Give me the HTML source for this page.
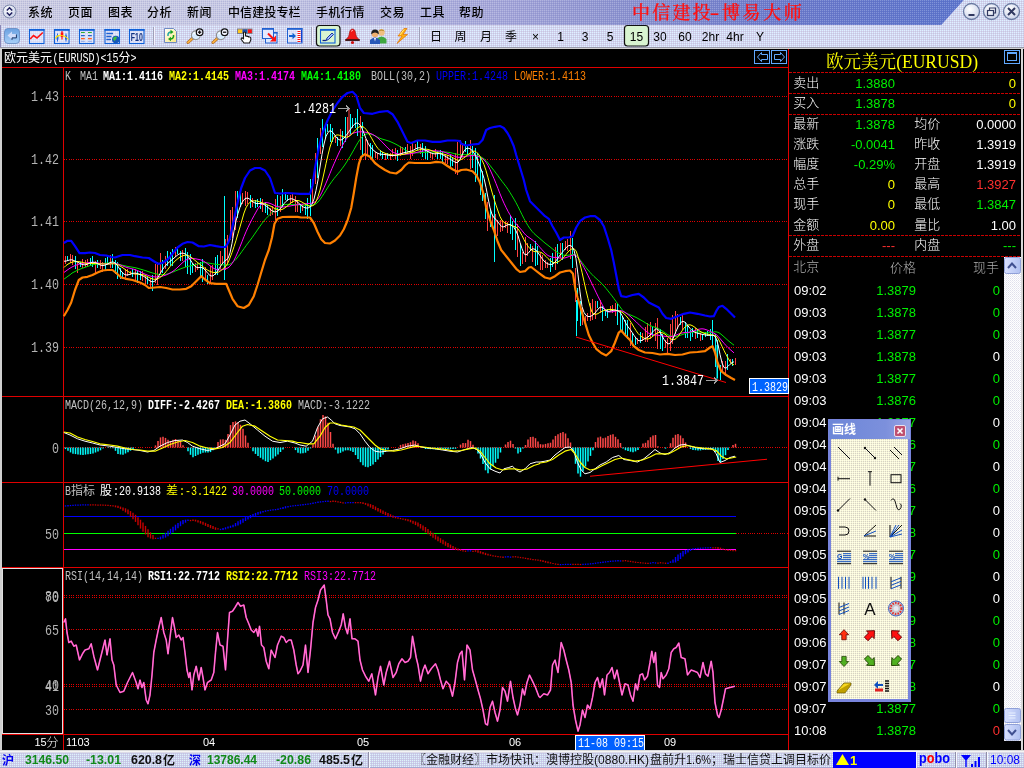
<!DOCTYPE html>
<html lang="zh-CN"><head><meta charset="utf-8"><title>中信建投-博易大师</title>
<style>
html,body{margin:0;padding:0;background:#000;}
body{width:1024px;height:768px;position:relative;overflow:hidden;font-family:"Liberation Sans","Noto Sans CJK SC",sans-serif;}
svg{display:block;will-change:transform}
text{white-space:pre}
</style></head><body>
<svg id="chart" width="1024" height="768" viewBox="0 0 1024 768" style="position:absolute;left:0;top:0" shape-rendering="crispEdges">
<rect x="0" y="49" width="2" height="702" fill="#d0d0d0"/>
<line x1="2" y1="67.5" x2="788" y2="67.5" stroke="#e00000" stroke-width="1"/>
<line x1="2" y1="396.5" x2="788" y2="396.5" stroke="#e00000" stroke-width="1"/>
<line x1="2" y1="482.5" x2="788" y2="482.5" stroke="#e00000" stroke-width="1"/>
<line x1="2" y1="567.5" x2="788" y2="567.5" stroke="#e00000" stroke-width="1"/>
<line x1="2" y1="734.5" x2="788" y2="734.5" stroke="#e00000" stroke-width="1"/>
<line x1="63.5" y1="67" x2="63.5" y2="750" stroke="#e00000" stroke-width="1"/>
<line x1="788.5" y1="49" x2="788.5" y2="750" stroke="#e00000" stroke-width="1"/>
<line x1="64" y1="96.5" x2="788" y2="96.5" stroke="#e00000" stroke-width="1" stroke-dasharray="1 1.3"/>
<line x1="64" y1="159.5" x2="788" y2="159.5" stroke="#e00000" stroke-width="1" stroke-dasharray="1 1.3"/>
<line x1="64" y1="221.5" x2="788" y2="221.5" stroke="#e00000" stroke-width="1" stroke-dasharray="1 1.3"/>
<line x1="64" y1="284.5" x2="788" y2="284.5" stroke="#e00000" stroke-width="1" stroke-dasharray="1 1.3"/>
<line x1="64" y1="347.5" x2="788" y2="347.5" stroke="#e00000" stroke-width="1" stroke-dasharray="1 1.3"/>
<line x1="64" y1="447.5" x2="788" y2="447.5" stroke="#e00000" stroke-width="1" stroke-dasharray="1 1.3"/>
<line x1="736" y1="533.5" x2="788" y2="533.5" stroke="#e00000" stroke-width="1" stroke-dasharray="1 1.3"/>
<line x1="64" y1="595.5" x2="788" y2="595.5" stroke="#e00000" stroke-width="1" stroke-dasharray="1 1.3"/>
<line x1="64" y1="597.5" x2="788" y2="597.5" stroke="#e00000" stroke-width="1" stroke-dasharray="1 1.3"/>
<line x1="64" y1="629.5" x2="788" y2="629.5" stroke="#e00000" stroke-width="1" stroke-dasharray="1 1.3"/>
<line x1="64" y1="684.5" x2="788" y2="684.5" stroke="#e00000" stroke-width="1" stroke-dasharray="1 1.3"/>
<line x1="64" y1="686.5" x2="788" y2="686.5" stroke="#e00000" stroke-width="1" stroke-dasharray="1 1.3"/>
<line x1="64" y1="709.5" x2="788" y2="709.5" stroke="#e00000" stroke-width="1" stroke-dasharray="1 1.3"/>
<path d="M2.5,568.5 H62.5 V733.5 H2.5 Z" fill="none" stroke="#e0e0e0" stroke-width="1"/>
<text x="59" y="101" fill="#b4b4b4" font-size="14" font-family='"Liberation Mono","Noto Sans CJK SC",monospace' text-anchor="end" font-weight="normal" textLength="28" lengthAdjust="spacingAndGlyphs" >1.43</text>
<text x="59" y="164" fill="#b4b4b4" font-size="14" font-family='"Liberation Mono","Noto Sans CJK SC",monospace' text-anchor="end" font-weight="normal" textLength="28" lengthAdjust="spacingAndGlyphs" >1.42</text>
<text x="59" y="226" fill="#b4b4b4" font-size="14" font-family='"Liberation Mono","Noto Sans CJK SC",monospace' text-anchor="end" font-weight="normal" textLength="28" lengthAdjust="spacingAndGlyphs" >1.41</text>
<text x="59" y="289" fill="#b4b4b4" font-size="14" font-family='"Liberation Mono","Noto Sans CJK SC",monospace' text-anchor="end" font-weight="normal" textLength="28" lengthAdjust="spacingAndGlyphs" >1.40</text>
<text x="59" y="352" fill="#b4b4b4" font-size="14" font-family='"Liberation Mono","Noto Sans CJK SC",monospace' text-anchor="end" font-weight="normal" textLength="28" lengthAdjust="spacingAndGlyphs" >1.39</text>
<text x="59" y="452.5" fill="#b4b4b4" font-size="14" font-family='"Liberation Mono","Noto Sans CJK SC",monospace' text-anchor="end" font-weight="normal" textLength="7" lengthAdjust="spacingAndGlyphs" >0</text>
<text x="59" y="538.5" fill="#b4b4b4" font-size="14" font-family='"Liberation Mono","Noto Sans CJK SC",monospace' text-anchor="end" font-weight="normal" textLength="14" lengthAdjust="spacingAndGlyphs" >50</text>
<text x="59" y="601" fill="#b4b4b4" font-size="14" font-family='"Liberation Mono","Noto Sans CJK SC",monospace' text-anchor="end" font-weight="normal" textLength="14" lengthAdjust="spacingAndGlyphs" >80</text>
<text x="59" y="602" fill="#b4b4b4" font-size="14" font-family='"Liberation Mono","Noto Sans CJK SC",monospace' text-anchor="end" font-weight="normal" textLength="14" lengthAdjust="spacingAndGlyphs" >70</text>
<text x="59" y="635" fill="#b4b4b4" font-size="14" font-family='"Liberation Mono","Noto Sans CJK SC",monospace' text-anchor="end" font-weight="normal" textLength="14" lengthAdjust="spacingAndGlyphs" >65</text>
<text x="59" y="690" fill="#b4b4b4" font-size="14" font-family='"Liberation Mono","Noto Sans CJK SC",monospace' text-anchor="end" font-weight="normal" textLength="14" lengthAdjust="spacingAndGlyphs" >40</text>
<text x="59" y="691" fill="#b4b4b4" font-size="14" font-family='"Liberation Mono","Noto Sans CJK SC",monospace' text-anchor="end" font-weight="normal" textLength="14" lengthAdjust="spacingAndGlyphs" >41</text>
<text x="59" y="715" fill="#b4b4b4" font-size="14" font-family='"Liberation Mono","Noto Sans CJK SC",monospace' text-anchor="end" font-weight="normal" textLength="14" lengthAdjust="spacingAndGlyphs" >30</text>
<text x="65" y="80" fill="#c0c0c0" font-size="12" font-family='"Liberation Mono","Noto Sans CJK SC",monospace' text-anchor="start" font-weight="normal" textLength="6" lengthAdjust="spacingAndGlyphs" >K</text>
<text x="80" y="80" fill="#c0c0c0" font-size="12" font-family='"Liberation Mono","Noto Sans CJK SC",monospace' text-anchor="start" font-weight="normal" textLength="18" lengthAdjust="spacingAndGlyphs" >MA1</text>
<text x="103" y="80" fill="#ffffff" font-size="12" font-family='"Liberation Mono","Noto Sans CJK SC",monospace' text-anchor="start" font-weight="bold" textLength="60" lengthAdjust="spacingAndGlyphs" >MA1:1.4116</text>
<text x="169" y="80" fill="#ffff00" font-size="12" font-family='"Liberation Mono","Noto Sans CJK SC",monospace' text-anchor="start" font-weight="bold" textLength="60" lengthAdjust="spacingAndGlyphs" >MA2:1.4145</text>
<text x="235" y="80" fill="#ff00ff" font-size="12" font-family='"Liberation Mono","Noto Sans CJK SC",monospace' text-anchor="start" font-weight="bold" textLength="60" lengthAdjust="spacingAndGlyphs" >MA3:1.4174</text>
<text x="301" y="80" fill="#00ff00" font-size="12" font-family='"Liberation Mono","Noto Sans CJK SC",monospace' text-anchor="start" font-weight="bold" textLength="60" lengthAdjust="spacingAndGlyphs" >MA4:1.4180</text>
<text x="371" y="80" fill="#c0c0c0" font-size="12" font-family='"Liberation Mono","Noto Sans CJK SC",monospace' text-anchor="start" font-weight="normal" textLength="60" lengthAdjust="spacingAndGlyphs" >BOLL(30,2)</text>
<text x="436" y="80" fill="#0000ff" font-size="12" font-family='"Liberation Mono","Noto Sans CJK SC",monospace' text-anchor="start" font-weight="normal" textLength="72" lengthAdjust="spacingAndGlyphs" >UPPER:1.4248</text>
<text x="514" y="80" fill="#ff8000" font-size="12" font-family='"Liberation Mono","Noto Sans CJK SC",monospace' text-anchor="start" font-weight="normal" textLength="72" lengthAdjust="spacingAndGlyphs" >LOWER:1.4113</text>
<text x="65" y="409" fill="#c0c0c0" font-size="12" font-family='"Liberation Mono","Noto Sans CJK SC",monospace' text-anchor="start" font-weight="normal" textLength="78" lengthAdjust="spacingAndGlyphs" >MACD(26,12,9)</text>
<text x="148" y="409" fill="#ffffff" font-size="12" font-family='"Liberation Mono","Noto Sans CJK SC",monospace' text-anchor="start" font-weight="bold" textLength="72" lengthAdjust="spacingAndGlyphs" >DIFF:-2.4267</text>
<text x="226" y="409" fill="#ffff00" font-size="12" font-family='"Liberation Mono","Noto Sans CJK SC",monospace' text-anchor="start" font-weight="bold" textLength="66" lengthAdjust="spacingAndGlyphs" >DEA:-1.3860</text>
<text x="298" y="409" fill="#c0c0c0" font-size="12" font-family='"Liberation Mono","Noto Sans CJK SC",monospace' text-anchor="start" font-weight="normal" textLength="72" lengthAdjust="spacingAndGlyphs" >MACD:-3.1222</text>
<text x="65" y="495" fill="#c0c0c0" font-size="12" font-family='"Liberation Mono","Noto Sans CJK SC",monospace' text-anchor="start" font-weight="normal" textLength="6" lengthAdjust="spacingAndGlyphs" >B</text>
<text x="71" y="495" fill="#c0c0c0" font-size="12" font-family='"Liberation Sans","Noto Sans CJK SC",sans-serif'>指标</text>
<text x="100" y="495" fill="#fff" font-size="12" font-family='"Liberation Sans","Noto Sans CJK SC",sans-serif'>股</text>
<text x="113" y="495" fill="#ffffff" font-size="12" font-family='"Liberation Mono","Noto Sans CJK SC",monospace' text-anchor="start" font-weight="normal" textLength="48" lengthAdjust="spacingAndGlyphs" >:20.9138</text>
<text x="166" y="495" fill="#ff0" font-size="12" font-family='"Liberation Sans","Noto Sans CJK SC",sans-serif'>差</text>
<text x="179" y="495" fill="#ffff00" font-size="12" font-family='"Liberation Mono","Noto Sans CJK SC",monospace' text-anchor="start" font-weight="normal" textLength="48" lengthAdjust="spacingAndGlyphs" >:-3.1422</text>
<text x="232" y="495" fill="#ff00ff" font-size="12" font-family='"Liberation Mono","Noto Sans CJK SC",monospace' text-anchor="start" font-weight="normal" textLength="42" lengthAdjust="spacingAndGlyphs" >30.0000</text>
<text x="279" y="495" fill="#00ff00" font-size="12" font-family='"Liberation Mono","Noto Sans CJK SC",monospace' text-anchor="start" font-weight="normal" textLength="42" lengthAdjust="spacingAndGlyphs" >50.0000</text>
<text x="327" y="495" fill="#0000ff" font-size="12" font-family='"Liberation Mono","Noto Sans CJK SC",monospace' text-anchor="start" font-weight="normal" textLength="42" lengthAdjust="spacingAndGlyphs" >70.0000</text>
<text x="65" y="580" fill="#c0c0c0" font-size="12" font-family='"Liberation Mono","Noto Sans CJK SC",monospace' text-anchor="start" font-weight="normal" textLength="78" lengthAdjust="spacingAndGlyphs" >RSI(14,14,14)</text>
<text x="148" y="580" fill="#ffffff" font-size="12" font-family='"Liberation Mono","Noto Sans CJK SC",monospace' text-anchor="start" font-weight="bold" textLength="72" lengthAdjust="spacingAndGlyphs" >RSI1:22.7712</text>
<text x="226" y="580" fill="#ffff00" font-size="12" font-family='"Liberation Mono","Noto Sans CJK SC",monospace' text-anchor="start" font-weight="bold" textLength="72" lengthAdjust="spacingAndGlyphs" >RSI2:22.7712</text>
<text x="304" y="580" fill="#ff00ff" font-size="12" font-family='"Liberation Mono","Noto Sans CJK SC",monospace' text-anchor="start" font-weight="normal" textLength="72" lengthAdjust="spacingAndGlyphs" >RSI3:22.7712</text>
<text x="34.5" y="746.3" fill="#fff" font-size="11" font-family='"Liberation Sans",sans-serif' text-anchor="start">15</text>
<text x="46.5" y="746.5" fill="#fff" font-size="12" font-family='"Liberation Sans","Noto Sans CJK SC",sans-serif' font-weight="300">分</text>
<text x="66" y="746.3" fill="#fff" font-size="11" font-family='"Liberation Sans",sans-serif' text-anchor="start">1103</text>
<text x="203" y="746.3" fill="#fff" font-size="11" font-family='"Liberation Sans",sans-serif' text-anchor="start">04</text>
<text x="357" y="746.3" fill="#fff" font-size="11" font-family='"Liberation Sans",sans-serif' text-anchor="start">05</text>
<text x="509" y="746.3" fill="#fff" font-size="11" font-family='"Liberation Sans",sans-serif' text-anchor="start">06</text>
<text x="664" y="746.3" fill="#fff" font-size="11" font-family='"Liberation Sans",sans-serif' text-anchor="start">09</text>
<rect x="575.5" y="735.5" width="69" height="15" fill="#0060ff" stroke="#ffffff"/>
<text x="578" y="746.5" fill="#ffffff" font-size="12" font-family='"Liberation Mono","Noto Sans CJK SC",monospace' text-anchor="start" font-weight="normal" textLength="66" lengthAdjust="spacingAndGlyphs" >11-08 09:15</text>
<g shape-rendering="auto">
<g shape-rendering="crispEdges">
<line x1="65.5" y1="256.2" x2="65.5" y2="264.1" stroke="#ff4040" stroke-width="1"/>
<line x1="67.5" y1="256.4" x2="67.5" y2="260.8" stroke="#00ffff" stroke-width="1"/>
<line x1="70.5" y1="253.8" x2="70.5" y2="262.6" stroke="#ff4040" stroke-width="1"/>
<line x1="72.5" y1="255.2" x2="72.5" y2="264.9" stroke="#ff4040" stroke-width="1"/>
<line x1="75.5" y1="256.4" x2="75.5" y2="268.8" stroke="#00ffff" stroke-width="1"/>
<line x1="77.5" y1="262.5" x2="77.5" y2="272.5" stroke="#ff4040" stroke-width="1"/>
<line x1="80.5" y1="261.7" x2="80.5" y2="266.5" stroke="#00ffff" stroke-width="1"/>
<line x1="82.5" y1="258.9" x2="82.5" y2="267.9" stroke="#ff4040" stroke-width="1"/>
<line x1="85.5" y1="260.4" x2="85.5" y2="267.0" stroke="#ff4040" stroke-width="1"/>
<line x1="87.5" y1="258.8" x2="87.5" y2="267.2" stroke="#ff4040" stroke-width="1"/>
<line x1="90.5" y1="258.3" x2="90.5" y2="265.8" stroke="#00ffff" stroke-width="1"/>
<line x1="92.5" y1="256.2" x2="92.5" y2="267.3" stroke="#00ffff" stroke-width="1"/>
<line x1="95.5" y1="261.3" x2="95.5" y2="272.5" stroke="#ff4040" stroke-width="1"/>
<line x1="97.5" y1="260.0" x2="97.5" y2="268.2" stroke="#00ffff" stroke-width="1"/>
<line x1="100.5" y1="259.8" x2="100.5" y2="268.6" stroke="#ff4040" stroke-width="1"/>
<line x1="102.5" y1="261.7" x2="102.5" y2="272.3" stroke="#ff4040" stroke-width="1"/>
<line x1="105.5" y1="258.4" x2="105.5" y2="269.6" stroke="#00ffff" stroke-width="1"/>
<line x1="107.5" y1="257.0" x2="107.5" y2="265.1" stroke="#00ffff" stroke-width="1"/>
<line x1="110.5" y1="255.1" x2="110.5" y2="268.3" stroke="#ff4040" stroke-width="1"/>
<line x1="112.5" y1="253.8" x2="112.5" y2="268.0" stroke="#00ffff" stroke-width="1"/>
<line x1="115.5" y1="259.6" x2="115.5" y2="273.8" stroke="#00ffff" stroke-width="1"/>
<line x1="117.5" y1="262.1" x2="117.5" y2="278.5" stroke="#00ffff" stroke-width="1"/>
<line x1="120.5" y1="267.7" x2="120.5" y2="279.3" stroke="#00ffff" stroke-width="1"/>
<line x1="122.5" y1="272.2" x2="122.5" y2="279.0" stroke="#00ffff" stroke-width="1"/>
<line x1="125.5" y1="269.2" x2="125.5" y2="279.5" stroke="#ff4040" stroke-width="1"/>
<line x1="127.5" y1="269.1" x2="127.5" y2="276.4" stroke="#ff4040" stroke-width="1"/>
<line x1="130.5" y1="270.5" x2="130.5" y2="275.2" stroke="#ff4040" stroke-width="1"/>
<line x1="132.5" y1="268.7" x2="132.5" y2="277.3" stroke="#00ffff" stroke-width="1"/>
<line x1="135.5" y1="269.0" x2="135.5" y2="279.7" stroke="#ff4040" stroke-width="1"/>
<line x1="137.5" y1="270.6" x2="137.5" y2="283.0" stroke="#00ffff" stroke-width="1"/>
<line x1="140.5" y1="270.9" x2="140.5" y2="280.0" stroke="#00ffff" stroke-width="1"/>
<line x1="142.5" y1="271.4" x2="142.5" y2="280.8" stroke="#ff4040" stroke-width="1"/>
<line x1="145.5" y1="275.5" x2="145.5" y2="284.0" stroke="#ff4040" stroke-width="1"/>
<line x1="147.5" y1="276.8" x2="147.5" y2="283.9" stroke="#00ffff" stroke-width="1"/>
<line x1="150.5" y1="278.2" x2="150.5" y2="286.6" stroke="#ff4040" stroke-width="1"/>
<line x1="152.5" y1="274.8" x2="152.5" y2="291.1" stroke="#00ffff" stroke-width="1"/>
<line x1="155.5" y1="263.5" x2="155.5" y2="283.2" stroke="#ff4040" stroke-width="1"/>
<line x1="157.5" y1="262.0" x2="157.5" y2="284.8" stroke="#ff4040" stroke-width="1"/>
<line x1="160.5" y1="253.1" x2="160.5" y2="274.2" stroke="#ff4040" stroke-width="1"/>
<line x1="162.5" y1="260.1" x2="162.5" y2="273.1" stroke="#00ffff" stroke-width="1"/>
<line x1="165.5" y1="255.5" x2="165.5" y2="269.3" stroke="#ff4040" stroke-width="1"/>
<line x1="167.5" y1="251.1" x2="167.5" y2="266.1" stroke="#00ffff" stroke-width="1"/>
<line x1="170.5" y1="251.9" x2="170.5" y2="266.1" stroke="#00ffff" stroke-width="1"/>
<line x1="172.5" y1="249.0" x2="172.5" y2="266.4" stroke="#00ffff" stroke-width="1"/>
<line x1="175.5" y1="247.0" x2="175.5" y2="257.4" stroke="#ff4040" stroke-width="1"/>
<line x1="177.5" y1="248.0" x2="177.5" y2="254.4" stroke="#00ffff" stroke-width="1"/>
<line x1="180.5" y1="250.5" x2="180.5" y2="260.5" stroke="#00ffff" stroke-width="1"/>
<line x1="182.5" y1="250.4" x2="182.5" y2="261.3" stroke="#ff4040" stroke-width="1"/>
<line x1="185.5" y1="248.3" x2="185.5" y2="266.9" stroke="#00ffff" stroke-width="1"/>
<line x1="187.5" y1="252.3" x2="187.5" y2="274.3" stroke="#00ffff" stroke-width="1"/>
<line x1="190.5" y1="254.2" x2="190.5" y2="275.1" stroke="#00ffff" stroke-width="1"/>
<line x1="192.5" y1="263.1" x2="192.5" y2="272.7" stroke="#00ffff" stroke-width="1"/>
<line x1="195.5" y1="262.7" x2="195.5" y2="272.2" stroke="#ff4040" stroke-width="1"/>
<line x1="197.5" y1="262.5" x2="197.5" y2="269.9" stroke="#ff4040" stroke-width="1"/>
<line x1="200.5" y1="261.7" x2="200.5" y2="276.6" stroke="#00ffff" stroke-width="1"/>
<line x1="202.5" y1="258.6" x2="202.5" y2="282.1" stroke="#00ffff" stroke-width="1"/>
<line x1="205.5" y1="266.9" x2="205.5" y2="279.6" stroke="#ff4040" stroke-width="1"/>
<line x1="207.5" y1="274.9" x2="207.5" y2="283.5" stroke="#00ffff" stroke-width="1"/>
<line x1="210.5" y1="265.8" x2="210.5" y2="283.9" stroke="#ff4040" stroke-width="1"/>
<line x1="212.5" y1="265.3" x2="212.5" y2="279.8" stroke="#ff4040" stroke-width="1"/>
<line x1="215.5" y1="257.4" x2="215.5" y2="275.3" stroke="#00ffff" stroke-width="1"/>
<line x1="217.5" y1="254.7" x2="217.5" y2="275.0" stroke="#00ffff" stroke-width="1"/>
<line x1="220.5" y1="251.0" x2="220.5" y2="268.5" stroke="#ff4040" stroke-width="1"/>
<line x1="222.5" y1="255.6" x2="222.5" y2="263.6" stroke="#ff4040" stroke-width="1"/>
<line x1="225.5" y1="238.7" x2="225.5" y2="269.5" stroke="#ff4040" stroke-width="1"/>
<line x1="227.5" y1="234.8" x2="227.5" y2="264.6" stroke="#ff4040" stroke-width="1"/>
<line x1="230.5" y1="209.8" x2="230.5" y2="239.7" stroke="#ff4040" stroke-width="1"/>
<line x1="232.5" y1="206.5" x2="232.5" y2="238.3" stroke="#ff4040" stroke-width="1"/>
<line x1="235.5" y1="190.8" x2="235.5" y2="229.8" stroke="#ff4040" stroke-width="1"/>
<line x1="237.5" y1="190.8" x2="237.5" y2="217.9" stroke="#00ffff" stroke-width="1"/>
<line x1="240.5" y1="190.5" x2="240.5" y2="207.2" stroke="#00ffff" stroke-width="1"/>
<line x1="242.5" y1="193.4" x2="242.5" y2="203.7" stroke="#ff4040" stroke-width="1"/>
<line x1="245.5" y1="191.2" x2="245.5" y2="205.8" stroke="#ff4040" stroke-width="1"/>
<line x1="247.5" y1="192.3" x2="247.5" y2="203.7" stroke="#ff4040" stroke-width="1"/>
<line x1="250.5" y1="194.7" x2="250.5" y2="207.8" stroke="#00ffff" stroke-width="1"/>
<line x1="252.5" y1="198.2" x2="252.5" y2="207.3" stroke="#ff4040" stroke-width="1"/>
<line x1="255.5" y1="200.4" x2="255.5" y2="207.7" stroke="#00ffff" stroke-width="1"/>
<line x1="257.5" y1="199.2" x2="257.5" y2="207.2" stroke="#00ffff" stroke-width="1"/>
<line x1="260.5" y1="197.8" x2="260.5" y2="208.8" stroke="#00ffff" stroke-width="1"/>
<line x1="262.5" y1="198.8" x2="262.5" y2="211.7" stroke="#ff4040" stroke-width="1"/>
<line x1="265.5" y1="201.8" x2="265.5" y2="213.3" stroke="#00ffff" stroke-width="1"/>
<line x1="267.5" y1="204.5" x2="267.5" y2="215.3" stroke="#00ffff" stroke-width="1"/>
<line x1="270.5" y1="207.7" x2="270.5" y2="216.0" stroke="#ff4040" stroke-width="1"/>
<line x1="272.5" y1="206.3" x2="272.5" y2="214.5" stroke="#ff4040" stroke-width="1"/>
<line x1="275.5" y1="199.2" x2="275.5" y2="219.6" stroke="#ff4040" stroke-width="1"/>
<line x1="277.5" y1="195.0" x2="277.5" y2="215.9" stroke="#00ffff" stroke-width="1"/>
<line x1="280.5" y1="195.7" x2="280.5" y2="212.4" stroke="#ff4040" stroke-width="1"/>
<line x1="282.5" y1="188.7" x2="282.5" y2="207.2" stroke="#00ffff" stroke-width="1"/>
<line x1="285.5" y1="191.8" x2="285.5" y2="200.3" stroke="#00ffff" stroke-width="1"/>
<line x1="287.5" y1="195.4" x2="287.5" y2="200.7" stroke="#00ffff" stroke-width="1"/>
<line x1="290.5" y1="194.5" x2="290.5" y2="204.3" stroke="#ff4040" stroke-width="1"/>
<line x1="292.5" y1="194.2" x2="292.5" y2="203.2" stroke="#ff4040" stroke-width="1"/>
<line x1="295.5" y1="196.3" x2="295.5" y2="211.8" stroke="#ff4040" stroke-width="1"/>
<line x1="297.5" y1="200.0" x2="297.5" y2="211.9" stroke="#ff4040" stroke-width="1"/>
<line x1="300.5" y1="203.9" x2="300.5" y2="212.6" stroke="#00ffff" stroke-width="1"/>
<line x1="302.5" y1="203.6" x2="302.5" y2="211.0" stroke="#ff4040" stroke-width="1"/>
<line x1="305.5" y1="204.3" x2="305.5" y2="214.5" stroke="#00ffff" stroke-width="1"/>
<line x1="307.5" y1="197.5" x2="307.5" y2="219.0" stroke="#00ffff" stroke-width="1"/>
<line x1="310.5" y1="178.9" x2="310.5" y2="216.4" stroke="#00ffff" stroke-width="1"/>
<line x1="312.5" y1="178.8" x2="312.5" y2="203.0" stroke="#ff4040" stroke-width="1"/>
<line x1="315.5" y1="152.9" x2="315.5" y2="184.0" stroke="#ff4040" stroke-width="1"/>
<line x1="317.5" y1="138.4" x2="317.5" y2="177.9" stroke="#00ffff" stroke-width="1"/>
<line x1="320.5" y1="128.0" x2="320.5" y2="153.8" stroke="#ff4040" stroke-width="1"/>
<line x1="322.5" y1="119.4" x2="322.5" y2="146.8" stroke="#00ffff" stroke-width="1"/>
<line x1="325.5" y1="125.8" x2="325.5" y2="137.7" stroke="#00ffff" stroke-width="1"/>
<line x1="327.5" y1="123.8" x2="327.5" y2="131.7" stroke="#00ffff" stroke-width="1"/>
<line x1="330.5" y1="123.9" x2="330.5" y2="142.1" stroke="#00ffff" stroke-width="1"/>
<line x1="332.5" y1="127.7" x2="332.5" y2="141.5" stroke="#00ffff" stroke-width="1"/>
<line x1="335.5" y1="135.2" x2="335.5" y2="143.3" stroke="#ff4040" stroke-width="1"/>
<line x1="337.5" y1="136.6" x2="337.5" y2="145.8" stroke="#00ffff" stroke-width="1"/>
<line x1="340.5" y1="128.9" x2="340.5" y2="146.2" stroke="#ff4040" stroke-width="1"/>
<line x1="342.5" y1="130.7" x2="342.5" y2="148.2" stroke="#00ffff" stroke-width="1"/>
<line x1="345.5" y1="117.4" x2="345.5" y2="142.4" stroke="#00ffff" stroke-width="1"/>
<line x1="347.5" y1="117.1" x2="347.5" y2="136.6" stroke="#ff4040" stroke-width="1"/>
<line x1="350.5" y1="113.9" x2="350.5" y2="133.8" stroke="#00ffff" stroke-width="1"/>
<line x1="352.5" y1="117.7" x2="352.5" y2="127.5" stroke="#00ffff" stroke-width="1"/>
<line x1="355.5" y1="117.7" x2="355.5" y2="127.7" stroke="#00ffff" stroke-width="1"/>
<line x1="357.5" y1="109.4" x2="357.5" y2="136.0" stroke="#00ffff" stroke-width="1"/>
<line x1="360.5" y1="116.3" x2="360.5" y2="149.5" stroke="#ff4040" stroke-width="1"/>
<line x1="362.5" y1="122.3" x2="362.5" y2="155.0" stroke="#00ffff" stroke-width="1"/>
<line x1="365.5" y1="139.3" x2="365.5" y2="159.5" stroke="#ff4040" stroke-width="1"/>
<line x1="367.5" y1="139.6" x2="367.5" y2="155.9" stroke="#ff4040" stroke-width="1"/>
<line x1="370.5" y1="142.5" x2="370.5" y2="158.7" stroke="#00ffff" stroke-width="1"/>
<line x1="372.5" y1="145.2" x2="372.5" y2="159.7" stroke="#00ffff" stroke-width="1"/>
<line x1="375.5" y1="151.9" x2="375.5" y2="158.0" stroke="#ff4040" stroke-width="1"/>
<line x1="377.5" y1="152.5" x2="377.5" y2="158.6" stroke="#ff4040" stroke-width="1"/>
<line x1="380.5" y1="149.8" x2="380.5" y2="156.4" stroke="#00ffff" stroke-width="1"/>
<line x1="382.5" y1="152.4" x2="382.5" y2="159.2" stroke="#00ffff" stroke-width="1"/>
<line x1="385.5" y1="152.8" x2="385.5" y2="159.6" stroke="#ff4040" stroke-width="1"/>
<line x1="387.5" y1="153.3" x2="387.5" y2="159.4" stroke="#00ffff" stroke-width="1"/>
<line x1="390.5" y1="152.6" x2="390.5" y2="159.8" stroke="#ff4040" stroke-width="1"/>
<line x1="392.5" y1="149.3" x2="392.5" y2="157.3" stroke="#ff4040" stroke-width="1"/>
<line x1="395.5" y1="148.1" x2="395.5" y2="159.2" stroke="#ff4040" stroke-width="1"/>
<line x1="397.5" y1="150.3" x2="397.5" y2="160.5" stroke="#00ffff" stroke-width="1"/>
<line x1="400.5" y1="146.4" x2="400.5" y2="155.5" stroke="#ff4040" stroke-width="1"/>
<line x1="402.5" y1="146.5" x2="402.5" y2="153.9" stroke="#ff4040" stroke-width="1"/>
<line x1="405.5" y1="146.7" x2="405.5" y2="153.5" stroke="#00ffff" stroke-width="1"/>
<line x1="407.5" y1="144.2" x2="407.5" y2="154.4" stroke="#ff4040" stroke-width="1"/>
<line x1="410.5" y1="145.6" x2="410.5" y2="158.9" stroke="#ff4040" stroke-width="1"/>
<line x1="412.5" y1="142.9" x2="412.5" y2="155.9" stroke="#ff4040" stroke-width="1"/>
<line x1="415.5" y1="143.7" x2="415.5" y2="148.9" stroke="#ff4040" stroke-width="1"/>
<line x1="417.5" y1="140.5" x2="417.5" y2="150.4" stroke="#00ffff" stroke-width="1"/>
<line x1="420.5" y1="144.2" x2="420.5" y2="153.7" stroke="#ff4040" stroke-width="1"/>
<line x1="422.5" y1="143.0" x2="422.5" y2="156.7" stroke="#00ffff" stroke-width="1"/>
<line x1="425.5" y1="145.7" x2="425.5" y2="159.4" stroke="#00ffff" stroke-width="1"/>
<line x1="427.5" y1="150.6" x2="427.5" y2="159.7" stroke="#00ffff" stroke-width="1"/>
<line x1="430.5" y1="151.6" x2="430.5" y2="157.9" stroke="#ff4040" stroke-width="1"/>
<line x1="432.5" y1="152.9" x2="432.5" y2="158.9" stroke="#ff4040" stroke-width="1"/>
<line x1="435.5" y1="148.5" x2="435.5" y2="156.8" stroke="#ff4040" stroke-width="1"/>
<line x1="437.5" y1="150.5" x2="437.5" y2="159.1" stroke="#00ffff" stroke-width="1"/>
<line x1="440.5" y1="150.0" x2="440.5" y2="158.7" stroke="#00ffff" stroke-width="1"/>
<line x1="442.5" y1="152.3" x2="442.5" y2="164.1" stroke="#00ffff" stroke-width="1"/>
<line x1="445.5" y1="154.2" x2="445.5" y2="162.7" stroke="#ff4040" stroke-width="1"/>
<line x1="447.5" y1="155.2" x2="447.5" y2="163.7" stroke="#ff4040" stroke-width="1"/>
<line x1="450.5" y1="154.5" x2="450.5" y2="168.6" stroke="#00ffff" stroke-width="1"/>
<line x1="452.5" y1="158.0" x2="452.5" y2="166.3" stroke="#00ffff" stroke-width="1"/>
<line x1="455.5" y1="153.1" x2="455.5" y2="174.0" stroke="#ff4040" stroke-width="1"/>
<line x1="457.5" y1="141.5" x2="457.5" y2="175.2" stroke="#ff4040" stroke-width="1"/>
<line x1="460.5" y1="140.3" x2="460.5" y2="158.3" stroke="#ff4040" stroke-width="1"/>
<line x1="462.5" y1="143.2" x2="462.5" y2="157.2" stroke="#ff4040" stroke-width="1"/>
<line x1="465.5" y1="141.4" x2="465.5" y2="151.7" stroke="#00ffff" stroke-width="1"/>
<line x1="467.5" y1="144.8" x2="467.5" y2="155.3" stroke="#00ffff" stroke-width="1"/>
<line x1="470.5" y1="140.1" x2="470.5" y2="168.9" stroke="#ff4040" stroke-width="1"/>
<line x1="472.5" y1="145.7" x2="472.5" y2="168.0" stroke="#00ffff" stroke-width="1"/>
<line x1="475.5" y1="148.2" x2="475.5" y2="182.2" stroke="#00ffff" stroke-width="1"/>
<line x1="477.5" y1="152.8" x2="477.5" y2="179.2" stroke="#00ffff" stroke-width="1"/>
<line x1="480.5" y1="156.8" x2="480.5" y2="194.6" stroke="#00ffff" stroke-width="1"/>
<line x1="482.5" y1="170.8" x2="482.5" y2="200.7" stroke="#00ffff" stroke-width="1"/>
<line x1="485.5" y1="192.9" x2="485.5" y2="219.3" stroke="#00ffff" stroke-width="1"/>
<line x1="487.5" y1="202.2" x2="487.5" y2="231.3" stroke="#ff4040" stroke-width="1"/>
<line x1="490.5" y1="210.4" x2="490.5" y2="226.6" stroke="#00ffff" stroke-width="1"/>
<line x1="492.5" y1="213.9" x2="492.5" y2="227.0" stroke="#ff4040" stroke-width="1"/>
<line x1="495.5" y1="213.5" x2="495.5" y2="232.8" stroke="#ff4040" stroke-width="1"/>
<line x1="497.5" y1="220.3" x2="497.5" y2="235.8" stroke="#ff4040" stroke-width="1"/>
<line x1="500.5" y1="219.5" x2="500.5" y2="232.2" stroke="#ff4040" stroke-width="1"/>
<line x1="502.5" y1="219.5" x2="502.5" y2="231.1" stroke="#ff4040" stroke-width="1"/>
<line x1="505.5" y1="221.3" x2="505.5" y2="228.3" stroke="#ff4040" stroke-width="1"/>
<line x1="507.5" y1="221.8" x2="507.5" y2="233.2" stroke="#ff4040" stroke-width="1"/>
<line x1="510.5" y1="215.1" x2="510.5" y2="234.1" stroke="#00ffff" stroke-width="1"/>
<line x1="512.5" y1="220.5" x2="512.5" y2="239.8" stroke="#00ffff" stroke-width="1"/>
<line x1="515.5" y1="217.8" x2="515.5" y2="250.1" stroke="#00ffff" stroke-width="1"/>
<line x1="517.5" y1="224.0" x2="517.5" y2="256.5" stroke="#ff4040" stroke-width="1"/>
<line x1="520.5" y1="243.7" x2="520.5" y2="266.3" stroke="#00ffff" stroke-width="1"/>
<line x1="522.5" y1="252.4" x2="522.5" y2="264.3" stroke="#ff4040" stroke-width="1"/>
<line x1="525.5" y1="237.0" x2="525.5" y2="262.1" stroke="#ff4040" stroke-width="1"/>
<line x1="527.5" y1="243.3" x2="527.5" y2="256.3" stroke="#ff4040" stroke-width="1"/>
<line x1="530.5" y1="244.0" x2="530.5" y2="250.2" stroke="#00ffff" stroke-width="1"/>
<line x1="532.5" y1="246.2" x2="532.5" y2="262.4" stroke="#ff4040" stroke-width="1"/>
<line x1="535.5" y1="241.3" x2="535.5" y2="265.8" stroke="#00ffff" stroke-width="1"/>
<line x1="537.5" y1="245.9" x2="537.5" y2="264.7" stroke="#00ffff" stroke-width="1"/>
<line x1="540.5" y1="253.4" x2="540.5" y2="270.3" stroke="#ff4040" stroke-width="1"/>
<line x1="542.5" y1="254.9" x2="542.5" y2="270.4" stroke="#ff4040" stroke-width="1"/>
<line x1="545.5" y1="260.2" x2="545.5" y2="267.8" stroke="#ff4040" stroke-width="1"/>
<line x1="547.5" y1="261.8" x2="547.5" y2="268.3" stroke="#ff4040" stroke-width="1"/>
<line x1="550.5" y1="258.0" x2="550.5" y2="271.6" stroke="#00ffff" stroke-width="1"/>
<line x1="552.5" y1="252.6" x2="552.5" y2="266.5" stroke="#00ffff" stroke-width="1"/>
<line x1="555.5" y1="246.9" x2="555.5" y2="270.2" stroke="#ff4040" stroke-width="1"/>
<line x1="557.5" y1="244.4" x2="557.5" y2="264.1" stroke="#00ffff" stroke-width="1"/>
<line x1="560.5" y1="242.7" x2="560.5" y2="257.9" stroke="#ff4040" stroke-width="1"/>
<line x1="562.5" y1="242.8" x2="562.5" y2="259.5" stroke="#00ffff" stroke-width="1"/>
<line x1="565.5" y1="241.0" x2="565.5" y2="250.1" stroke="#ff4040" stroke-width="1"/>
<line x1="567.5" y1="239.1" x2="567.5" y2="251.2" stroke="#ff4040" stroke-width="1"/>
<line x1="570.5" y1="231.1" x2="570.5" y2="259.4" stroke="#ff4040" stroke-width="1"/>
<line x1="572.5" y1="237.8" x2="572.5" y2="267.5" stroke="#00ffff" stroke-width="1"/>
<line x1="575.5" y1="268.2" x2="575.5" y2="302.4" stroke="#ff4040" stroke-width="1"/>
<line x1="577.5" y1="287.8" x2="577.5" y2="321.4" stroke="#00ffff" stroke-width="1"/>
<line x1="580.5" y1="301.2" x2="580.5" y2="325.5" stroke="#00ffff" stroke-width="1"/>
<line x1="582.5" y1="307.5" x2="582.5" y2="325.1" stroke="#ff4040" stroke-width="1"/>
<line x1="585.5" y1="316.2" x2="585.5" y2="321.6" stroke="#ff4040" stroke-width="1"/>
<line x1="587.5" y1="313.3" x2="587.5" y2="321.3" stroke="#ff4040" stroke-width="1"/>
<line x1="590.5" y1="303.2" x2="590.5" y2="320.9" stroke="#ff4040" stroke-width="1"/>
<line x1="592.5" y1="299.1" x2="592.5" y2="320.2" stroke="#ff4040" stroke-width="1"/>
<line x1="595.5" y1="301.0" x2="595.5" y2="318.6" stroke="#ff4040" stroke-width="1"/>
<line x1="597.5" y1="301.4" x2="597.5" y2="308.4" stroke="#00ffff" stroke-width="1"/>
<line x1="600.5" y1="300.4" x2="600.5" y2="312.9" stroke="#ff4040" stroke-width="1"/>
<line x1="602.5" y1="305.9" x2="602.5" y2="321.2" stroke="#00ffff" stroke-width="1"/>
<line x1="605.5" y1="310.4" x2="605.5" y2="316.4" stroke="#00ffff" stroke-width="1"/>
<line x1="607.5" y1="309.4" x2="607.5" y2="317.5" stroke="#00ffff" stroke-width="1"/>
<line x1="610.5" y1="306.0" x2="610.5" y2="311.2" stroke="#ff4040" stroke-width="1"/>
<line x1="612.5" y1="305.2" x2="612.5" y2="313.0" stroke="#ff4040" stroke-width="1"/>
<line x1="615.5" y1="303.4" x2="615.5" y2="316.4" stroke="#ff4040" stroke-width="1"/>
<line x1="617.5" y1="304.2" x2="617.5" y2="325.2" stroke="#00ffff" stroke-width="1"/>
<line x1="620.5" y1="309.6" x2="620.5" y2="330.2" stroke="#00ffff" stroke-width="1"/>
<line x1="622.5" y1="316.7" x2="622.5" y2="333.3" stroke="#00ffff" stroke-width="1"/>
<line x1="625.5" y1="320.1" x2="625.5" y2="335.7" stroke="#00ffff" stroke-width="1"/>
<line x1="627.5" y1="319.9" x2="627.5" y2="338.7" stroke="#00ffff" stroke-width="1"/>
<line x1="630.5" y1="323.2" x2="630.5" y2="345.8" stroke="#ff4040" stroke-width="1"/>
<line x1="632.5" y1="332.5" x2="632.5" y2="345.5" stroke="#00ffff" stroke-width="1"/>
<line x1="635.5" y1="336.5" x2="635.5" y2="345.2" stroke="#00ffff" stroke-width="1"/>
<line x1="637.5" y1="337.7" x2="637.5" y2="344.0" stroke="#ff4040" stroke-width="1"/>
<line x1="640.5" y1="332.0" x2="640.5" y2="343.0" stroke="#00ffff" stroke-width="1"/>
<line x1="642.5" y1="332.8" x2="642.5" y2="341.1" stroke="#ff4040" stroke-width="1"/>
<line x1="645.5" y1="326.9" x2="645.5" y2="342.1" stroke="#ff4040" stroke-width="1"/>
<line x1="647.5" y1="322.7" x2="647.5" y2="342.0" stroke="#ff4040" stroke-width="1"/>
<line x1="650.5" y1="321.8" x2="650.5" y2="338.6" stroke="#ff4040" stroke-width="1"/>
<line x1="652.5" y1="326.5" x2="652.5" y2="336.1" stroke="#00ffff" stroke-width="1"/>
<line x1="655.5" y1="323.2" x2="655.5" y2="341.4" stroke="#ff4040" stroke-width="1"/>
<line x1="657.5" y1="318.1" x2="657.5" y2="349.3" stroke="#ff4040" stroke-width="1"/>
<line x1="660.5" y1="329.2" x2="660.5" y2="349.1" stroke="#00ffff" stroke-width="1"/>
<line x1="662.5" y1="334.2" x2="662.5" y2="350.8" stroke="#00ffff" stroke-width="1"/>
<line x1="665.5" y1="339.5" x2="665.5" y2="348.4" stroke="#ff4040" stroke-width="1"/>
<line x1="667.5" y1="337.9" x2="667.5" y2="354.9" stroke="#ff4040" stroke-width="1"/>
<line x1="670.5" y1="323.9" x2="670.5" y2="350.7" stroke="#ff4040" stroke-width="1"/>
<line x1="672.5" y1="314.8" x2="672.5" y2="344.0" stroke="#ff4040" stroke-width="1"/>
<line x1="675.5" y1="310.8" x2="675.5" y2="333.5" stroke="#ff4040" stroke-width="1"/>
<line x1="677.5" y1="313.5" x2="677.5" y2="329.3" stroke="#ff4040" stroke-width="1"/>
<line x1="680.5" y1="316.7" x2="680.5" y2="324.6" stroke="#00ffff" stroke-width="1"/>
<line x1="682.5" y1="313.6" x2="682.5" y2="330.2" stroke="#ff4040" stroke-width="1"/>
<line x1="685.5" y1="321.9" x2="685.5" y2="338.1" stroke="#00ffff" stroke-width="1"/>
<line x1="687.5" y1="325.0" x2="687.5" y2="337.7" stroke="#00ffff" stroke-width="1"/>
<line x1="690.5" y1="330.0" x2="690.5" y2="340.5" stroke="#00ffff" stroke-width="1"/>
<line x1="692.5" y1="328.1" x2="692.5" y2="337.3" stroke="#00ffff" stroke-width="1"/>
<line x1="695.5" y1="328.2" x2="695.5" y2="338.8" stroke="#ff4040" stroke-width="1"/>
<line x1="697.5" y1="329.9" x2="697.5" y2="337.9" stroke="#00ffff" stroke-width="1"/>
<line x1="700.5" y1="333.1" x2="700.5" y2="340.7" stroke="#ff4040" stroke-width="1"/>
<line x1="702.5" y1="333.8" x2="702.5" y2="339.9" stroke="#00ffff" stroke-width="1"/>
<line x1="705.5" y1="331.8" x2="705.5" y2="337.2" stroke="#00ffff" stroke-width="1"/>
<line x1="707.5" y1="331.3" x2="707.5" y2="335.7" stroke="#00ffff" stroke-width="1"/>
<line x1="710.5" y1="328.5" x2="710.5" y2="340.1" stroke="#00ffff" stroke-width="1"/>
<line x1="712.5" y1="319.7" x2="712.5" y2="348.2" stroke="#00ffff" stroke-width="1"/>
<line x1="715.5" y1="333.7" x2="715.5" y2="366.5" stroke="#00ffff" stroke-width="1"/>
<line x1="717.5" y1="339.6" x2="717.5" y2="378.0" stroke="#00ffff" stroke-width="1"/>
<line x1="720.5" y1="365.1" x2="720.5" y2="380.3" stroke="#00ffff" stroke-width="1"/>
<line x1="722.5" y1="361.2" x2="722.5" y2="373.0" stroke="#ff4040" stroke-width="1"/>
<line x1="725.5" y1="361.0" x2="725.5" y2="375.7" stroke="#ff4040" stroke-width="1"/>
<line x1="727.5" y1="353.8" x2="727.5" y2="370.3" stroke="#00ffff" stroke-width="1"/>
<line x1="730.5" y1="358.7" x2="730.5" y2="362.8" stroke="#ff4040" stroke-width="1"/>
<line x1="732.5" y1="359.0" x2="732.5" y2="365.5" stroke="#00ffff" stroke-width="1"/>
<line x1="735.5" y1="358.3" x2="735.5" y2="364.9" stroke="#ff4040" stroke-width="1"/>
</g>
<line x1="576.5" y1="300" x2="576.5" y2="336" stroke="#00ffff" stroke-width="1"/>
<line x1="494.5" y1="195" x2="494.5" y2="262" stroke="#00ffff" stroke-width="1"/>
<line x1="224.5" y1="196" x2="224.5" y2="280" stroke="#00ffff" stroke-width="1"/>
<line x1="349" y1="109" x2="349" y2="135" stroke="#ff4040" stroke-width="1"/>
<line x1="717" y1="345" x2="717" y2="381" stroke="#00ffff" stroke-width="1"/>
<polyline points="64.0,279.1 66.0,277.7 68.0,276.2 70.0,274.8 72.0,273.1 74.0,272.0 76.0,271.0 78.0,270.0 80.0,269.2 82.0,268.4 84.0,267.7 86.0,267.0 88.0,266.3 90.0,265.6 92.0,265.0 94.0,264.5 96.0,264.2 98.0,263.9 100.0,263.7 102.0,263.5 104.0,263.3 106.0,263.1 108.0,263.0 110.0,262.9 112.0,262.9 114.0,263.1 116.0,263.5 118.0,264.0 120.0,264.6 122.0,265.1 124.0,265.6 126.0,266.1 128.0,266.5 130.0,266.8 132.0,267.1 134.0,267.5 136.0,267.9 138.0,268.4 140.0,269.0 142.0,269.6 144.0,270.2 146.0,270.8 148.0,271.5 150.0,272.2 152.0,272.8 154.0,273.4 156.0,273.9 158.0,274.3 160.0,274.5 162.0,274.7 164.0,274.6 166.0,274.3 168.0,273.8 170.0,273.1 172.0,272.4 174.0,271.6 176.0,270.7 178.0,269.9 180.0,269.1 182.0,268.3 184.0,267.6 186.0,266.9 188.0,266.4 190.0,265.9 192.0,265.5 194.0,265.1 196.0,264.5 198.0,263.9 200.0,263.3 202.0,262.9 204.0,262.6 206.0,262.7 208.0,263.0 210.0,263.3 212.0,263.7 214.0,264.0 216.0,264.3 218.0,264.5 220.0,264.6 222.0,264.8 224.0,264.9 226.0,265.2 228.0,265.0 230.0,264.1 232.0,262.9 234.0,261.3 236.0,259.3 238.0,256.8 240.0,254.2 242.0,251.4 244.0,248.6 246.0,245.8 248.0,243.1 250.0,240.5 252.0,237.8 254.0,234.9 256.0,232.0 258.0,229.1 260.0,226.2 262.0,223.4 264.0,220.8 266.0,218.5 268.0,216.5 270.0,214.4 272.0,212.4 274.0,210.5 276.0,208.5 278.0,207.0 280.0,206.1 282.0,205.3 284.0,204.8 286.0,204.5 288.0,204.3 290.0,204.3 292.0,204.4 294.0,204.5 296.0,204.6 298.0,204.8 300.0,204.9 302.0,205.1 304.0,205.2 306.0,205.4 308.0,205.6 310.0,205.7 312.0,205.5 314.0,204.9 316.0,203.8 318.0,202.0 320.0,199.6 322.0,196.7 324.0,193.6 326.0,190.3 328.0,187.1 330.0,184.1 332.0,181.3 334.0,178.6 336.0,176.2 338.0,173.8 340.0,171.3 342.0,168.7 344.0,166.0 346.0,163.0 348.0,159.9 350.0,156.5 352.0,153.0 354.0,149.5 356.0,145.9 358.0,142.5 360.0,139.4 362.0,136.9 364.0,135.1 366.0,134.1 368.0,133.7 370.0,134.0 372.0,134.6 374.0,135.4 376.0,136.4 378.0,137.4 380.0,138.3 382.0,139.0 384.0,139.6 386.0,140.2 388.0,140.8 390.0,141.5 392.0,142.4 394.0,143.3 396.0,144.3 398.0,145.4 400.0,146.6 402.0,147.9 404.0,149.1 406.0,150.3 408.0,151.3 410.0,152.1 412.0,152.6 414.0,152.8 416.0,152.8 418.0,152.8 420.0,152.7 422.0,152.5 424.0,152.4 426.0,152.3 428.0,152.2 430.0,152.2 432.0,152.1 434.0,152.1 436.0,152.0 438.0,151.9 440.0,151.9 442.0,151.8 444.0,151.9 446.0,152.1 448.0,152.3 450.0,152.6 452.0,153.0 454.0,153.5 456.0,154.0 458.0,154.4 460.0,154.6 462.0,154.6 464.0,154.7 466.0,154.7 468.0,154.7 470.0,154.7 472.0,154.8 474.0,155.0 476.0,155.3 478.0,155.8 480.0,156.5 482.0,157.5 484.0,158.8 486.0,160.6 488.0,162.9 490.0,165.4 492.0,168.0 494.0,170.5 496.0,173.1 498.0,175.8 500.0,178.6 502.0,181.3 504.0,183.9 506.0,186.5 508.0,189.3 510.0,192.5 512.0,195.8 514.0,199.1 516.0,202.7 518.0,206.5 520.0,210.6 522.0,214.7 524.0,218.7 526.0,222.4 528.0,225.7 530.0,228.7 532.0,231.3 534.0,233.5 536.0,235.3 538.0,237.0 540.0,238.7 542.0,240.4 544.0,242.2 546.0,243.8 548.0,245.3 550.0,246.9 552.0,248.5 554.0,250.1 556.0,251.5 558.0,252.7 560.0,253.8 562.0,254.7 564.0,255.2 566.0,255.5 568.0,255.2 570.0,254.9 572.0,254.5 574.0,254.5 576.0,255.3 578.0,257.3 580.0,259.7 582.0,262.4 584.0,265.1 586.0,267.7 588.0,270.0 590.0,272.3 592.0,274.5 594.0,276.5 596.0,278.3 598.0,280.1 600.0,281.9 602.0,283.8 604.0,286.0 606.0,288.4 608.0,290.9 610.0,293.4 612.0,295.9 614.0,298.6 616.0,301.4 618.0,304.1 620.0,306.8 622.0,309.5 624.0,311.9 626.0,313.1 628.0,314.0 630.0,314.8 632.0,315.6 634.0,316.5 636.0,317.4 638.0,318.5 640.0,319.6 642.0,320.7 644.0,321.9 646.0,323.2 648.0,324.4 650.0,325.5 652.0,326.3 654.0,327.0 656.0,327.6 658.0,328.5 660.0,329.6 662.0,330.8 664.0,332.1 666.0,333.5 668.0,334.8 670.0,335.7 672.0,336.2 674.0,336.5 676.0,336.4 678.0,336.0 680.0,335.4 682.0,334.7 684.0,334.0 686.0,333.3 688.0,332.8 690.0,332.4 692.0,332.2 694.0,332.0 696.0,331.8 698.0,331.9 700.0,332.1 702.0,332.3 704.0,332.6 706.0,332.8 708.0,332.8 710.0,332.6 712.0,332.3 714.0,331.9 716.0,331.8 718.0,332.3 720.0,333.4 722.0,335.0 724.0,336.8 726.0,338.6 728.0,340.4 730.0,342.1 732.0,343.7 734.0,345.2" fill="none" stroke="#00e000" stroke-width="1" stroke-linejoin="round" />
<polyline points="64.0,272.4 66.0,271.0 68.0,269.5 70.0,268.2 72.0,267.0 74.0,266.0 76.0,265.2 78.0,264.5 80.0,263.9 82.0,263.6 84.0,263.2 86.0,263.0 88.0,262.7 90.0,262.5 92.0,262.3 94.0,262.4 96.0,262.6 98.0,262.9 100.0,263.4 102.0,263.7 104.0,263.9 106.0,264.0 108.0,264.0 110.0,263.8 112.0,263.5 114.0,263.5 116.0,263.6 118.0,264.1 120.0,264.8 122.0,265.7 124.0,266.5 126.0,267.2 128.0,267.8 130.0,268.3 132.0,268.8 134.0,269.3 136.0,270.0 138.0,270.8 140.0,271.7 142.0,272.7 144.0,273.7 146.0,274.5 148.0,275.3 150.0,276.0 152.0,276.5 154.0,276.8 156.0,277.0 158.0,276.9 160.0,276.6 162.0,276.2 164.0,275.7 166.0,275.0 168.0,274.1 170.0,273.1 172.0,271.9 174.0,270.5 176.0,268.9 178.0,267.0 180.0,265.1 182.0,263.2 184.0,261.4 186.0,260.0 188.0,259.0 190.0,258.6 192.0,258.4 194.0,258.6 196.0,258.9 198.0,259.3 200.0,259.7 202.0,260.4 204.0,261.4 206.0,262.7 208.0,264.2 210.0,265.7 212.0,267.2 214.0,268.5 216.0,269.4 218.0,270.0 220.0,270.0 222.0,269.8 224.0,269.2 226.0,268.6 228.0,267.9 230.0,266.2 232.0,263.6 234.0,260.3 236.0,256.2 238.0,251.6 240.0,246.7 242.0,241.7 244.0,236.6 246.0,231.8 248.0,227.4 250.0,223.3 252.0,219.3 254.0,215.7 256.0,212.1 258.0,208.5 260.0,205.7 262.0,204.1 264.0,203.0 266.0,202.6 268.0,202.8 270.0,203.4 272.0,204.2 274.0,205.2 276.0,206.1 278.0,206.7 280.0,207.1 282.0,207.1 284.0,206.9 286.0,206.6 288.0,206.3 290.0,206.0 292.0,205.6 294.0,205.3 296.0,205.0 298.0,204.7 300.0,204.4 302.0,204.2 304.0,203.9 306.0,203.7 308.0,203.6 310.0,203.4 312.0,203.1 314.0,202.5 316.0,201.1 318.0,198.9 320.0,196.0 322.0,192.1 324.0,187.8 326.0,183.1 328.0,178.3 330.0,173.3 332.0,168.4 334.0,163.8 336.0,159.4 338.0,154.9 340.0,150.6 342.0,146.5 344.0,142.7 346.0,139.5 348.0,136.9 350.0,135.0 352.0,133.8 354.0,132.9 356.0,132.3 358.0,131.9 360.0,131.8 362.0,131.8 364.0,132.0 366.0,132.3 368.0,132.7 370.0,133.3 372.0,134.1 374.0,135.2 376.0,136.5 378.0,138.1 380.0,139.9 382.0,141.9 384.0,144.0 386.0,146.1 388.0,148.2 390.0,150.0 392.0,151.6 394.0,152.7 396.0,153.4 398.0,153.9 400.0,154.2 402.0,154.3 404.0,154.3 406.0,154.2 408.0,154.0 410.0,153.8 412.0,153.5 414.0,153.1 416.0,152.6 418.0,152.1 420.0,151.6 422.0,151.2 424.0,150.9 426.0,150.7 428.0,150.6 430.0,150.6 432.0,150.7 434.0,150.8 436.0,150.9 438.0,151.0 440.0,151.2 442.0,151.6 444.0,152.1 446.0,152.8 448.0,153.6 450.0,154.4 452.0,155.2 454.0,156.0 456.0,156.8 458.0,157.3 460.0,157.3 462.0,157.0 464.0,156.7 466.0,156.3 468.0,156.0 470.0,155.7 472.0,155.6 474.0,155.6 476.0,155.8 478.0,156.4 480.0,157.2 482.0,158.3 484.0,159.8 486.0,162.2 488.0,165.5 490.0,169.5 492.0,174.0 494.0,178.6 496.0,183.5 498.0,188.6 500.0,193.8 502.0,198.7 504.0,203.2 506.0,207.3 508.0,211.3 510.0,214.8 512.0,218.1 514.0,221.1 516.0,223.7 518.0,225.9 520.0,228.2 522.0,230.6 524.0,233.1 526.0,235.3 528.0,236.9 530.0,238.2 532.0,239.6 534.0,241.2 536.0,243.1 538.0,245.2 540.0,247.4 542.0,249.7 544.0,251.9 546.0,253.9 548.0,255.5 550.0,256.4 552.0,257.1 554.0,257.4 556.0,257.5 558.0,257.8 560.0,258.1 562.0,258.2 564.0,258.1 566.0,257.6 568.0,256.9 570.0,256.1 572.0,255.3 574.0,254.9 576.0,255.5 578.0,257.8 580.0,260.7 582.0,264.1 584.0,267.7 586.0,271.4 588.0,275.5 590.0,279.7 592.0,283.9 594.0,288.0 596.0,292.2 598.0,296.3 600.0,300.3 602.0,304.2 604.0,307.9 606.0,310.9 608.0,311.8 610.0,312.0 612.0,311.8 614.0,311.5 616.0,311.0 618.0,310.7 620.0,310.6 622.0,311.0 624.0,311.8 626.0,313.0 628.0,314.5 630.0,316.2 632.0,318.0 634.0,319.9 636.0,321.7 638.0,323.7 640.0,325.7 642.0,327.6 644.0,329.4 646.0,331.2 648.0,332.8 650.0,334.0 652.0,334.6 654.0,334.9 656.0,335.0 658.0,335.2 660.0,335.6 662.0,335.9 664.0,336.2 666.0,336.4 668.0,336.7 670.0,336.7 672.0,336.5 674.0,336.0 676.0,335.2 678.0,334.3 680.0,333.5 682.0,333.0 684.0,332.6 686.0,332.5 688.0,332.4 690.0,332.0 692.0,331.5 694.0,330.9 696.0,330.2 698.0,329.4 700.0,329.0 702.0,328.8 704.0,329.0 706.0,329.6 708.0,330.4 710.0,331.3 712.0,332.3 714.0,333.2 716.0,334.4 718.0,336.2 720.0,338.5 722.0,341.0 724.0,343.3 726.0,345.5 728.0,347.5 730.0,349.4 732.0,351.1 734.0,352.9" fill="none" stroke="#ff00ff" stroke-width="1" stroke-linejoin="round" />
<polyline points="64.0,267.5 66.0,265.5 68.0,264.1 70.0,263.0 72.0,262.2 74.0,261.7 76.0,261.5 78.0,261.5 80.0,261.8 82.0,262.3 84.0,262.8 86.0,263.3 88.0,263.5 90.0,263.4 92.0,263.5 94.0,263.5 96.0,263.6 98.0,263.6 100.0,263.8 102.0,263.9 104.0,264.0 106.0,264.0 108.0,264.1 110.0,264.0 112.0,263.8 114.0,263.8 116.0,264.2 118.0,264.8 120.0,266.0 122.0,267.2 124.0,268.6 126.0,270.1 128.0,271.5 130.0,272.6 132.0,273.4 134.0,273.9 136.0,274.1 138.0,274.1 140.0,274.3 142.0,274.5 144.0,275.0 146.0,275.8 148.0,276.9 150.0,277.9 152.0,278.8 154.0,279.3 156.0,279.2 158.0,278.6 160.0,277.5 162.0,276.0 164.0,274.0 166.0,271.7 168.0,269.2 170.0,266.6 172.0,264.3 174.0,262.1 176.0,260.2 178.0,258.6 180.0,257.1 182.0,256.1 184.0,255.4 186.0,255.1 188.0,255.5 190.0,256.4 192.0,257.9 194.0,259.6 196.0,261.2 198.0,262.8 200.0,264.4 202.0,266.0 204.0,267.6 206.0,269.1 208.0,270.4 210.0,271.4 212.0,272.1 214.0,272.5 216.0,272.7 218.0,272.3 220.0,271.3 222.0,269.7 224.0,267.8 226.0,265.9 228.0,262.8 230.0,257.9 232.0,252.5 234.0,246.7 236.0,240.4 238.0,233.6 240.0,226.9 242.0,220.0 244.0,213.0 246.0,207.8 248.0,204.4 250.0,202.2 252.0,201.1 254.0,200.8 256.0,200.9 258.0,201.3 260.0,202.0 262.0,202.7 264.0,203.5 266.0,204.2 268.0,205.1 270.0,205.9 272.0,206.9 274.0,208.1 276.0,209.1 278.0,209.7 280.0,209.9 282.0,209.5 284.0,208.5 286.0,207.1 288.0,205.4 290.0,203.7 292.0,202.1 294.0,201.0 296.0,200.5 298.0,200.5 300.0,201.1 302.0,202.1 304.0,203.3 306.0,204.5 308.0,205.6 310.0,206.3 312.0,206.0 314.0,204.8 316.0,201.6 318.0,196.6 320.0,190.1 322.0,182.0 324.0,173.0 326.0,163.7 328.0,154.9 330.0,147.0 332.0,141.0 334.0,137.1 336.0,135.1 338.0,134.9 340.0,135.4 342.0,136.2 344.0,137.0 346.0,137.3 348.0,136.9 350.0,135.7 352.0,133.8 354.0,131.6 356.0,129.4 358.0,127.5 360.0,126.5 362.0,126.4 364.0,127.3 366.0,129.4 368.0,132.2 370.0,135.4 372.0,138.9 374.0,142.5 376.0,145.8 378.0,148.5 380.0,150.5 382.0,151.8 384.0,152.8 386.0,153.6 388.0,154.2 390.0,154.6 392.0,154.9 394.0,155.0 396.0,155.1 398.0,155.1 400.0,154.9 402.0,154.6 404.0,154.2 406.0,153.7 408.0,153.2 410.0,152.7 412.0,152.1 414.0,151.5 416.0,150.7 418.0,150.1 420.0,149.6 422.0,149.2 424.0,149.1 426.0,149.2 428.0,149.4 430.0,150.0 432.0,150.8 434.0,151.6 436.0,152.3 438.0,152.7 440.0,153.2 442.0,153.7 444.0,154.2 446.0,154.8 448.0,155.4 450.0,156.2 452.0,157.2 454.0,158.4 456.0,159.6 458.0,160.3 460.0,160.1 462.0,159.1 464.0,157.8 466.0,156.3 468.0,154.6 470.0,153.0 472.0,151.6 474.0,151.0 476.0,151.6 478.0,153.6 480.0,156.4 482.0,160.1 484.0,164.6 486.0,170.5 488.0,177.6 490.0,185.0 492.0,192.1 494.0,198.9 496.0,205.1 498.0,211.0 500.0,216.5 502.0,220.3 504.0,222.5 506.0,223.5 508.0,224.2 510.0,225.0 512.0,225.8 514.0,226.3 516.0,227.1 518.0,228.8 520.0,231.8 522.0,235.6 524.0,239.7 526.0,243.3 528.0,246.2 530.0,248.7 532.0,250.3 534.0,251.5 536.0,251.7 538.0,251.8 540.0,252.1 542.0,252.9 544.0,254.5 546.0,256.4 548.0,258.6 550.0,260.4 552.0,261.9 554.0,262.7 556.0,262.7 558.0,261.9 560.0,260.6 562.0,259.0 564.0,256.9 566.0,254.5 568.0,252.0 570.0,250.0 572.0,248.8 574.0,248.8 576.0,250.7 578.0,256.5 580.0,263.8 582.0,272.2 584.0,281.4 586.0,290.3 588.0,298.6 590.0,306.3 592.0,312.3 594.0,314.1 596.0,314.3 598.0,313.6 600.0,312.3 602.0,311.3 604.0,310.5 606.0,310.0 608.0,309.7 610.0,309.4 612.0,309.5 614.0,309.9 616.0,310.5 618.0,310.8 620.0,311.3 622.0,312.2 624.0,313.7 626.0,315.8 628.0,318.1 630.0,320.8 632.0,323.9 634.0,327.3 636.0,330.5 638.0,333.4 640.0,335.4 642.0,337.0 644.0,338.1 646.0,338.9 648.0,339.0 650.0,338.3 652.0,337.0 654.0,335.3 656.0,333.7 658.0,332.7 660.0,332.4 662.0,332.7 664.0,333.5 666.0,334.9 668.0,336.8 670.0,338.5 672.0,339.6 674.0,339.7 676.0,338.6 678.0,336.5 680.0,333.9 682.0,330.9 684.0,328.1 686.0,326.1 688.0,325.0 690.0,324.8 692.0,325.5 694.0,326.7 696.0,328.2 698.0,329.8 700.0,331.3 702.0,332.4 704.0,333.3 706.0,333.9 708.0,334.3 710.0,334.6 712.0,334.9 714.0,335.1 716.0,336.0 718.0,338.4 720.0,342.0 722.0,346.3 724.0,350.5 726.0,354.4 728.0,358.1 730.0,361.4 732.0,363.9 734.0,364.9" fill="none" stroke="#ffff00" stroke-width="1" stroke-linejoin="round" />
<polyline points="64.0,261.2 66.0,261.1 68.0,260.5 70.0,259.9 72.0,259.8 74.0,260.6 76.0,261.5 78.0,262.4 80.0,263.4 82.0,264.4 84.0,264.8 86.0,264.7 88.0,263.9 90.0,263.0 92.0,262.3 94.0,262.2 96.0,262.8 98.0,264.0 100.0,264.9 102.0,265.5 104.0,265.4 106.0,264.8 108.0,263.7 110.0,262.7 112.0,262.0 114.0,262.2 116.0,263.8 118.0,266.4 120.0,269.6 122.0,272.3 124.0,274.1 126.0,275.0 128.0,274.8 130.0,274.3 132.0,273.6 134.0,273.1 136.0,273.2 138.0,273.8 140.0,274.6 142.0,275.5 144.0,276.5 146.0,277.8 148.0,279.5 150.0,281.0 152.0,281.8 154.0,281.6 156.0,280.0 158.0,277.3 160.0,273.7 162.0,270.3 164.0,267.5 166.0,265.1 168.0,263.2 170.0,261.4 172.0,259.8 174.0,258.1 176.0,256.3 178.0,254.7 180.0,253.6 182.0,253.1 184.0,253.4 186.0,254.3 188.0,256.4 190.0,259.4 192.0,262.4 194.0,265.2 196.0,267.0 198.0,267.7 200.0,267.4 202.0,267.6 204.0,268.8 206.0,271.1 208.0,273.6 210.0,275.5 212.0,276.1 214.0,275.2 216.0,273.1 218.0,270.3 220.0,267.1 222.0,264.1 224.0,261.5 226.0,260.1 228.0,258.5 230.0,252.9 232.0,243.3 234.0,231.2 236.0,220.9 238.0,213.6 240.0,207.1 242.0,202.6 244.0,199.6 246.0,198.2 248.0,198.2 250.0,199.3 252.0,201.1 254.0,202.6 256.0,203.4 258.0,203.6 260.0,203.5 262.0,203.7 264.0,204.5 266.0,205.8 268.0,207.5 270.0,209.2 272.0,210.8 274.0,211.8 276.0,211.8 278.0,210.9 280.0,208.9 282.0,206.5 284.0,203.7 286.0,201.4 288.0,199.7 290.0,198.9 292.0,198.8 294.0,199.5 296.0,200.8 298.0,202.5 300.0,204.4 302.0,206.2 304.0,207.4 306.0,208.0 308.0,208.0 310.0,207.0 312.0,204.2 314.0,199.0 316.0,190.5 318.0,179.9 320.0,167.0 322.0,154.4 324.0,144.0 326.0,136.4 328.0,132.4 330.0,130.7 332.0,131.6 334.0,134.0 336.0,136.9 338.0,139.0 340.0,140.1 342.0,139.7 344.0,138.0 346.0,135.6 348.0,132.9 350.0,130.0 352.0,127.1 354.0,124.6 356.0,123.1 358.0,123.2 360.0,124.9 362.0,128.5 364.0,133.2 366.0,138.6 368.0,143.1 370.0,146.5 372.0,148.9 374.0,150.7 376.0,152.3 378.0,153.4 380.0,154.1 382.0,154.3 384.0,154.4 386.0,154.7 388.0,155.1 390.0,155.4 392.0,155.5 394.0,155.5 396.0,155.2 398.0,154.7 400.0,153.9 402.0,153.3 404.0,152.7 406.0,152.3 408.0,151.8 410.0,151.4 412.0,150.8 414.0,149.9 416.0,148.7 418.0,147.8 420.0,147.8 422.0,148.5 424.0,149.5 426.0,150.5 428.0,151.5 430.0,152.5 432.0,153.3 434.0,153.8 436.0,153.8 438.0,153.5 440.0,153.7 442.0,154.3 444.0,155.5 446.0,156.7 448.0,157.9 450.0,159.1 452.0,160.3 454.0,161.5 456.0,162.7 458.0,162.2 460.0,159.4 462.0,155.0 464.0,151.0 466.0,148.7 468.0,148.2 470.0,148.7 472.0,150.3 474.0,153.0 476.0,156.7 478.0,161.3 480.0,166.3 482.0,172.0 484.0,178.4 486.0,187.4 488.0,197.8 490.0,207.7 492.0,214.4 494.0,217.8 496.0,219.4 498.0,222.0 500.0,224.8 502.0,226.8 504.0,226.8 506.0,225.5 508.0,224.7 510.0,224.5 512.0,225.5 514.0,227.5 516.0,230.9 518.0,235.6 520.0,242.4 522.0,248.6 524.0,253.8 526.0,254.9 528.0,253.5 530.0,250.9 532.0,249.0 534.0,248.9 536.0,250.1 538.0,252.7 540.0,255.6 542.0,258.6 544.0,261.0 546.0,262.8 548.0,264.0 550.0,264.4 552.0,264.4 554.0,263.3 556.0,260.9 558.0,257.9 560.0,255.1 562.0,252.6 564.0,250.3 566.0,247.9 568.0,245.9 570.0,245.4 572.0,246.5 574.0,250.2 576.0,258.8 578.0,274.8 580.0,291.9 582.0,306.6 584.0,312.4 586.0,315.4 588.0,316.5 590.0,316.5 592.0,315.6 594.0,314.0 596.0,311.8 598.0,309.1 600.0,307.3 602.0,307.2 604.0,308.6 606.0,310.6 608.0,311.4 610.0,311.2 612.0,310.6 614.0,310.1 616.0,310.2 618.0,310.8 620.0,312.3 622.0,315.5 624.0,319.6 626.0,323.5 628.0,326.7 630.0,329.4 632.0,332.2 634.0,335.3 636.0,338.1 638.0,340.3 640.0,340.9 642.0,340.4 644.0,339.1 646.0,338.1 648.0,337.0 650.0,335.1 652.0,332.6 654.0,330.4 656.0,328.8 658.0,329.4 660.0,332.0 662.0,335.7 664.0,339.4 666.0,342.1 668.0,343.9 670.0,343.5 672.0,341.0 674.0,336.2 676.0,331.4 678.0,326.9 680.0,323.5 682.0,321.6 684.0,321.6 686.0,323.2 688.0,325.9 690.0,328.3 692.0,330.4 694.0,331.8 696.0,332.7 698.0,333.3 700.0,333.8 702.0,334.3 704.0,334.7 706.0,335.1 708.0,335.3 710.0,335.4 712.0,335.3 714.0,335.5 716.0,338.1 718.0,344.6 720.0,354.3 722.0,363.0 724.0,367.5 726.0,368.2 728.0,366.3 730.0,364.3 732.0,362.6 734.0,361.8" fill="none" stroke="#ffffff" stroke-width="1" stroke-linejoin="round" />
<polyline points="63.8,243.0 67.5,240.8 71.2,240.8 75.0,246.2 79.5,253.2 85.0,253.2 90.0,252.5 95.0,253.0 100.0,255.0 106.2,255.5 111.2,257.0 115.0,257.5 122.5,255.0 130.0,255.0 135.0,256.2 142.5,257.5 148.8,258.0 153.8,261.2 158.0,263.8 162.5,263.0 167.5,259.5 172.5,253.8 177.5,247.5 182.5,243.8 187.5,242.0 192.5,242.5 198.8,246.2 203.8,246.5 210.0,245.0 216.2,246.2 221.2,247.0 225.5,247.0 228.0,243.0 230.0,238.0 233.8,220.5 237.5,203.0 241.2,188.0 245.0,178.0 250.0,170.5 255.0,168.0 260.0,168.0 265.0,170.5 270.0,178.0 272.5,185.5 275.0,193.0 280.0,193.5 287.5,193.0 295.0,193.5 300.0,193.8 301.2,193.8 310.0,193.8 312.5,185.5 315.0,168.0 318.8,148.0 322.5,133.0 327.5,120.5 332.5,110.5 337.5,103.0 342.5,96.8 347.5,93.0 352.5,91.8 356.2,95.5 360.0,108.0 363.8,113.0 372.5,113.8 380.0,111.8 387.5,111.0 392.5,114.2 397.5,121.8 402.5,131.8 407.5,141.8 411.2,143.0 417.5,140.5 425.0,140.5 432.5,141.8 440.0,141.8 447.5,140.5 455.0,140.5 460.0,141.0 461.2,143.8 466.2,145.5 472.5,144.5 478.8,143.8 482.5,140.0 486.2,130.0 490.0,128.0 495.0,126.8 500.0,126.0 503.8,128.0 507.5,133.0 510.0,137.5 513.8,146.2 516.2,155.0 520.0,167.5 523.8,180.0 526.2,190.0 530.0,201.2 535.0,206.2 540.0,211.2 545.0,216.2 548.8,218.8 552.5,226.2 556.2,232.5 560.0,240.0 563.8,237.5 568.8,237.5 572.5,236.2 576.2,227.5 580.0,221.2 585.0,217.5 590.0,216.2 595.0,216.2 600.0,220.0 603.8,226.2 607.5,237.5 611.2,250.0 613.8,262.5 616.2,275.0 618.8,288.8 621.2,296.2 626.2,297.0 632.5,295.0 638.8,293.8 643.8,297.5 648.8,302.5 653.8,305.0 658.8,307.5 662.5,313.8 666.2,318.0 671.2,318.8 677.5,316.2 683.8,313.8 690.0,312.5 697.5,313.8 705.0,315.5 710.0,316.5 713.8,316.2 716.2,311.2 718.8,307.0 722.5,305.8 726.2,308.8 730.0,312.5 735.0,317.5" fill="none" stroke="#0000ff" stroke-width="2.2" stroke-linejoin="round" />
<polyline points="63.8,316.2 67.5,310.0 71.2,302.5 75.0,290.0 78.8,280.0 82.5,277.5 87.5,276.8 92.5,275.0 97.5,272.5 102.5,270.5 107.5,270.0 112.5,270.0 116.2,273.0 121.2,277.5 126.2,278.8 132.5,280.0 140.0,282.5 145.0,285.0 148.8,288.0 155.0,287.5 160.0,287.0 166.2,288.0 172.5,289.5 180.0,289.5 186.2,288.8 191.2,286.2 196.2,281.2 201.2,276.2 205.0,279.5 210.0,283.2 216.2,283.8 222.5,283.8 226.2,283.8 228.8,290.0 232.5,298.8 237.5,306.2 243.8,308.0 248.8,305.0 253.8,296.2 257.5,285.0 261.2,272.5 265.0,260.0 268.8,250.0 272.0,237.5 274.5,223.8 277.5,218.8 282.5,217.0 290.0,216.8 297.5,216.8 301.2,217.5 310.0,217.5 313.8,223.0 317.5,231.8 321.2,239.2 325.0,243.0 330.0,243.5 335.0,240.5 340.0,235.5 343.8,229.2 347.5,220.5 351.2,208.0 353.8,193.0 356.2,178.0 358.8,164.2 361.2,156.8 365.0,154.2 370.0,156.8 375.0,163.0 380.0,166.8 385.0,170.0 390.0,172.5 396.2,173.5 401.2,170.0 405.0,165.5 408.8,162.5 415.0,163.0 422.5,163.0 430.0,163.0 436.2,161.8 442.5,162.5 447.5,166.0 452.5,169.2 457.5,171.8 461.2,170.0 466.2,169.5 472.5,171.2 476.2,175.0 480.0,182.5 483.8,195.0 486.2,207.5 490.0,220.0 493.8,230.0 497.5,241.2 501.2,250.0 506.2,256.2 511.2,262.5 516.2,268.8 520.0,272.0 525.0,271.2 528.8,267.5 531.2,267.0 535.0,270.0 540.0,273.8 545.0,277.5 550.0,278.8 555.0,276.2 560.0,272.5 565.0,271.2 570.0,270.5 573.0,273.8 575.5,290.0 577.5,297.5 581.2,310.0 585.0,322.5 588.8,335.0 592.5,342.5 596.2,348.8 601.2,353.0 606.2,355.5 611.2,351.2 615.0,342.5 618.8,332.5 621.2,330.5 625.0,335.0 630.0,340.0 633.8,346.2 638.8,350.0 645.0,352.5 652.5,353.0 660.0,354.5 667.5,353.8 675.0,355.0 682.5,354.5 690.0,352.5 697.5,352.0 705.0,351.2 710.0,347.5 712.5,346.2 715.0,352.5 717.5,362.5 721.2,371.2 726.2,375.0 731.2,378.0 735.0,380.0" fill="none" stroke="#ff8000" stroke-width="2.2" stroke-linejoin="round" />
<line x1="576" y1="337" x2="726" y2="382.5" stroke="#ff0000" stroke-width="1"/>
</g>
<text x="294" y="113" fill="#ffffff" font-size="14" font-family='"Liberation Mono","Noto Sans CJK SC",monospace' text-anchor="start" font-weight="normal" textLength="42" lengthAdjust="spacingAndGlyphs" >1.4281</text>
<path d="M338,108.5 H349 M346,105.5 L349,108.5 L346,111.5" stroke="#a0a0a0" fill="none"/>
<text x="662" y="385" fill="#ffffff" font-size="14" font-family='"Liberation Mono","Noto Sans CJK SC",monospace' text-anchor="start" font-weight="normal" textLength="42" lengthAdjust="spacingAndGlyphs" >1.3847</text>
<path d="M706,380.5 H717 M714,377.5 L717,380.5 L714,383.5" stroke="#a0a0a0" fill="none"/>
<rect x="749.5" y="378.5" width="39" height="15" fill="#0064ff" stroke="#ffffff"/>
<text x="752" y="390.5" fill="#ffffff" font-size="12" font-family='"Liberation Mono","Noto Sans CJK SC",monospace' text-anchor="start" font-weight="normal" textLength="36" lengthAdjust="spacingAndGlyphs" >1.3829</text>
<g shape-rendering="auto">
<line x1="65.50" y1="447.5" x2="65.50" y2="449.1" stroke="#00ffff" stroke-width="1.5"/>
<line x1="68.00" y1="447.5" x2="68.00" y2="450.8" stroke="#00ffff" stroke-width="1.5"/>
<line x1="70.50" y1="447.5" x2="70.50" y2="452.4" stroke="#00ffff" stroke-width="1.5"/>
<line x1="73.00" y1="447.5" x2="73.00" y2="453.8" stroke="#00ffff" stroke-width="1.5"/>
<line x1="75.50" y1="447.5" x2="75.50" y2="454.1" stroke="#00ffff" stroke-width="1.5"/>
<line x1="78.00" y1="447.5" x2="78.00" y2="454.4" stroke="#00ffff" stroke-width="1.5"/>
<line x1="80.50" y1="447.5" x2="80.50" y2="454.8" stroke="#00ffff" stroke-width="1.5"/>
<line x1="83.00" y1="447.5" x2="83.00" y2="454.9" stroke="#00ffff" stroke-width="1.5"/>
<line x1="85.50" y1="447.5" x2="85.50" y2="454.6" stroke="#00ffff" stroke-width="1.5"/>
<line x1="88.00" y1="447.5" x2="88.00" y2="454.3" stroke="#00ffff" stroke-width="1.5"/>
<line x1="90.50" y1="447.5" x2="90.50" y2="454.0" stroke="#00ffff" stroke-width="1.5"/>
<line x1="93.00" y1="447.5" x2="93.00" y2="453.5" stroke="#00ffff" stroke-width="1.5"/>
<line x1="95.50" y1="447.5" x2="95.50" y2="452.5" stroke="#00ffff" stroke-width="1.5"/>
<line x1="98.00" y1="447.5" x2="98.00" y2="451.4" stroke="#00ffff" stroke-width="1.5"/>
<line x1="100.50" y1="447.5" x2="100.50" y2="450.3" stroke="#00ffff" stroke-width="1.5"/>
<line x1="103.00" y1="447.5" x2="103.00" y2="448.6" stroke="#00ffff" stroke-width="1.5"/>
<line x1="108.00" y1="447.5" x2="108.00" y2="448.1" stroke="#00ffff" stroke-width="1.5"/>
<line x1="110.50" y1="447.5" x2="110.50" y2="448.2" stroke="#00ffff" stroke-width="1.5"/>
<line x1="113.00" y1="447.5" x2="113.00" y2="448.2" stroke="#00ffff" stroke-width="1.5"/>
<line x1="115.50" y1="447.5" x2="115.50" y2="450.8" stroke="#00ffff" stroke-width="1.5"/>
<line x1="118.00" y1="447.5" x2="118.00" y2="453.9" stroke="#00ffff" stroke-width="1.5"/>
<line x1="120.50" y1="447.5" x2="120.50" y2="454.5" stroke="#00ffff" stroke-width="1.5"/>
<line x1="123.00" y1="447.5" x2="123.00" y2="454.8" stroke="#00ffff" stroke-width="1.5"/>
<line x1="125.50" y1="447.5" x2="125.50" y2="453.5" stroke="#00ffff" stroke-width="1.5"/>
<line x1="128.00" y1="447.5" x2="128.00" y2="452.2" stroke="#00ffff" stroke-width="1.5"/>
<line x1="130.50" y1="447.5" x2="130.50" y2="450.7" stroke="#00ffff" stroke-width="1.5"/>
<line x1="133.00" y1="447.5" x2="133.00" y2="449.2" stroke="#00ffff" stroke-width="1.5"/>
<line x1="155.50" y1="447.5" x2="155.50" y2="445.4" stroke="#ff4848" stroke-width="1.5"/>
<line x1="158.00" y1="447.5" x2="158.00" y2="441.1" stroke="#ff4848" stroke-width="1.5"/>
<line x1="160.50" y1="447.5" x2="160.50" y2="437.4" stroke="#ff4848" stroke-width="1.5"/>
<line x1="163.00" y1="447.5" x2="163.00" y2="436.8" stroke="#ff4848" stroke-width="1.5"/>
<line x1="165.50" y1="447.5" x2="165.50" y2="437.9" stroke="#ff4848" stroke-width="1.5"/>
<line x1="168.00" y1="447.5" x2="168.00" y2="439.8" stroke="#ff4848" stroke-width="1.5"/>
<line x1="170.50" y1="447.5" x2="170.50" y2="441.0" stroke="#ff4848" stroke-width="1.5"/>
<line x1="173.00" y1="447.5" x2="173.00" y2="439.8" stroke="#ff4848" stroke-width="1.5"/>
<line x1="175.50" y1="447.5" x2="175.50" y2="439.0" stroke="#ff4848" stroke-width="1.5"/>
<line x1="178.00" y1="447.5" x2="178.00" y2="440.2" stroke="#ff4848" stroke-width="1.5"/>
<line x1="180.50" y1="447.5" x2="180.50" y2="441.9" stroke="#ff4848" stroke-width="1.5"/>
<line x1="183.00" y1="447.5" x2="183.00" y2="445.2" stroke="#ff4848" stroke-width="1.5"/>
<line x1="188.00" y1="447.5" x2="188.00" y2="451.2" stroke="#00ffff" stroke-width="1.5"/>
<line x1="190.50" y1="447.5" x2="190.50" y2="454.8" stroke="#00ffff" stroke-width="1.5"/>
<line x1="193.00" y1="447.5" x2="193.00" y2="457.2" stroke="#00ffff" stroke-width="1.5"/>
<line x1="195.50" y1="447.5" x2="195.50" y2="456.0" stroke="#00ffff" stroke-width="1.5"/>
<line x1="198.00" y1="447.5" x2="198.00" y2="454.8" stroke="#00ffff" stroke-width="1.5"/>
<line x1="200.50" y1="447.5" x2="200.50" y2="453.8" stroke="#00ffff" stroke-width="1.5"/>
<line x1="203.00" y1="447.5" x2="203.00" y2="452.8" stroke="#00ffff" stroke-width="1.5"/>
<line x1="205.50" y1="447.5" x2="205.50" y2="452.5" stroke="#00ffff" stroke-width="1.5"/>
<line x1="208.00" y1="447.5" x2="208.00" y2="452.5" stroke="#00ffff" stroke-width="1.5"/>
<line x1="210.50" y1="447.5" x2="210.50" y2="452.1" stroke="#00ffff" stroke-width="1.5"/>
<line x1="213.00" y1="447.5" x2="213.00" y2="450.2" stroke="#00ffff" stroke-width="1.5"/>
<line x1="215.50" y1="447.5" x2="215.50" y2="448.3" stroke="#00ffff" stroke-width="1.5"/>
<line x1="218.00" y1="447.5" x2="218.00" y2="442.0" stroke="#ff4848" stroke-width="1.5"/>
<line x1="220.50" y1="447.5" x2="220.50" y2="439.5" stroke="#ff4848" stroke-width="1.5"/>
<line x1="223.00" y1="447.5" x2="223.00" y2="439.2" stroke="#ff4848" stroke-width="1.5"/>
<line x1="225.50" y1="447.5" x2="225.50" y2="439.8" stroke="#ff4848" stroke-width="1.5"/>
<line x1="228.00" y1="447.5" x2="228.00" y2="433.9" stroke="#ff4848" stroke-width="1.5"/>
<line x1="230.50" y1="447.5" x2="230.50" y2="425.1" stroke="#ff4848" stroke-width="1.5"/>
<line x1="233.00" y1="447.5" x2="233.00" y2="421.9" stroke="#ff4848" stroke-width="1.5"/>
<line x1="235.50" y1="447.5" x2="235.50" y2="421.4" stroke="#ff4848" stroke-width="1.5"/>
<line x1="238.00" y1="447.5" x2="238.00" y2="422.2" stroke="#ff4848" stroke-width="1.5"/>
<line x1="240.50" y1="447.5" x2="240.50" y2="424.8" stroke="#ff4848" stroke-width="1.5"/>
<line x1="243.00" y1="447.5" x2="243.00" y2="428.8" stroke="#ff4848" stroke-width="1.5"/>
<line x1="245.50" y1="447.5" x2="245.50" y2="435.5" stroke="#ff4848" stroke-width="1.5"/>
<line x1="248.00" y1="447.5" x2="248.00" y2="442.8" stroke="#ff4848" stroke-width="1.5"/>
<line x1="253.00" y1="447.5" x2="253.00" y2="451.3" stroke="#00ffff" stroke-width="1.5"/>
<line x1="255.50" y1="447.5" x2="255.50" y2="453.9" stroke="#00ffff" stroke-width="1.5"/>
<line x1="258.00" y1="447.5" x2="258.00" y2="455.9" stroke="#00ffff" stroke-width="1.5"/>
<line x1="260.50" y1="447.5" x2="260.50" y2="457.8" stroke="#00ffff" stroke-width="1.5"/>
<line x1="263.00" y1="447.5" x2="263.00" y2="459.5" stroke="#00ffff" stroke-width="1.5"/>
<line x1="265.50" y1="447.5" x2="265.50" y2="461.2" stroke="#00ffff" stroke-width="1.5"/>
<line x1="268.00" y1="447.5" x2="268.00" y2="462.1" stroke="#00ffff" stroke-width="1.5"/>
<line x1="270.50" y1="447.5" x2="270.50" y2="460.2" stroke="#00ffff" stroke-width="1.5"/>
<line x1="273.00" y1="447.5" x2="273.00" y2="458.4" stroke="#00ffff" stroke-width="1.5"/>
<line x1="275.50" y1="447.5" x2="275.50" y2="456.4" stroke="#00ffff" stroke-width="1.5"/>
<line x1="278.00" y1="447.5" x2="278.00" y2="454.4" stroke="#00ffff" stroke-width="1.5"/>
<line x1="280.50" y1="447.5" x2="280.50" y2="452.0" stroke="#00ffff" stroke-width="1.5"/>
<line x1="283.00" y1="447.5" x2="283.00" y2="449.5" stroke="#00ffff" stroke-width="1.5"/>
<line x1="295.50" y1="447.5" x2="295.50" y2="450.1" stroke="#00ffff" stroke-width="1.5"/>
<line x1="298.00" y1="447.5" x2="298.00" y2="452.7" stroke="#00ffff" stroke-width="1.5"/>
<line x1="300.50" y1="447.5" x2="300.50" y2="453.5" stroke="#00ffff" stroke-width="1.5"/>
<line x1="303.00" y1="447.5" x2="303.00" y2="453.3" stroke="#00ffff" stroke-width="1.5"/>
<line x1="305.50" y1="447.5" x2="305.50" y2="452.7" stroke="#00ffff" stroke-width="1.5"/>
<line x1="308.00" y1="447.5" x2="308.00" y2="450.8" stroke="#00ffff" stroke-width="1.5"/>
<line x1="310.50" y1="447.5" x2="310.50" y2="448.4" stroke="#00ffff" stroke-width="1.5"/>
<line x1="313.00" y1="447.5" x2="313.00" y2="444.6" stroke="#ff4848" stroke-width="1.5"/>
<line x1="315.50" y1="447.5" x2="315.50" y2="435.5" stroke="#ff4848" stroke-width="1.5"/>
<line x1="318.00" y1="447.5" x2="318.00" y2="426.7" stroke="#ff4848" stroke-width="1.5"/>
<line x1="320.50" y1="447.5" x2="320.50" y2="419.2" stroke="#ff4848" stroke-width="1.5"/>
<line x1="323.00" y1="447.5" x2="323.00" y2="415.0" stroke="#ff4848" stroke-width="1.5"/>
<line x1="325.50" y1="447.5" x2="325.50" y2="416.4" stroke="#ff4848" stroke-width="1.5"/>
<line x1="328.00" y1="447.5" x2="328.00" y2="422.8" stroke="#ff4848" stroke-width="1.5"/>
<line x1="330.50" y1="447.5" x2="330.50" y2="432.0" stroke="#ff4848" stroke-width="1.5"/>
<line x1="333.00" y1="447.5" x2="333.00" y2="443.8" stroke="#ff4848" stroke-width="1.5"/>
<line x1="335.50" y1="447.5" x2="335.50" y2="449.6" stroke="#00ffff" stroke-width="1.5"/>
<line x1="338.00" y1="447.5" x2="338.00" y2="453.6" stroke="#00ffff" stroke-width="1.5"/>
<line x1="340.50" y1="447.5" x2="340.50" y2="452.8" stroke="#00ffff" stroke-width="1.5"/>
<line x1="343.00" y1="447.5" x2="343.00" y2="451.6" stroke="#00ffff" stroke-width="1.5"/>
<line x1="345.50" y1="447.5" x2="345.50" y2="450.4" stroke="#00ffff" stroke-width="1.5"/>
<line x1="348.00" y1="447.5" x2="348.00" y2="450.2" stroke="#00ffff" stroke-width="1.5"/>
<line x1="350.50" y1="447.5" x2="350.50" y2="450.8" stroke="#00ffff" stroke-width="1.5"/>
<line x1="353.00" y1="447.5" x2="353.00" y2="452.1" stroke="#00ffff" stroke-width="1.5"/>
<line x1="355.50" y1="447.5" x2="355.50" y2="455.1" stroke="#00ffff" stroke-width="1.5"/>
<line x1="358.00" y1="447.5" x2="358.00" y2="458.9" stroke="#00ffff" stroke-width="1.5"/>
<line x1="360.50" y1="447.5" x2="360.50" y2="462.2" stroke="#00ffff" stroke-width="1.5"/>
<line x1="363.00" y1="447.5" x2="363.00" y2="465.3" stroke="#00ffff" stroke-width="1.5"/>
<line x1="365.50" y1="447.5" x2="365.50" y2="466.8" stroke="#00ffff" stroke-width="1.5"/>
<line x1="368.00" y1="447.5" x2="368.00" y2="467.2" stroke="#00ffff" stroke-width="1.5"/>
<line x1="370.50" y1="447.5" x2="370.50" y2="466.0" stroke="#00ffff" stroke-width="1.5"/>
<line x1="373.00" y1="447.5" x2="373.00" y2="464.5" stroke="#00ffff" stroke-width="1.5"/>
<line x1="375.50" y1="447.5" x2="375.50" y2="462.0" stroke="#00ffff" stroke-width="1.5"/>
<line x1="378.00" y1="447.5" x2="378.00" y2="459.5" stroke="#00ffff" stroke-width="1.5"/>
<line x1="380.50" y1="447.5" x2="380.50" y2="457.0" stroke="#00ffff" stroke-width="1.5"/>
<line x1="383.00" y1="447.5" x2="383.00" y2="454.5" stroke="#00ffff" stroke-width="1.5"/>
<line x1="385.50" y1="447.5" x2="385.50" y2="452.0" stroke="#00ffff" stroke-width="1.5"/>
<line x1="388.00" y1="447.5" x2="388.00" y2="449.6" stroke="#00ffff" stroke-width="1.5"/>
<line x1="400.50" y1="447.5" x2="400.50" y2="444.9" stroke="#ff4848" stroke-width="1.5"/>
<line x1="403.00" y1="447.5" x2="403.00" y2="444.2" stroke="#ff4848" stroke-width="1.5"/>
<line x1="405.50" y1="447.5" x2="405.50" y2="443.6" stroke="#ff4848" stroke-width="1.5"/>
<line x1="408.00" y1="447.5" x2="408.00" y2="443.0" stroke="#ff4848" stroke-width="1.5"/>
<line x1="410.50" y1="447.5" x2="410.50" y2="442.2" stroke="#ff4848" stroke-width="1.5"/>
<line x1="413.00" y1="447.5" x2="413.00" y2="440.5" stroke="#ff4848" stroke-width="1.5"/>
<line x1="415.50" y1="447.5" x2="415.50" y2="441.2" stroke="#ff4848" stroke-width="1.5"/>
<line x1="418.00" y1="447.5" x2="418.00" y2="443.2" stroke="#ff4848" stroke-width="1.5"/>
<line x1="420.50" y1="447.5" x2="420.50" y2="446.7" stroke="#ff4848" stroke-width="1.5"/>
<line x1="423.00" y1="447.5" x2="423.00" y2="448.1" stroke="#00ffff" stroke-width="1.5"/>
<line x1="425.50" y1="447.5" x2="425.50" y2="449.0" stroke="#00ffff" stroke-width="1.5"/>
<line x1="428.00" y1="447.5" x2="428.00" y2="449.1" stroke="#00ffff" stroke-width="1.5"/>
<line x1="430.50" y1="447.5" x2="430.50" y2="449.2" stroke="#00ffff" stroke-width="1.5"/>
<line x1="433.00" y1="447.5" x2="433.00" y2="449.3" stroke="#00ffff" stroke-width="1.5"/>
<line x1="435.50" y1="447.5" x2="435.50" y2="449.4" stroke="#00ffff" stroke-width="1.5"/>
<line x1="438.00" y1="447.5" x2="438.00" y2="449.4" stroke="#00ffff" stroke-width="1.5"/>
<line x1="440.50" y1="447.5" x2="440.50" y2="449.5" stroke="#00ffff" stroke-width="1.5"/>
<line x1="443.00" y1="447.5" x2="443.00" y2="449.4" stroke="#00ffff" stroke-width="1.5"/>
<line x1="445.50" y1="447.5" x2="445.50" y2="449.3" stroke="#00ffff" stroke-width="1.5"/>
<line x1="448.00" y1="447.5" x2="448.00" y2="449.2" stroke="#00ffff" stroke-width="1.5"/>
<line x1="450.50" y1="447.5" x2="450.50" y2="449.1" stroke="#00ffff" stroke-width="1.5"/>
<line x1="453.00" y1="447.5" x2="453.00" y2="449.1" stroke="#00ffff" stroke-width="1.5"/>
<line x1="455.50" y1="447.5" x2="455.50" y2="448.8" stroke="#00ffff" stroke-width="1.5"/>
<line x1="460.50" y1="447.5" x2="460.50" y2="444.6" stroke="#ff4848" stroke-width="1.5"/>
<line x1="463.00" y1="447.5" x2="463.00" y2="443.1" stroke="#ff4848" stroke-width="1.5"/>
<line x1="465.50" y1="447.5" x2="465.50" y2="443.1" stroke="#ff4848" stroke-width="1.5"/>
<line x1="468.00" y1="447.5" x2="468.00" y2="439.8" stroke="#ff4848" stroke-width="1.5"/>
<line x1="470.50" y1="447.5" x2="470.50" y2="441.1" stroke="#ff4848" stroke-width="1.5"/>
<line x1="473.00" y1="447.5" x2="473.00" y2="444.7" stroke="#ff4848" stroke-width="1.5"/>
<line x1="475.50" y1="447.5" x2="475.50" y2="449.2" stroke="#00ffff" stroke-width="1.5"/>
<line x1="478.00" y1="447.5" x2="478.00" y2="453.5" stroke="#00ffff" stroke-width="1.5"/>
<line x1="480.50" y1="447.5" x2="480.50" y2="458.5" stroke="#00ffff" stroke-width="1.5"/>
<line x1="483.00" y1="447.5" x2="483.00" y2="464.1" stroke="#00ffff" stroke-width="1.5"/>
<line x1="485.50" y1="447.5" x2="485.50" y2="470.3" stroke="#00ffff" stroke-width="1.5"/>
<line x1="488.00" y1="447.5" x2="488.00" y2="473.3" stroke="#00ffff" stroke-width="1.5"/>
<line x1="490.50" y1="447.5" x2="490.50" y2="469.3" stroke="#00ffff" stroke-width="1.5"/>
<line x1="493.00" y1="447.5" x2="493.00" y2="466.0" stroke="#00ffff" stroke-width="1.5"/>
<line x1="495.50" y1="447.5" x2="495.50" y2="462.7" stroke="#00ffff" stroke-width="1.5"/>
<line x1="498.00" y1="447.5" x2="498.00" y2="458.8" stroke="#00ffff" stroke-width="1.5"/>
<line x1="500.50" y1="447.5" x2="500.50" y2="452.5" stroke="#00ffff" stroke-width="1.5"/>
<line x1="505.50" y1="447.5" x2="505.50" y2="444.5" stroke="#ff4848" stroke-width="1.5"/>
<line x1="508.00" y1="447.5" x2="508.00" y2="442.0" stroke="#ff4848" stroke-width="1.5"/>
<line x1="510.50" y1="447.5" x2="510.50" y2="440.7" stroke="#ff4848" stroke-width="1.5"/>
<line x1="513.00" y1="447.5" x2="513.00" y2="444.0" stroke="#ff4848" stroke-width="1.5"/>
<line x1="515.50" y1="447.5" x2="515.50" y2="448.5" stroke="#00ffff" stroke-width="1.5"/>
<line x1="518.00" y1="447.5" x2="518.00" y2="453.5" stroke="#00ffff" stroke-width="1.5"/>
<line x1="520.50" y1="447.5" x2="520.50" y2="452.1" stroke="#00ffff" stroke-width="1.5"/>
<line x1="523.00" y1="447.5" x2="523.00" y2="448.4" stroke="#00ffff" stroke-width="1.5"/>
<line x1="525.50" y1="447.5" x2="525.50" y2="445.0" stroke="#ff4848" stroke-width="1.5"/>
<line x1="528.00" y1="447.5" x2="528.00" y2="439.5" stroke="#ff4848" stroke-width="1.5"/>
<line x1="530.50" y1="447.5" x2="530.50" y2="437.0" stroke="#ff4848" stroke-width="1.5"/>
<line x1="533.00" y1="447.5" x2="533.00" y2="436.8" stroke="#ff4848" stroke-width="1.5"/>
<line x1="535.50" y1="447.5" x2="535.50" y2="438.2" stroke="#ff4848" stroke-width="1.5"/>
<line x1="538.00" y1="447.5" x2="538.00" y2="441.5" stroke="#ff4848" stroke-width="1.5"/>
<line x1="540.50" y1="447.5" x2="540.50" y2="444.2" stroke="#ff4848" stroke-width="1.5"/>
<line x1="543.00" y1="447.5" x2="543.00" y2="444.6" stroke="#ff4848" stroke-width="1.5"/>
<line x1="545.50" y1="447.5" x2="545.50" y2="443.9" stroke="#ff4848" stroke-width="1.5"/>
<line x1="548.00" y1="447.5" x2="548.00" y2="443.3" stroke="#ff4848" stroke-width="1.5"/>
<line x1="550.50" y1="447.5" x2="550.50" y2="442.7" stroke="#ff4848" stroke-width="1.5"/>
<line x1="553.00" y1="447.5" x2="553.00" y2="439.6" stroke="#ff4848" stroke-width="1.5"/>
<line x1="555.50" y1="447.5" x2="555.50" y2="435.9" stroke="#ff4848" stroke-width="1.5"/>
<line x1="558.00" y1="447.5" x2="558.00" y2="434.2" stroke="#ff4848" stroke-width="1.5"/>
<line x1="560.50" y1="447.5" x2="560.50" y2="432.9" stroke="#ff4848" stroke-width="1.5"/>
<line x1="563.00" y1="447.5" x2="563.00" y2="432.1" stroke="#ff4848" stroke-width="1.5"/>
<line x1="565.50" y1="447.5" x2="565.50" y2="433.5" stroke="#ff4848" stroke-width="1.5"/>
<line x1="568.00" y1="447.5" x2="568.00" y2="438.3" stroke="#ff4848" stroke-width="1.5"/>
<line x1="570.50" y1="447.5" x2="570.50" y2="442.5" stroke="#ff4848" stroke-width="1.5"/>
<line x1="573.00" y1="447.5" x2="573.00" y2="451.8" stroke="#00ffff" stroke-width="1.5"/>
<line x1="575.50" y1="447.5" x2="575.50" y2="463.8" stroke="#00ffff" stroke-width="1.5"/>
<line x1="578.00" y1="447.5" x2="578.00" y2="473.6" stroke="#00ffff" stroke-width="1.5"/>
<line x1="580.50" y1="447.5" x2="580.50" y2="476.7" stroke="#00ffff" stroke-width="1.5"/>
<line x1="583.00" y1="447.5" x2="583.00" y2="471.5" stroke="#00ffff" stroke-width="1.5"/>
<line x1="585.50" y1="447.5" x2="585.50" y2="466.5" stroke="#00ffff" stroke-width="1.5"/>
<line x1="588.00" y1="447.5" x2="588.00" y2="461.5" stroke="#00ffff" stroke-width="1.5"/>
<line x1="590.50" y1="447.5" x2="590.50" y2="455.9" stroke="#00ffff" stroke-width="1.5"/>
<line x1="593.00" y1="447.5" x2="593.00" y2="450.2" stroke="#00ffff" stroke-width="1.5"/>
<line x1="595.50" y1="447.5" x2="595.50" y2="442.0" stroke="#ff4848" stroke-width="1.5"/>
<line x1="598.00" y1="447.5" x2="598.00" y2="437.6" stroke="#ff4848" stroke-width="1.5"/>
<line x1="600.50" y1="447.5" x2="600.50" y2="436.6" stroke="#ff4848" stroke-width="1.5"/>
<line x1="603.00" y1="447.5" x2="603.00" y2="438.2" stroke="#ff4848" stroke-width="1.5"/>
<line x1="605.50" y1="447.5" x2="605.50" y2="437.6" stroke="#ff4848" stroke-width="1.5"/>
<line x1="608.00" y1="447.5" x2="608.00" y2="436.0" stroke="#ff4848" stroke-width="1.5"/>
<line x1="610.50" y1="447.5" x2="610.50" y2="434.8" stroke="#ff4848" stroke-width="1.5"/>
<line x1="613.00" y1="447.5" x2="613.00" y2="434.2" stroke="#ff4848" stroke-width="1.5"/>
<line x1="615.50" y1="447.5" x2="615.50" y2="436.8" stroke="#ff4848" stroke-width="1.5"/>
<line x1="618.00" y1="447.5" x2="618.00" y2="439.2" stroke="#ff4848" stroke-width="1.5"/>
<line x1="620.50" y1="447.5" x2="620.50" y2="443.0" stroke="#ff4848" stroke-width="1.5"/>
<line x1="623.00" y1="447.5" x2="623.00" y2="448.5" stroke="#00ffff" stroke-width="1.5"/>
<line x1="625.50" y1="447.5" x2="625.50" y2="450.2" stroke="#00ffff" stroke-width="1.5"/>
<line x1="628.00" y1="447.5" x2="628.00" y2="451.0" stroke="#00ffff" stroke-width="1.5"/>
<line x1="630.50" y1="447.5" x2="630.50" y2="451.7" stroke="#00ffff" stroke-width="1.5"/>
<line x1="633.00" y1="447.5" x2="633.00" y2="452.3" stroke="#00ffff" stroke-width="1.5"/>
<line x1="635.50" y1="447.5" x2="635.50" y2="451.4" stroke="#00ffff" stroke-width="1.5"/>
<line x1="638.00" y1="447.5" x2="638.00" y2="449.9" stroke="#00ffff" stroke-width="1.5"/>
<line x1="643.00" y1="447.5" x2="643.00" y2="443.6" stroke="#ff4848" stroke-width="1.5"/>
<line x1="645.50" y1="447.5" x2="645.50" y2="442.8" stroke="#ff4848" stroke-width="1.5"/>
<line x1="648.00" y1="447.5" x2="648.00" y2="440.2" stroke="#ff4848" stroke-width="1.5"/>
<line x1="650.50" y1="447.5" x2="650.50" y2="437.2" stroke="#ff4848" stroke-width="1.5"/>
<line x1="653.00" y1="447.5" x2="653.00" y2="435.5" stroke="#ff4848" stroke-width="1.5"/>
<line x1="655.50" y1="447.5" x2="655.50" y2="435.0" stroke="#ff4848" stroke-width="1.5"/>
<line x1="658.00" y1="447.5" x2="658.00" y2="446.2" stroke="#ff4848" stroke-width="1.5"/>
<line x1="665.50" y1="447.5" x2="665.50" y2="448.6" stroke="#00ffff" stroke-width="1.5"/>
<line x1="670.50" y1="447.5" x2="670.50" y2="443.2" stroke="#ff4848" stroke-width="1.5"/>
<line x1="673.00" y1="447.5" x2="673.00" y2="437.7" stroke="#ff4848" stroke-width="1.5"/>
<line x1="675.50" y1="447.5" x2="675.50" y2="434.8" stroke="#ff4848" stroke-width="1.5"/>
<line x1="678.00" y1="447.5" x2="678.00" y2="434.0" stroke="#ff4848" stroke-width="1.5"/>
<line x1="680.50" y1="447.5" x2="680.50" y2="435.5" stroke="#ff4848" stroke-width="1.5"/>
<line x1="683.00" y1="447.5" x2="683.00" y2="438.3" stroke="#ff4848" stroke-width="1.5"/>
<line x1="685.50" y1="447.5" x2="685.50" y2="442.5" stroke="#ff4848" stroke-width="1.5"/>
<line x1="690.50" y1="447.5" x2="690.50" y2="448.9" stroke="#00ffff" stroke-width="1.5"/>
<line x1="693.00" y1="447.5" x2="693.00" y2="450.0" stroke="#00ffff" stroke-width="1.5"/>
<line x1="695.50" y1="447.5" x2="695.50" y2="450.2" stroke="#00ffff" stroke-width="1.5"/>
<line x1="698.00" y1="447.5" x2="698.00" y2="450.4" stroke="#00ffff" stroke-width="1.5"/>
<line x1="700.50" y1="447.5" x2="700.50" y2="450.4" stroke="#00ffff" stroke-width="1.5"/>
<line x1="703.00" y1="447.5" x2="703.00" y2="450.1" stroke="#00ffff" stroke-width="1.5"/>
<line x1="705.50" y1="447.5" x2="705.50" y2="449.8" stroke="#00ffff" stroke-width="1.5"/>
<line x1="708.00" y1="447.5" x2="708.00" y2="449.4" stroke="#00ffff" stroke-width="1.5"/>
<line x1="710.50" y1="447.5" x2="710.50" y2="449.1" stroke="#00ffff" stroke-width="1.5"/>
<line x1="713.00" y1="447.5" x2="713.00" y2="449.0" stroke="#00ffff" stroke-width="1.5"/>
<line x1="715.50" y1="447.5" x2="715.50" y2="452.0" stroke="#00ffff" stroke-width="1.5"/>
<line x1="718.00" y1="447.5" x2="718.00" y2="461.1" stroke="#00ffff" stroke-width="1.5"/>
<line x1="720.50" y1="447.5" x2="720.50" y2="462.0" stroke="#00ffff" stroke-width="1.5"/>
<line x1="723.00" y1="447.5" x2="723.00" y2="458.9" stroke="#00ffff" stroke-width="1.5"/>
<line x1="725.50" y1="447.5" x2="725.50" y2="455.2" stroke="#00ffff" stroke-width="1.5"/>
<line x1="728.00" y1="447.5" x2="728.00" y2="450.0" stroke="#00ffff" stroke-width="1.5"/>
<line x1="733.00" y1="447.5" x2="733.00" y2="445.1" stroke="#ff4848" stroke-width="1.5"/>
<line x1="735.50" y1="447.5" x2="735.50" y2="443.8" stroke="#ff4848" stroke-width="1.5"/>
<polyline points="63.8,432.5 70.0,435.0 77.5,438.8 85.0,441.2 92.5,443.0 100.0,445.0 110.0,446.2 117.5,447.5 125.0,448.8 132.5,449.5 140.0,450.5 147.5,452.0 153.8,450.5 160.0,446.2 167.5,442.5 175.0,440.5 182.5,440.0 187.5,442.5 192.5,446.2 200.0,448.8 207.5,450.5 215.0,448.8 220.0,446.2 225.0,443.8 230.0,435.0 235.0,425.0 240.0,421.2 245.0,420.0 250.0,423.8 257.5,430.0 265.0,436.2 272.5,441.2 280.0,442.5 287.5,441.2 295.0,443.0 300.0,445.0 306.2,446.2 312.5,441.2 317.5,427.5 322.5,418.8 327.5,417.0 331.2,420.0 335.0,423.8 340.0,425.5 345.0,426.2 350.0,427.0 355.0,428.8 360.0,433.8 365.0,441.2 370.0,447.5 375.0,451.2 380.0,452.0 386.2,451.2 392.5,450.5 400.0,448.8 407.5,446.2 415.0,445.0 421.2,447.0 427.5,448.0 435.0,448.8 442.5,450.0 450.0,451.2 457.5,452.0 465.0,449.5 472.5,447.5 477.5,450.0 481.2,455.0 485.0,462.5 490.0,468.8 495.0,471.2 500.0,473.0 503.8,468.8 508.8,467.5 512.5,466.2 516.2,470.0 520.0,472.0 525.0,468.8 530.0,463.8 536.2,462.0 540.0,462.0 545.0,461.2 550.0,460.0 555.0,455.0 560.0,451.2 565.0,447.5 570.0,447.0 573.8,451.2 577.5,462.5 581.2,470.0 585.0,473.8 590.0,472.5 595.0,468.8 600.0,465.0 606.2,462.0 612.5,457.5 618.8,455.5 623.8,459.5 630.0,460.5 637.5,462.0 643.8,458.8 650.0,453.8 655.0,449.5 660.0,453.0 665.0,454.5 670.0,452.5 675.0,448.0 680.0,445.0 685.0,444.5 690.0,446.2 697.5,448.0 705.0,448.8 712.5,448.8 716.2,453.8 720.0,462.5 725.0,460.5 730.0,457.5 735.0,456.2" fill="none" stroke="#ffffff" stroke-width="1" stroke-linejoin="round" />
<polyline points="63.8,432.0 70.0,433.0 77.5,437.0 85.0,439.5 92.5,441.5 100.0,443.8 110.0,445.0 117.5,446.2 125.0,448.0 132.5,449.5 140.0,450.0 147.5,451.2 155.0,451.2 162.5,448.0 170.0,444.5 177.5,442.0 185.0,440.5 192.5,442.5 200.0,446.2 207.5,448.0 215.0,448.8 222.5,447.5 230.0,442.5 237.5,432.5 242.5,426.2 247.5,424.5 255.0,426.2 262.5,431.2 270.0,436.2 277.5,440.0 285.0,440.5 292.5,441.2 297.5,442.5 300.0,442.5 307.5,443.8 313.8,443.8 320.0,436.2 325.0,427.5 330.0,423.0 335.0,423.0 341.2,425.0 347.5,426.2 353.8,427.0 360.0,430.0 365.0,435.0 370.0,440.0 375.0,445.0 380.0,448.8 386.2,450.5 393.8,451.2 401.2,450.0 408.8,448.0 416.2,446.2 423.8,447.0 431.2,448.0 438.8,448.8 446.2,449.5 453.8,451.2 461.2,450.5 468.8,448.8 475.0,448.0 480.0,451.2 485.0,457.5 490.0,463.8 496.2,468.0 502.5,470.0 508.8,468.8 515.0,468.8 521.2,470.0 527.5,468.8 533.8,465.5 538.8,464.0 540.0,463.0 546.2,462.0 552.5,459.5 558.8,455.0 565.0,451.2 571.2,449.5 575.0,453.8 580.0,462.0 585.0,467.5 590.0,470.0 596.2,468.8 602.5,465.5 608.8,462.5 615.0,459.5 621.2,458.0 627.5,459.5 635.0,461.2 642.5,460.0 650.0,457.0 656.2,453.8 662.5,453.8 668.8,453.8 675.0,450.5 681.2,447.0 687.5,445.5 695.0,447.0 702.5,448.0 710.0,448.8 716.2,450.5 721.2,456.2 726.2,458.8 731.2,458.0 736.2,457.0" fill="none" stroke="#ffff00" stroke-width="1.2" stroke-linejoin="round" />
<line x1="590" y1="476.2" x2="767" y2="459.2" stroke="#ff0000" stroke-width="1.1"/>
</g>
<line x1="64" y1="516.5" x2="736" y2="516.5" stroke="#0000ff" stroke-width="1.4"/>
<line x1="64" y1="533.5" x2="736" y2="533.5" stroke="#00ff00" stroke-width="1.4"/>
<line x1="64" y1="549.5" x2="736" y2="549.5" stroke="#ff00ff" stroke-width="1.4"/>
<g shape-rendering="auto">
<line x1="65.50" y1="505.3" x2="65.50" y2="506.6" stroke="#0000ff" stroke-width="1.4"/>
<line x1="68.00" y1="505.1" x2="68.00" y2="506.4" stroke="#0000ff" stroke-width="1.4"/>
<line x1="70.50" y1="504.9" x2="70.50" y2="506.2" stroke="#0000ff" stroke-width="1.4"/>
<line x1="73.00" y1="504.7" x2="73.00" y2="506.0" stroke="#0000ff" stroke-width="1.4"/>
<line x1="75.50" y1="504.5" x2="75.50" y2="505.8" stroke="#0000ff" stroke-width="1.4"/>
<line x1="78.00" y1="504.4" x2="78.00" y2="505.7" stroke="#0000ff" stroke-width="1.4"/>
<line x1="80.50" y1="504.4" x2="80.50" y2="505.7" stroke="#0000ff" stroke-width="1.4"/>
<line x1="83.00" y1="504.3" x2="83.00" y2="505.6" stroke="#0000ff" stroke-width="1.4"/>
<line x1="85.50" y1="504.3" x2="85.50" y2="505.6" stroke="#0000ff" stroke-width="1.4"/>
<line x1="88.00" y1="504.3" x2="88.00" y2="505.6" stroke="#0000ff" stroke-width="1.4"/>
<line x1="90.50" y1="504.3" x2="90.50" y2="505.6" stroke="#c80000" stroke-width="1.4"/>
<line x1="93.00" y1="504.3" x2="93.00" y2="505.6" stroke="#c80000" stroke-width="1.4"/>
<line x1="95.50" y1="504.3" x2="95.50" y2="505.6" stroke="#c80000" stroke-width="1.4"/>
<line x1="98.00" y1="504.4" x2="98.00" y2="505.7" stroke="#c80000" stroke-width="1.4"/>
<line x1="100.50" y1="504.4" x2="100.50" y2="505.7" stroke="#c80000" stroke-width="1.4"/>
<line x1="103.00" y1="504.5" x2="103.00" y2="505.8" stroke="#c80000" stroke-width="1.4"/>
<line x1="105.50" y1="504.6" x2="105.50" y2="505.9" stroke="#c80000" stroke-width="1.4"/>
<line x1="108.00" y1="504.8" x2="108.00" y2="506.1" stroke="#c80000" stroke-width="1.4"/>
<line x1="110.50" y1="505.0" x2="110.50" y2="506.3" stroke="#c80000" stroke-width="1.4"/>
<line x1="113.00" y1="505.2" x2="113.00" y2="506.5" stroke="#c80000" stroke-width="1.4"/>
<line x1="115.50" y1="505.4" x2="115.50" y2="507.3" stroke="#c80000" stroke-width="1.4"/>
<line x1="118.00" y1="505.8" x2="118.00" y2="508.1" stroke="#c80000" stroke-width="1.4"/>
<line x1="120.50" y1="506.6" x2="120.50" y2="509.1" stroke="#c80000" stroke-width="1.4"/>
<line x1="123.00" y1="507.4" x2="123.00" y2="510.8" stroke="#c80000" stroke-width="1.4"/>
<line x1="125.50" y1="508.3" x2="125.50" y2="512.4" stroke="#c80000" stroke-width="1.4"/>
<line x1="128.00" y1="509.4" x2="128.00" y2="514.2" stroke="#c80000" stroke-width="1.4"/>
<line x1="130.50" y1="511.1" x2="130.50" y2="516.8" stroke="#c80000" stroke-width="1.4"/>
<line x1="133.00" y1="512.8" x2="133.00" y2="519.2" stroke="#c80000" stroke-width="1.4"/>
<line x1="135.50" y1="514.8" x2="135.50" y2="521.9" stroke="#c80000" stroke-width="1.4"/>
<line x1="138.00" y1="517.2" x2="138.00" y2="525.2" stroke="#c80000" stroke-width="1.4"/>
<line x1="140.50" y1="519.8" x2="140.50" y2="528.6" stroke="#c80000" stroke-width="1.4"/>
<line x1="143.00" y1="522.6" x2="143.00" y2="531.8" stroke="#c80000" stroke-width="1.4"/>
<line x1="145.50" y1="525.9" x2="145.50" y2="534.5" stroke="#c80000" stroke-width="1.4"/>
<line x1="148.00" y1="529.2" x2="148.00" y2="537.2" stroke="#c80000" stroke-width="1.4"/>
<line x1="150.50" y1="532.3" x2="150.50" y2="538.5" stroke="#c80000" stroke-width="1.4"/>
<line x1="153.00" y1="535.0" x2="153.00" y2="539.3" stroke="#c80000" stroke-width="1.4"/>
<line x1="155.50" y1="537.7" x2="155.50" y2="539.0" stroke="#c80000" stroke-width="1.4"/>
<line x1="158.00" y1="537.8" x2="158.00" y2="539.1" stroke="#0000ff" stroke-width="1.4"/>
<line x1="160.50" y1="536.6" x2="160.50" y2="539.4" stroke="#0000ff" stroke-width="1.4"/>
<line x1="163.00" y1="534.7" x2="163.00" y2="538.6" stroke="#0000ff" stroke-width="1.4"/>
<line x1="165.50" y1="532.8" x2="165.50" y2="537.6" stroke="#0000ff" stroke-width="1.4"/>
<line x1="168.00" y1="530.8" x2="168.00" y2="536.2" stroke="#0000ff" stroke-width="1.4"/>
<line x1="170.50" y1="528.8" x2="170.50" y2="534.3" stroke="#0000ff" stroke-width="1.4"/>
<line x1="173.00" y1="526.7" x2="173.00" y2="532.4" stroke="#0000ff" stroke-width="1.4"/>
<line x1="175.50" y1="524.7" x2="175.50" y2="530.4" stroke="#0000ff" stroke-width="1.4"/>
<line x1="178.00" y1="523.0" x2="178.00" y2="528.3" stroke="#0000ff" stroke-width="1.4"/>
<line x1="180.50" y1="521.3" x2="180.50" y2="526.2" stroke="#0000ff" stroke-width="1.4"/>
<line x1="183.00" y1="520.0" x2="183.00" y2="524.3" stroke="#0000ff" stroke-width="1.4"/>
<line x1="185.50" y1="519.7" x2="185.50" y2="522.7" stroke="#0000ff" stroke-width="1.4"/>
<line x1="188.00" y1="519.6" x2="188.00" y2="521.0" stroke="#0000ff" stroke-width="1.4"/>
<line x1="190.50" y1="519.9" x2="190.50" y2="521.2" stroke="#c80000" stroke-width="1.4"/>
<line x1="193.00" y1="519.6" x2="193.00" y2="520.9" stroke="#c80000" stroke-width="1.4"/>
<line x1="195.50" y1="519.7" x2="195.50" y2="521.5" stroke="#c80000" stroke-width="1.4"/>
<line x1="198.00" y1="520.3" x2="198.00" y2="522.5" stroke="#c80000" stroke-width="1.4"/>
<line x1="200.50" y1="520.9" x2="200.50" y2="523.6" stroke="#c80000" stroke-width="1.4"/>
<line x1="203.00" y1="521.7" x2="203.00" y2="524.7" stroke="#c80000" stroke-width="1.4"/>
<line x1="205.50" y1="522.8" x2="205.50" y2="525.9" stroke="#c80000" stroke-width="1.4"/>
<line x1="208.00" y1="523.9" x2="208.00" y2="527.1" stroke="#c80000" stroke-width="1.4"/>
<line x1="210.50" y1="525.0" x2="210.50" y2="528.2" stroke="#c80000" stroke-width="1.4"/>
<line x1="213.00" y1="526.1" x2="213.00" y2="529.0" stroke="#c80000" stroke-width="1.4"/>
<line x1="215.50" y1="527.3" x2="215.50" y2="529.8" stroke="#c80000" stroke-width="1.4"/>
<line x1="218.00" y1="528.3" x2="218.00" y2="529.6" stroke="#c80000" stroke-width="1.4"/>
<line x1="220.50" y1="528.8" x2="220.50" y2="530.1" stroke="#0000ff" stroke-width="1.4"/>
<line x1="223.00" y1="528.1" x2="223.00" y2="529.9" stroke="#0000ff" stroke-width="1.4"/>
<line x1="225.50" y1="527.3" x2="225.50" y2="529.4" stroke="#0000ff" stroke-width="1.4"/>
<line x1="228.00" y1="526.5" x2="228.00" y2="528.6" stroke="#0000ff" stroke-width="1.4"/>
<line x1="230.50" y1="525.7" x2="230.50" y2="527.9" stroke="#0000ff" stroke-width="1.4"/>
<line x1="233.00" y1="524.7" x2="233.00" y2="527.2" stroke="#0000ff" stroke-width="1.4"/>
<line x1="235.50" y1="523.0" x2="235.50" y2="526.3" stroke="#0000ff" stroke-width="1.4"/>
<line x1="238.00" y1="521.3" x2="238.00" y2="525.5" stroke="#0000ff" stroke-width="1.4"/>
<line x1="240.50" y1="519.8" x2="240.50" y2="524.3" stroke="#0000ff" stroke-width="1.4"/>
<line x1="243.00" y1="518.5" x2="243.00" y2="522.7" stroke="#0000ff" stroke-width="1.4"/>
<line x1="245.50" y1="517.2" x2="245.50" y2="521.0" stroke="#0000ff" stroke-width="1.4"/>
<line x1="248.00" y1="516.0" x2="248.00" y2="519.5" stroke="#0000ff" stroke-width="1.4"/>
<line x1="250.50" y1="515.0" x2="250.50" y2="518.2" stroke="#0000ff" stroke-width="1.4"/>
<line x1="253.00" y1="513.9" x2="253.00" y2="517.0" stroke="#0000ff" stroke-width="1.4"/>
<line x1="255.50" y1="512.9" x2="255.50" y2="515.8" stroke="#0000ff" stroke-width="1.4"/>
<line x1="258.00" y1="511.9" x2="258.00" y2="514.8" stroke="#0000ff" stroke-width="1.4"/>
<line x1="260.50" y1="511.4" x2="260.50" y2="513.7" stroke="#0000ff" stroke-width="1.4"/>
<line x1="263.00" y1="510.9" x2="263.00" y2="512.6" stroke="#0000ff" stroke-width="1.4"/>
<line x1="265.50" y1="510.4" x2="265.50" y2="511.8" stroke="#0000ff" stroke-width="1.4"/>
<line x1="268.00" y1="509.9" x2="268.00" y2="511.3" stroke="#0000ff" stroke-width="1.4"/>
<line x1="270.50" y1="509.6" x2="270.50" y2="510.9" stroke="#0000ff" stroke-width="1.4"/>
<line x1="273.00" y1="509.3" x2="273.00" y2="510.6" stroke="#0000ff" stroke-width="1.4"/>
<line x1="275.50" y1="509.0" x2="275.50" y2="510.3" stroke="#0000ff" stroke-width="1.4"/>
<line x1="278.00" y1="508.6" x2="278.00" y2="509.9" stroke="#0000ff" stroke-width="1.4"/>
<line x1="280.50" y1="507.8" x2="280.50" y2="509.2" stroke="#0000ff" stroke-width="1.4"/>
<line x1="283.00" y1="506.9" x2="283.00" y2="508.9" stroke="#0000ff" stroke-width="1.4"/>
<line x1="285.50" y1="506.2" x2="285.50" y2="508.4" stroke="#0000ff" stroke-width="1.4"/>
<line x1="288.00" y1="505.9" x2="288.00" y2="507.6" stroke="#0000ff" stroke-width="1.4"/>
<line x1="290.50" y1="505.6" x2="290.50" y2="506.9" stroke="#0000ff" stroke-width="1.4"/>
<line x1="293.00" y1="505.2" x2="293.00" y2="506.6" stroke="#0000ff" stroke-width="1.4"/>
<line x1="295.50" y1="504.9" x2="295.50" y2="506.2" stroke="#0000ff" stroke-width="1.4"/>
<line x1="298.00" y1="504.7" x2="298.00" y2="506.0" stroke="#0000ff" stroke-width="1.4"/>
<line x1="300.50" y1="504.4" x2="300.50" y2="505.7" stroke="#0000ff" stroke-width="1.4"/>
<line x1="303.00" y1="504.1" x2="303.00" y2="505.4" stroke="#0000ff" stroke-width="1.4"/>
<line x1="305.50" y1="503.8" x2="305.50" y2="505.1" stroke="#0000ff" stroke-width="1.4"/>
<line x1="308.00" y1="503.5" x2="308.00" y2="504.8" stroke="#0000ff" stroke-width="1.4"/>
<line x1="310.50" y1="503.1" x2="310.50" y2="504.4" stroke="#0000ff" stroke-width="1.4"/>
<line x1="313.00" y1="502.6" x2="313.00" y2="503.9" stroke="#0000ff" stroke-width="1.4"/>
<line x1="315.50" y1="502.1" x2="315.50" y2="503.4" stroke="#0000ff" stroke-width="1.4"/>
<line x1="318.00" y1="501.6" x2="318.00" y2="503.1" stroke="#0000ff" stroke-width="1.4"/>
<line x1="320.50" y1="501.2" x2="320.50" y2="502.6" stroke="#0000ff" stroke-width="1.4"/>
<line x1="323.00" y1="500.9" x2="323.00" y2="502.2" stroke="#0000ff" stroke-width="1.4"/>
<line x1="325.50" y1="500.7" x2="325.50" y2="502.0" stroke="#0000ff" stroke-width="1.4"/>
<line x1="328.00" y1="500.6" x2="328.00" y2="501.9" stroke="#0000ff" stroke-width="1.4"/>
<line x1="330.50" y1="500.9" x2="330.50" y2="502.2" stroke="#c80000" stroke-width="1.4"/>
<line x1="333.00" y1="500.6" x2="333.00" y2="501.9" stroke="#c80000" stroke-width="1.4"/>
<line x1="335.50" y1="500.7" x2="335.50" y2="502.1" stroke="#c80000" stroke-width="1.4"/>
<line x1="338.00" y1="501.2" x2="338.00" y2="502.6" stroke="#c80000" stroke-width="1.4"/>
<line x1="340.50" y1="501.7" x2="340.50" y2="503.0" stroke="#c80000" stroke-width="1.4"/>
<line x1="343.00" y1="502.2" x2="343.00" y2="503.5" stroke="#c80000" stroke-width="1.4"/>
<line x1="345.50" y1="502.3" x2="345.50" y2="503.6" stroke="#0000ff" stroke-width="1.4"/>
<line x1="348.00" y1="502.0" x2="348.00" y2="503.3" stroke="#0000ff" stroke-width="1.4"/>
<line x1="350.50" y1="502.0" x2="350.50" y2="503.3" stroke="#0000ff" stroke-width="1.4"/>
<line x1="353.00" y1="502.0" x2="353.00" y2="503.3" stroke="#0000ff" stroke-width="1.4"/>
<line x1="355.50" y1="502.0" x2="355.50" y2="503.3" stroke="#c80000" stroke-width="1.4"/>
<line x1="358.00" y1="502.0" x2="358.00" y2="503.3" stroke="#c80000" stroke-width="1.4"/>
<line x1="360.50" y1="502.0" x2="360.50" y2="503.4" stroke="#c80000" stroke-width="1.4"/>
<line x1="363.00" y1="502.2" x2="363.00" y2="504.0" stroke="#c80000" stroke-width="1.4"/>
<line x1="365.50" y1="502.9" x2="365.50" y2="504.8" stroke="#c80000" stroke-width="1.4"/>
<line x1="368.00" y1="503.5" x2="368.00" y2="506.2" stroke="#c80000" stroke-width="1.4"/>
<line x1="370.50" y1="504.1" x2="370.50" y2="507.6" stroke="#c80000" stroke-width="1.4"/>
<line x1="373.00" y1="505.1" x2="373.00" y2="509.0" stroke="#c80000" stroke-width="1.4"/>
<line x1="375.50" y1="506.5" x2="375.50" y2="510.2" stroke="#c80000" stroke-width="1.4"/>
<line x1="378.00" y1="507.9" x2="378.00" y2="511.5" stroke="#c80000" stroke-width="1.4"/>
<line x1="380.50" y1="509.2" x2="380.50" y2="512.8" stroke="#c80000" stroke-width="1.4"/>
<line x1="383.00" y1="510.5" x2="383.00" y2="514.0" stroke="#c80000" stroke-width="1.4"/>
<line x1="385.50" y1="511.8" x2="385.50" y2="515.2" stroke="#c80000" stroke-width="1.4"/>
<line x1="388.00" y1="513.0" x2="388.00" y2="516.4" stroke="#c80000" stroke-width="1.4"/>
<line x1="390.50" y1="514.2" x2="390.50" y2="517.0" stroke="#c80000" stroke-width="1.4"/>
<line x1="393.00" y1="515.5" x2="393.00" y2="517.7" stroke="#c80000" stroke-width="1.4"/>
<line x1="395.50" y1="516.5" x2="395.50" y2="518.3" stroke="#c80000" stroke-width="1.4"/>
<line x1="398.00" y1="517.2" x2="398.00" y2="518.8" stroke="#c80000" stroke-width="1.4"/>
<line x1="400.50" y1="517.9" x2="400.50" y2="519.2" stroke="#c80000" stroke-width="1.4"/>
<line x1="403.00" y1="518.4" x2="403.00" y2="519.7" stroke="#c80000" stroke-width="1.4"/>
<line x1="405.50" y1="518.8" x2="405.50" y2="520.5" stroke="#c80000" stroke-width="1.4"/>
<line x1="408.00" y1="519.2" x2="408.00" y2="521.3" stroke="#c80000" stroke-width="1.4"/>
<line x1="410.50" y1="519.8" x2="410.50" y2="522.3" stroke="#c80000" stroke-width="1.4"/>
<line x1="413.00" y1="520.7" x2="413.00" y2="523.7" stroke="#c80000" stroke-width="1.4"/>
<line x1="415.50" y1="521.5" x2="415.50" y2="525.1" stroke="#c80000" stroke-width="1.4"/>
<line x1="418.00" y1="522.6" x2="418.00" y2="526.6" stroke="#c80000" stroke-width="1.4"/>
<line x1="420.50" y1="524.0" x2="420.50" y2="528.5" stroke="#c80000" stroke-width="1.4"/>
<line x1="423.00" y1="525.4" x2="423.00" y2="530.5" stroke="#c80000" stroke-width="1.4"/>
<line x1="425.50" y1="527.0" x2="425.50" y2="532.4" stroke="#c80000" stroke-width="1.4"/>
<line x1="428.00" y1="528.9" x2="428.00" y2="534.2" stroke="#c80000" stroke-width="1.4"/>
<line x1="430.50" y1="530.9" x2="430.50" y2="536.0" stroke="#c80000" stroke-width="1.4"/>
<line x1="433.00" y1="532.7" x2="433.00" y2="537.8" stroke="#c80000" stroke-width="1.4"/>
<line x1="435.50" y1="534.6" x2="435.50" y2="539.5" stroke="#c80000" stroke-width="1.4"/>
<line x1="438.00" y1="536.4" x2="438.00" y2="541.2" stroke="#c80000" stroke-width="1.4"/>
<line x1="440.50" y1="538.2" x2="440.50" y2="542.8" stroke="#c80000" stroke-width="1.4"/>
<line x1="443.00" y1="539.8" x2="443.00" y2="544.3" stroke="#c80000" stroke-width="1.4"/>
<line x1="445.50" y1="541.5" x2="445.50" y2="545.8" stroke="#c80000" stroke-width="1.4"/>
<line x1="448.00" y1="543.1" x2="448.00" y2="547.2" stroke="#c80000" stroke-width="1.4"/>
<line x1="450.50" y1="544.6" x2="450.50" y2="548.2" stroke="#c80000" stroke-width="1.4"/>
<line x1="453.00" y1="546.1" x2="453.00" y2="549.2" stroke="#c80000" stroke-width="1.4"/>
<line x1="455.50" y1="547.4" x2="455.50" y2="550.1" stroke="#c80000" stroke-width="1.4"/>
<line x1="458.00" y1="548.4" x2="458.00" y2="550.5" stroke="#c80000" stroke-width="1.4"/>
<line x1="460.50" y1="549.4" x2="460.50" y2="550.9" stroke="#c80000" stroke-width="1.4"/>
<line x1="463.00" y1="550.2" x2="463.00" y2="551.5" stroke="#c80000" stroke-width="1.4"/>
<line x1="465.50" y1="550.6" x2="465.50" y2="551.9" stroke="#c80000" stroke-width="1.4"/>
<line x1="468.00" y1="550.3" x2="468.00" y2="551.6" stroke="#0000ff" stroke-width="1.4"/>
<line x1="470.50" y1="550.2" x2="470.50" y2="551.5" stroke="#0000ff" stroke-width="1.4"/>
<line x1="473.00" y1="550.7" x2="473.00" y2="552.0" stroke="#c80000" stroke-width="1.4"/>
<line x1="475.50" y1="550.2" x2="475.50" y2="551.8" stroke="#c80000" stroke-width="1.4"/>
<line x1="478.00" y1="550.3" x2="478.00" y2="552.7" stroke="#c80000" stroke-width="1.4"/>
<line x1="480.50" y1="551.2" x2="480.50" y2="553.5" stroke="#c80000" stroke-width="1.4"/>
<line x1="483.00" y1="552.0" x2="483.00" y2="554.3" stroke="#c80000" stroke-width="1.4"/>
<line x1="485.50" y1="552.8" x2="485.50" y2="555.1" stroke="#c80000" stroke-width="1.4"/>
<line x1="488.00" y1="553.7" x2="488.00" y2="555.5" stroke="#c80000" stroke-width="1.4"/>
<line x1="490.50" y1="554.5" x2="490.50" y2="555.9" stroke="#c80000" stroke-width="1.4"/>
<line x1="493.00" y1="555.2" x2="493.00" y2="556.5" stroke="#c80000" stroke-width="1.4"/>
<line x1="495.50" y1="555.6" x2="495.50" y2="556.9" stroke="#c80000" stroke-width="1.4"/>
<line x1="498.00" y1="556.0" x2="498.00" y2="557.3" stroke="#c80000" stroke-width="1.4"/>
<line x1="500.50" y1="556.4" x2="500.50" y2="557.6" stroke="#c80000" stroke-width="1.4"/>
<line x1="503.00" y1="556.6" x2="503.00" y2="557.9" stroke="#c80000" stroke-width="1.4"/>
<line x1="505.50" y1="556.3" x2="505.50" y2="557.6" stroke="#0000ff" stroke-width="1.4"/>
<line x1="508.00" y1="556.1" x2="508.00" y2="557.4" stroke="#0000ff" stroke-width="1.4"/>
<line x1="510.50" y1="556.5" x2="510.50" y2="557.8" stroke="#0000ff" stroke-width="1.4"/>
<line x1="513.00" y1="556.2" x2="513.00" y2="557.5" stroke="#c80000" stroke-width="1.4"/>
<line x1="515.50" y1="556.1" x2="515.50" y2="557.4" stroke="#c80000" stroke-width="1.4"/>
<line x1="518.00" y1="556.5" x2="518.00" y2="557.8" stroke="#c80000" stroke-width="1.4"/>
<line x1="520.50" y1="556.9" x2="520.50" y2="558.2" stroke="#c80000" stroke-width="1.4"/>
<line x1="523.00" y1="557.3" x2="523.00" y2="558.6" stroke="#c80000" stroke-width="1.4"/>
<line x1="525.50" y1="557.7" x2="525.50" y2="559.0" stroke="#c80000" stroke-width="1.4"/>
<line x1="528.00" y1="558.1" x2="528.00" y2="559.4" stroke="#c80000" stroke-width="1.4"/>
<line x1="530.50" y1="558.5" x2="530.50" y2="559.8" stroke="#c80000" stroke-width="1.4"/>
<line x1="533.00" y1="558.9" x2="533.00" y2="560.2" stroke="#c80000" stroke-width="1.4"/>
<line x1="535.50" y1="559.2" x2="535.50" y2="560.5" stroke="#c80000" stroke-width="1.4"/>
<line x1="538.00" y1="559.5" x2="538.00" y2="560.8" stroke="#c80000" stroke-width="1.4"/>
<line x1="540.50" y1="559.8" x2="540.50" y2="561.4" stroke="#c80000" stroke-width="1.4"/>
<line x1="543.00" y1="560.2" x2="543.00" y2="562.0" stroke="#c80000" stroke-width="1.4"/>
<line x1="545.50" y1="560.9" x2="545.50" y2="562.7" stroke="#c80000" stroke-width="1.4"/>
<line x1="548.00" y1="561.5" x2="548.00" y2="563.3" stroke="#c80000" stroke-width="1.4"/>
<line x1="550.50" y1="562.2" x2="550.50" y2="563.6" stroke="#c80000" stroke-width="1.4"/>
<line x1="553.00" y1="562.9" x2="553.00" y2="564.1" stroke="#c80000" stroke-width="1.4"/>
<line x1="555.50" y1="563.4" x2="555.50" y2="564.7" stroke="#c80000" stroke-width="1.4"/>
<line x1="558.00" y1="563.7" x2="558.00" y2="565.0" stroke="#c80000" stroke-width="1.4"/>
<line x1="560.50" y1="564.0" x2="560.50" y2="565.3" stroke="#0000ff" stroke-width="1.4"/>
<line x1="563.00" y1="563.9" x2="563.00" y2="565.1" stroke="#0000ff" stroke-width="1.4"/>
<line x1="565.50" y1="563.8" x2="565.50" y2="565.0" stroke="#0000ff" stroke-width="1.4"/>
<line x1="568.00" y1="563.8" x2="568.00" y2="565.0" stroke="#0000ff" stroke-width="1.4"/>
<line x1="570.50" y1="563.8" x2="570.50" y2="565.0" stroke="#0000ff" stroke-width="1.4"/>
<line x1="573.00" y1="563.8" x2="573.00" y2="565.0" stroke="#c80000" stroke-width="1.4"/>
<line x1="575.50" y1="563.8" x2="575.50" y2="565.0" stroke="#c80000" stroke-width="1.4"/>
<line x1="578.00" y1="563.8" x2="578.00" y2="565.0" stroke="#c80000" stroke-width="1.4"/>
<line x1="580.50" y1="563.9" x2="580.50" y2="565.1" stroke="#c80000" stroke-width="1.4"/>
<line x1="583.00" y1="563.8" x2="583.00" y2="565.1" stroke="#0000ff" stroke-width="1.4"/>
<line x1="585.50" y1="563.6" x2="585.50" y2="564.9" stroke="#0000ff" stroke-width="1.4"/>
<line x1="588.00" y1="563.4" x2="588.00" y2="564.7" stroke="#0000ff" stroke-width="1.4"/>
<line x1="590.50" y1="563.2" x2="590.50" y2="564.5" stroke="#0000ff" stroke-width="1.4"/>
<line x1="593.00" y1="562.9" x2="593.00" y2="564.2" stroke="#0000ff" stroke-width="1.4"/>
<line x1="595.50" y1="562.6" x2="595.50" y2="563.9" stroke="#0000ff" stroke-width="1.4"/>
<line x1="598.00" y1="562.2" x2="598.00" y2="563.5" stroke="#0000ff" stroke-width="1.4"/>
<line x1="600.50" y1="561.9" x2="600.50" y2="563.2" stroke="#0000ff" stroke-width="1.4"/>
<line x1="603.00" y1="561.6" x2="603.00" y2="562.9" stroke="#0000ff" stroke-width="1.4"/>
<line x1="605.50" y1="561.3" x2="605.50" y2="562.6" stroke="#0000ff" stroke-width="1.4"/>
<line x1="608.00" y1="561.0" x2="608.00" y2="562.3" stroke="#0000ff" stroke-width="1.4"/>
<line x1="610.50" y1="560.7" x2="610.50" y2="562.0" stroke="#0000ff" stroke-width="1.4"/>
<line x1="613.00" y1="560.5" x2="613.00" y2="561.8" stroke="#0000ff" stroke-width="1.4"/>
<line x1="615.50" y1="560.3" x2="615.50" y2="561.6" stroke="#0000ff" stroke-width="1.4"/>
<line x1="618.00" y1="560.1" x2="618.00" y2="561.4" stroke="#0000ff" stroke-width="1.4"/>
<line x1="620.50" y1="560.3" x2="620.50" y2="561.6" stroke="#0000ff" stroke-width="1.4"/>
<line x1="623.00" y1="560.2" x2="623.00" y2="561.5" stroke="#c80000" stroke-width="1.4"/>
<line x1="625.50" y1="560.0" x2="625.50" y2="561.3" stroke="#c80000" stroke-width="1.4"/>
<line x1="628.00" y1="560.4" x2="628.00" y2="561.7" stroke="#c80000" stroke-width="1.4"/>
<line x1="630.50" y1="560.8" x2="630.50" y2="562.1" stroke="#c80000" stroke-width="1.4"/>
<line x1="633.00" y1="561.2" x2="633.00" y2="562.5" stroke="#c80000" stroke-width="1.4"/>
<line x1="635.50" y1="561.6" x2="635.50" y2="562.9" stroke="#c80000" stroke-width="1.4"/>
<line x1="638.00" y1="561.9" x2="638.00" y2="563.1" stroke="#c80000" stroke-width="1.4"/>
<line x1="640.50" y1="562.1" x2="640.50" y2="563.4" stroke="#c80000" stroke-width="1.4"/>
<line x1="643.00" y1="562.4" x2="643.00" y2="563.6" stroke="#c80000" stroke-width="1.4"/>
<line x1="645.50" y1="562.6" x2="645.50" y2="563.9" stroke="#c80000" stroke-width="1.4"/>
<line x1="648.00" y1="562.8" x2="648.00" y2="564.1" stroke="#c80000" stroke-width="1.4"/>
<line x1="650.50" y1="562.5" x2="650.50" y2="563.8" stroke="#0000ff" stroke-width="1.4"/>
<line x1="653.00" y1="562.0" x2="653.00" y2="563.3" stroke="#0000ff" stroke-width="1.4"/>
<line x1="655.50" y1="562.3" x2="655.50" y2="563.6" stroke="#0000ff" stroke-width="1.4"/>
<line x1="658.00" y1="562.4" x2="658.00" y2="563.7" stroke="#c80000" stroke-width="1.4"/>
<line x1="660.50" y1="562.1" x2="660.50" y2="563.4" stroke="#c80000" stroke-width="1.4"/>
<line x1="663.00" y1="562.4" x2="663.00" y2="563.6" stroke="#c80000" stroke-width="1.4"/>
<line x1="665.50" y1="562.6" x2="665.50" y2="563.9" stroke="#c80000" stroke-width="1.4"/>
<line x1="668.00" y1="562.6" x2="668.00" y2="563.9" stroke="#0000ff" stroke-width="1.4"/>
<line x1="670.50" y1="561.3" x2="670.50" y2="562.9" stroke="#0000ff" stroke-width="1.4"/>
<line x1="673.00" y1="559.5" x2="673.00" y2="562.7" stroke="#0000ff" stroke-width="1.4"/>
<line x1="675.50" y1="557.0" x2="675.50" y2="562.5" stroke="#0000ff" stroke-width="1.4"/>
<line x1="678.00" y1="554.6" x2="678.00" y2="561.0" stroke="#0000ff" stroke-width="1.4"/>
<line x1="680.50" y1="552.8" x2="680.50" y2="559.0" stroke="#0000ff" stroke-width="1.4"/>
<line x1="683.00" y1="551.0" x2="683.00" y2="556.5" stroke="#0000ff" stroke-width="1.4"/>
<line x1="685.50" y1="550.0" x2="685.50" y2="554.2" stroke="#0000ff" stroke-width="1.4"/>
<line x1="688.00" y1="549.2" x2="688.00" y2="552.4" stroke="#0000ff" stroke-width="1.4"/>
<line x1="690.50" y1="548.8" x2="690.50" y2="550.9" stroke="#0000ff" stroke-width="1.4"/>
<line x1="693.00" y1="548.3" x2="693.00" y2="549.9" stroke="#0000ff" stroke-width="1.4"/>
<line x1="695.50" y1="548.0" x2="695.50" y2="549.3" stroke="#0000ff" stroke-width="1.4"/>
<line x1="698.00" y1="547.8" x2="698.00" y2="549.1" stroke="#0000ff" stroke-width="1.4"/>
<line x1="700.50" y1="547.6" x2="700.50" y2="548.9" stroke="#0000ff" stroke-width="1.4"/>
<line x1="703.00" y1="547.5" x2="703.00" y2="548.8" stroke="#0000ff" stroke-width="1.4"/>
<line x1="705.50" y1="547.3" x2="705.50" y2="548.6" stroke="#0000ff" stroke-width="1.4"/>
<line x1="708.00" y1="547.2" x2="708.00" y2="548.5" stroke="#0000ff" stroke-width="1.4"/>
<line x1="710.50" y1="547.0" x2="710.50" y2="548.3" stroke="#0000ff" stroke-width="1.4"/>
<line x1="713.00" y1="547.3" x2="713.00" y2="548.6" stroke="#c80000" stroke-width="1.4"/>
<line x1="715.50" y1="547.2" x2="715.50" y2="548.5" stroke="#c80000" stroke-width="1.4"/>
<line x1="718.00" y1="547.0" x2="718.00" y2="548.9" stroke="#c80000" stroke-width="1.4"/>
<line x1="720.50" y1="547.6" x2="720.50" y2="549.5" stroke="#c80000" stroke-width="1.4"/>
<line x1="723.00" y1="548.4" x2="723.00" y2="549.7" stroke="#c80000" stroke-width="1.4"/>
<line x1="725.50" y1="549.1" x2="725.50" y2="550.4" stroke="#c80000" stroke-width="1.4"/>
<line x1="728.00" y1="549.6" x2="728.00" y2="550.9" stroke="#c80000" stroke-width="1.4"/>
<line x1="730.50" y1="549.7" x2="730.50" y2="551.0" stroke="#c80000" stroke-width="1.4"/>
<line x1="733.00" y1="549.9" x2="733.00" y2="551.2" stroke="#c80000" stroke-width="1.4"/>
<line x1="735.50" y1="550.0" x2="735.50" y2="551.3" stroke="#c80000" stroke-width="1.4"/>
</g>
<g shape-rendering="auto">
<polyline points="63.8,622.5 65.5,618.8 67.0,632.5 68.8,642.5 71.2,641.2 73.8,646.2 76.2,645.0 79.5,660.0 82.5,653.8 85.0,650.0 88.8,648.8 91.2,643.8 93.8,656.2 97.5,670.0 100.0,660.0 102.5,650.0 105.0,640.0 107.0,655.0 110.0,638.8 112.0,660.0 113.8,665.0 116.2,685.0 120.0,692.5 123.8,691.2 127.5,682.5 132.5,672.5 136.2,682.5 138.0,688.8 140.0,680.0 142.0,687.5 143.8,682.5 146.2,700.0 148.0,703.8 150.0,695.0 152.0,675.0 153.8,652.5 156.2,640.0 158.8,627.5 161.2,617.5 163.8,632.5 166.2,640.0 168.0,653.8 170.0,637.5 172.5,617.5 174.5,627.5 176.2,637.5 178.8,635.0 181.2,640.0 183.0,637.5 185.0,652.5 187.0,670.0 188.8,677.5 190.0,672.5 192.0,690.0 193.8,675.0 196.2,666.2 198.8,680.0 201.2,667.5 203.0,677.5 205.0,690.0 207.5,682.5 211.2,680.0 213.8,672.5 215.5,652.5 217.5,632.5 220.0,645.0 223.0,646.2 225.5,670.0 227.5,640.0 229.5,612.5 232.5,611.2 235.0,607.5 238.0,602.5 240.5,606.2 243.8,605.0 246.2,617.5 248.8,623.8 251.2,630.0 253.8,632.5 256.2,628.8 258.0,636.2 259.5,626.2 261.5,645.0 263.8,647.5 266.2,661.2 268.8,668.8 271.2,650.0 275.0,657.5 277.5,645.0 281.2,636.2 283.8,637.5 286.2,642.5 288.8,640.0 291.2,640.0 293.8,650.0 296.2,665.0 298.0,673.8 300.0,671.2 303.0,665.0 305.5,645.0 308.0,672.5 310.5,650.0 313.0,622.5 315.5,607.5 318.0,600.0 320.5,590.0 324.2,585.0 326.2,600.0 328.0,615.0 330.0,618.8 332.5,632.5 335.5,638.8 338.8,631.2 341.2,625.0 343.2,613.8 345.5,627.5 347.5,633.8 350.0,618.8 352.0,638.8 355.0,638.8 358.0,641.2 360.0,660.0 362.5,670.0 365.5,676.2 368.8,681.2 371.8,673.8 373.8,685.0 375.5,695.0 378.0,677.5 380.5,666.2 383.8,685.0 386.2,672.5 389.5,661.2 393.0,677.5 396.2,672.5 398.8,663.8 402.0,658.8 405.0,662.5 408.0,661.2 410.5,657.5 412.5,636.2 414.5,647.5 416.2,657.5 418.0,665.0 420.5,681.2 423.0,670.0 425.0,665.0 428.0,673.8 431.2,668.8 435.5,663.8 438.0,670.0 440.5,680.0 443.0,688.8 446.2,681.2 449.5,685.0 452.5,696.2 455.0,682.5 457.5,662.5 460.0,653.8 462.0,651.2 464.5,680.0 467.0,645.0 470.0,650.0 472.5,670.0 475.0,678.8 478.0,690.0 480.5,698.8 483.0,710.0 485.5,723.8 487.5,725.0 490.0,707.5 492.5,701.2 495.0,712.5 497.5,721.2 500.0,710.0 502.5,687.5 505.0,691.2 507.5,701.2 510.5,681.2 513.0,697.5 515.5,708.8 517.5,715.0 520.0,705.0 522.5,688.8 524.5,695.0 527.0,682.5 529.5,675.0 532.5,681.2 535.5,687.5 538.8,696.2 540.0,697.5 543.8,693.8 547.5,695.0 550.5,690.0 552.5,665.0 555.0,660.0 558.0,672.5 561.2,642.5 563.8,650.0 566.2,660.0 568.8,670.0 571.2,682.5 573.0,705.0 575.5,720.0 578.0,731.2 580.0,725.0 582.5,710.0 585.0,717.5 587.5,705.0 590.0,708.8 592.5,697.5 595.0,682.5 597.5,677.5 600.0,687.5 602.5,678.8 604.5,695.0 607.0,675.0 609.5,672.5 612.0,667.5 614.5,678.8 617.0,670.0 619.5,682.5 622.0,695.0 625.0,683.8 628.0,685.0 630.5,695.0 633.0,701.2 635.5,683.8 637.5,690.0 640.0,675.0 642.5,673.8 644.5,680.0 647.5,676.2 650.0,662.5 651.8,651.2 653.8,662.5 655.5,652.5 657.5,685.0 659.5,687.5 661.2,672.5 663.0,678.8 666.2,675.0 668.8,668.8 671.2,652.5 673.8,648.8 676.2,647.5 678.8,643.0 681.2,657.5 685.0,658.8 687.5,675.0 691.2,670.0 694.5,671.2 697.5,672.5 700.0,677.5 703.0,662.5 705.5,673.8 708.0,676.2 711.2,661.2 713.0,672.5 715.0,702.5 717.5,715.0 719.0,717.5 721.2,710.0 723.8,697.5 725.5,688.8 730.0,687.5 735.0,686.2" fill="none" stroke="#ff40c0" stroke-width="1.6" stroke-linejoin="round" />
<polyline points="63.8,622.5 65.5,618.8 67.0,632.5 68.8,642.5 71.2,641.2 73.8,646.2 76.2,645.0 79.5,660.0 82.5,653.8 85.0,650.0 88.8,648.8 91.2,643.8 93.8,656.2 97.5,670.0 100.0,660.0 102.5,650.0 105.0,640.0 107.0,655.0 110.0,638.8 112.0,660.0 113.8,665.0 116.2,685.0 120.0,692.5 123.8,691.2 127.5,682.5 132.5,672.5 136.2,682.5 138.0,688.8 140.0,680.0 142.0,687.5 143.8,682.5 146.2,700.0 148.0,703.8 150.0,695.0 152.0,675.0 153.8,652.5 156.2,640.0 158.8,627.5 161.2,617.5 163.8,632.5 166.2,640.0 168.0,653.8 170.0,637.5 172.5,617.5 174.5,627.5 176.2,637.5 178.8,635.0 181.2,640.0 183.0,637.5 185.0,652.5 187.0,670.0 188.8,677.5 190.0,672.5 192.0,690.0 193.8,675.0 196.2,666.2 198.8,680.0 201.2,667.5 203.0,677.5 205.0,690.0 207.5,682.5 211.2,680.0 213.8,672.5 215.5,652.5 217.5,632.5 220.0,645.0 223.0,646.2 225.5,670.0 227.5,640.0 229.5,612.5 232.5,611.2 235.0,607.5 238.0,602.5 240.5,606.2 243.8,605.0 246.2,617.5 248.8,623.8 251.2,630.0 253.8,632.5 256.2,628.8 258.0,636.2 259.5,626.2 261.5,645.0 263.8,647.5 266.2,661.2 268.8,668.8 271.2,650.0 275.0,657.5 277.5,645.0 281.2,636.2 283.8,637.5 286.2,642.5 288.8,640.0 291.2,640.0 293.8,650.0 296.2,665.0 298.0,673.8 300.0,671.2 303.0,665.0 305.5,645.0 308.0,672.5 310.5,650.0 313.0,622.5 315.5,607.5 318.0,600.0 320.5,590.0 324.2,585.0 326.2,600.0 328.0,615.0 330.0,618.8 332.5,632.5 335.5,638.8 338.8,631.2 341.2,625.0 343.2,613.8 345.5,627.5 347.5,633.8 350.0,618.8 352.0,638.8 355.0,638.8 358.0,641.2 360.0,660.0 362.5,670.0 365.5,676.2 368.8,681.2 371.8,673.8 373.8,685.0 375.5,695.0 378.0,677.5 380.5,666.2 383.8,685.0 386.2,672.5 389.5,661.2 393.0,677.5 396.2,672.5 398.8,663.8 402.0,658.8 405.0,662.5 408.0,661.2 410.5,657.5 412.5,636.2 414.5,647.5 416.2,657.5 418.0,665.0 420.5,681.2 423.0,670.0 425.0,665.0 428.0,673.8 431.2,668.8 435.5,663.8 438.0,670.0 440.5,680.0 443.0,688.8 446.2,681.2 449.5,685.0 452.5,696.2 455.0,682.5 457.5,662.5 460.0,653.8 462.0,651.2 464.5,680.0 467.0,645.0 470.0,650.0 472.5,670.0 475.0,678.8 478.0,690.0 480.5,698.8 483.0,710.0 485.5,723.8 487.5,725.0 490.0,707.5 492.5,701.2 495.0,712.5 497.5,721.2 500.0,710.0 502.5,687.5 505.0,691.2 507.5,701.2 510.5,681.2 513.0,697.5 515.5,708.8 517.5,715.0 520.0,705.0 522.5,688.8 524.5,695.0 527.0,682.5 529.5,675.0 532.5,681.2 535.5,687.5 538.8,696.2 540.0,697.5 543.8,693.8 547.5,695.0 550.5,690.0 552.5,665.0 555.0,660.0 558.0,672.5 561.2,642.5 563.8,650.0 566.2,660.0 568.8,670.0 571.2,682.5 573.0,705.0 575.5,720.0 578.0,731.2 580.0,725.0 582.5,710.0 585.0,717.5 587.5,705.0 590.0,708.8 592.5,697.5 595.0,682.5 597.5,677.5 600.0,687.5 602.5,678.8 604.5,695.0 607.0,675.0 609.5,672.5 612.0,667.5 614.5,678.8 617.0,670.0 619.5,682.5 622.0,695.0 625.0,683.8 628.0,685.0 630.5,695.0 633.0,701.2 635.5,683.8 637.5,690.0 640.0,675.0 642.5,673.8 644.5,680.0 647.5,676.2 650.0,662.5 651.8,651.2 653.8,662.5 655.5,652.5 657.5,685.0 659.5,687.5 661.2,672.5 663.0,678.8 666.2,675.0 668.8,668.8 671.2,652.5 673.8,648.8 676.2,647.5 678.8,643.0 681.2,657.5 685.0,658.8 687.5,675.0 691.2,670.0 694.5,671.2 697.5,672.5 700.0,677.5 703.0,662.5 705.5,673.8 708.0,676.2 711.2,661.2 713.0,672.5 715.0,702.5 717.5,715.0 719.0,717.5 721.2,710.0 723.8,697.5 725.5,688.8 730.0,687.5 735.0,686.2" fill="none" stroke="#ffa0e0" stroke-width="0.6" stroke-linejoin="round" />
</g>
<text x="4" y="62" fill="#fff" font-size="12" font-family='"Liberation Sans","Noto Sans CJK SC",sans-serif' textLength="48">欧元美元</text>
<text x="52.5" y="62" fill="#ffffff" font-size="12" font-family='"Liberation Mono","Noto Sans CJK SC",monospace' text-anchor="start" font-weight="normal" textLength="66" lengthAdjust="spacingAndGlyphs" >(EURUSD)&lt;15</text>
<text x="118.5" y="62" fill="#fff" font-size="12" font-family='"Liberation Sans","Noto Sans CJK SC",sans-serif'>分</text>
<text x="130.5" y="62" fill="#ffffff" font-size="12" font-family='"Liberation Mono","Noto Sans CJK SC",monospace' text-anchor="start" font-weight="normal" textLength="6" lengthAdjust="spacingAndGlyphs" >&gt;</text>
<rect x="754.5" y="50.5" width="15" height="13" fill="#000" stroke="#60a8ff"/>
<rect x="771.5" y="50.5" width="15" height="13" fill="#000" stroke="#60a8ff"/>
<path d="M767.5,54.5 H761.5 V52.5 L757.5,57 L761.5,61.5 V59.5 H767.5 Z" stroke="#60a8ff" fill="none" shape-rendering="auto"/>
<path d="M774.5,54.5 H780.5 V52.5 L784.5,57 L780.5,61.5 V59.5 H774.5 Z" stroke="#60a8ff" fill="none" shape-rendering="auto"/>
</svg>
<svg id="rp" width="235" height="702" viewBox="789 49 235 702" style="position:absolute;left:789px;top:49px">
<g shape-rendering="crispEdges">
<line x1="789" y1="72.5" x2="1021" y2="72.5" stroke="#c80000" stroke-width="1" stroke-dasharray="3 1"/>
<line x1="789" y1="93.5" x2="1021" y2="93.5" stroke="#c80000" stroke-width="1" stroke-dasharray="3 1"/>
<line x1="789" y1="114.5" x2="1021" y2="114.5" stroke="#c80000" stroke-width="1" stroke-dasharray="3 1"/>
<line x1="789" y1="235.5" x2="1021" y2="235.5" stroke="#c80000" stroke-width="1" stroke-dasharray="3 1"/>
<line x1="789" y1="256.5" x2="1021" y2="256.5" stroke="#c80000" stroke-width="1" stroke-dasharray="3 1"/>
</g>
<rect x="1004.5" y="50.5" width="15" height="13" fill="#000" stroke="#60a8ff" shape-rendering="crispEdges"/><rect x="1007.5" y="52.5" width="9" height="8" fill="none" stroke="#60a8ff" shape-rendering="crispEdges"/><rect x="1007" y="52" width="10" height="2" fill="#60a8ff"/>
<rect x="1021" y="49" width="2" height="702" fill="#d8d8d8"/>
<text x="902" y="68" text-anchor="middle" font-size="18" font-family='"Liberation Serif","Noto Serif CJK SC",serif' fill="#ffff00" textLength="152" lengthAdjust="spacingAndGlyphs">欧元美元(EURUSD)</text>
<text x="793.3" y="86.7" font-size="13" font-family='"Liberation Sans","Noto Sans CJK SC",sans-serif' font-weight="300" fill="#ffffff">卖出</text>
<text x="895" y="88" text-anchor="end" font-size="13" font-family='"Liberation Sans",sans-serif' fill="#00f000">1.3880</text>
<text x="1016" y="88" text-anchor="end" font-size="13" font-family='"Liberation Sans",sans-serif' fill="#ffff00">0</text>
<text x="793.3" y="106.7" font-size="13" font-family='"Liberation Sans","Noto Sans CJK SC",sans-serif' font-weight="300" fill="#ffffff">买入</text>
<text x="895" y="108" text-anchor="end" font-size="13" font-family='"Liberation Sans",sans-serif' fill="#00f000">1.3878</text>
<text x="1016" y="108" text-anchor="end" font-size="13" font-family='"Liberation Sans",sans-serif' fill="#ffff00">0</text>
<text x="793.3" y="127.7" font-size="13" font-family='"Liberation Sans","Noto Sans CJK SC",sans-serif' font-weight="300" fill="#ffffff">最新</text>
<text x="895" y="129" text-anchor="end" font-size="13" font-family='"Liberation Sans",sans-serif' fill="#00f000">1.3878</text>
<text x="914.3" y="127.7" font-size="13" font-family='"Liberation Sans","Noto Sans CJK SC",sans-serif' font-weight="300" fill="#ffffff">均价</text>
<text x="1016" y="129" text-anchor="end" font-size="13" font-family='"Liberation Sans",sans-serif' fill="#ffffff">0.0000</text>
<text x="793.3" y="147.7" font-size="13" font-family='"Liberation Sans","Noto Sans CJK SC",sans-serif' font-weight="300" fill="#ffffff">涨跌</text>
<text x="895" y="149" text-anchor="end" font-size="13" font-family='"Liberation Sans",sans-serif' fill="#00f000">-0.0041</text>
<text x="914.3" y="147.7" font-size="13" font-family='"Liberation Sans","Noto Sans CJK SC",sans-serif' font-weight="300" fill="#ffffff">昨收</text>
<text x="1016" y="149" text-anchor="end" font-size="13" font-family='"Liberation Sans",sans-serif' fill="#ffffff">1.3919</text>
<text x="793.3" y="167.7" font-size="13" font-family='"Liberation Sans","Noto Sans CJK SC",sans-serif' font-weight="300" fill="#ffffff">幅度</text>
<text x="895" y="169" text-anchor="end" font-size="13" font-family='"Liberation Sans",sans-serif' fill="#00f000">-0.29%</text>
<text x="914.3" y="167.7" font-size="13" font-family='"Liberation Sans","Noto Sans CJK SC",sans-serif' font-weight="300" fill="#ffffff">开盘</text>
<text x="1016" y="169" text-anchor="end" font-size="13" font-family='"Liberation Sans",sans-serif' fill="#ffffff">1.3919</text>
<text x="793.3" y="187.7" font-size="13" font-family='"Liberation Sans","Noto Sans CJK SC",sans-serif' font-weight="300" fill="#ffffff">总手</text>
<text x="895" y="189" text-anchor="end" font-size="13" font-family='"Liberation Sans",sans-serif' fill="#ffff00">0</text>
<text x="914.3" y="187.7" font-size="13" font-family='"Liberation Sans","Noto Sans CJK SC",sans-serif' font-weight="300" fill="#ffffff">最高</text>
<text x="1016" y="189" text-anchor="end" font-size="13" font-family='"Liberation Sans",sans-serif' fill="#ff3030">1.3927</text>
<text x="793.3" y="207.7" font-size="13" font-family='"Liberation Sans","Noto Sans CJK SC",sans-serif' font-weight="300" fill="#ffffff">现手</text>
<text x="895" y="209" text-anchor="end" font-size="13" font-family='"Liberation Sans",sans-serif' fill="#ffff00">0</text>
<text x="914.3" y="207.7" font-size="13" font-family='"Liberation Sans","Noto Sans CJK SC",sans-serif' font-weight="300" fill="#ffffff">最低</text>
<text x="1016" y="209" text-anchor="end" font-size="13" font-family='"Liberation Sans",sans-serif' fill="#00f000">1.3847</text>
<text x="793.3" y="228.7" font-size="13" font-family='"Liberation Sans","Noto Sans CJK SC",sans-serif' font-weight="300" fill="#ffffff">金额</text>
<text x="895" y="230" text-anchor="end" font-size="13" font-family='"Liberation Sans",sans-serif' fill="#ffff00">0.00</text>
<text x="914.3" y="228.7" font-size="13" font-family='"Liberation Sans","Noto Sans CJK SC",sans-serif' font-weight="300" fill="#ffffff">量比</text>
<text x="1016" y="230" text-anchor="end" font-size="13" font-family='"Liberation Sans",sans-serif' fill="#ffffff">1.00</text>
<text x="793.3" y="248.7" font-size="13" font-family='"Liberation Sans","Noto Sans CJK SC",sans-serif' font-weight="300" fill="#ffffff">外盘</text>
<text x="895" y="250" text-anchor="end" font-size="13" font-family='"Liberation Sans",sans-serif' fill="#ff3030">---</text>
<text x="914.3" y="248.7" font-size="13" font-family='"Liberation Sans","Noto Sans CJK SC",sans-serif' font-weight="300" fill="#ffffff">内盘</text>
<text x="1016" y="250" text-anchor="end" font-size="13" font-family='"Liberation Sans",sans-serif' fill="#00f000">---</text>
<text x="793.3" y="270.7" font-size="13" font-family='"Liberation Sans","Noto Sans CJK SC",sans-serif' font-weight="300" fill="#b0b0b0">北京</text>
<text x="916" y="272" text-anchor="end" font-size="13" font-family='"Liberation Sans","Noto Sans CJK SC",sans-serif' font-weight="300" fill="#b0b0b0">价格</text>
<text x="999" y="272" text-anchor="end" font-size="13" font-family='"Liberation Sans","Noto Sans CJK SC",sans-serif' font-weight="300" fill="#b0b0b0">现手</text>
<text x="794" y="295" font-size="13" font-family='"Liberation Sans",sans-serif' fill="#fff">09:02</text>
<text x="916" y="295" text-anchor="end" font-size="13" font-family='"Liberation Sans",sans-serif' fill="#00f000">1.3879</text>
<text x="1000" y="295" text-anchor="end" font-size="13" font-family='"Liberation Sans",sans-serif' fill="#00f000">0</text>
<text x="794" y="317" font-size="13" font-family='"Liberation Sans",sans-serif' fill="#fff">09:03</text>
<text x="916" y="317" text-anchor="end" font-size="13" font-family='"Liberation Sans",sans-serif' fill="#00f000">1.3878</text>
<text x="1000" y="317" text-anchor="end" font-size="13" font-family='"Liberation Sans",sans-serif' fill="#00f000">0</text>
<text x="794" y="339" font-size="13" font-family='"Liberation Sans",sans-serif' fill="#fff">09:03</text>
<text x="916" y="339" text-anchor="end" font-size="13" font-family='"Liberation Sans",sans-serif' fill="#00f000">1.3877</text>
<text x="1000" y="339" text-anchor="end" font-size="13" font-family='"Liberation Sans",sans-serif' fill="#00f000">0</text>
<text x="794" y="361" font-size="13" font-family='"Liberation Sans",sans-serif' fill="#fff">09:03</text>
<text x="916" y="361" text-anchor="end" font-size="13" font-family='"Liberation Sans",sans-serif' fill="#00f000">1.3878</text>
<text x="1000" y="361" text-anchor="end" font-size="13" font-family='"Liberation Sans",sans-serif' fill="#ffffff">0</text>
<text x="794" y="383" font-size="13" font-family='"Liberation Sans",sans-serif' fill="#fff">09:03</text>
<text x="916" y="383" text-anchor="end" font-size="13" font-family='"Liberation Sans",sans-serif' fill="#00f000">1.3877</text>
<text x="1000" y="383" text-anchor="end" font-size="13" font-family='"Liberation Sans",sans-serif' fill="#00f000">0</text>
<text x="794" y="405" font-size="13" font-family='"Liberation Sans",sans-serif' fill="#fff">09:03</text>
<text x="916" y="405" text-anchor="end" font-size="13" font-family='"Liberation Sans",sans-serif' fill="#00f000">1.3876</text>
<text x="1000" y="405" text-anchor="end" font-size="13" font-family='"Liberation Sans",sans-serif' fill="#00f000">0</text>
<text x="794" y="427" font-size="13" font-family='"Liberation Sans",sans-serif' fill="#fff">09:04</text>
<text x="916" y="427" text-anchor="end" font-size="13" font-family='"Liberation Sans",sans-serif' fill="#00f000">1.3877</text>
<text x="1000" y="427" text-anchor="end" font-size="13" font-family='"Liberation Sans",sans-serif' fill="#ffffff">0</text>
<text x="794" y="449" font-size="13" font-family='"Liberation Sans",sans-serif' fill="#fff">09:04</text>
<text x="916" y="449" text-anchor="end" font-size="13" font-family='"Liberation Sans",sans-serif' fill="#00f000">1.3876</text>
<text x="1000" y="449" text-anchor="end" font-size="13" font-family='"Liberation Sans",sans-serif' fill="#00f000">0</text>
<text x="794" y="471" font-size="13" font-family='"Liberation Sans",sans-serif' fill="#fff">09:04</text>
<text x="916" y="471" text-anchor="end" font-size="13" font-family='"Liberation Sans",sans-serif' fill="#00f000">1.3877</text>
<text x="1000" y="471" text-anchor="end" font-size="13" font-family='"Liberation Sans",sans-serif' fill="#ffffff">0</text>
<text x="794" y="493" font-size="13" font-family='"Liberation Sans",sans-serif' fill="#fff">09:04</text>
<text x="916" y="493" text-anchor="end" font-size="13" font-family='"Liberation Sans",sans-serif' fill="#00f000">1.3876</text>
<text x="1000" y="493" text-anchor="end" font-size="13" font-family='"Liberation Sans",sans-serif' fill="#00f000">0</text>
<text x="794" y="515" font-size="13" font-family='"Liberation Sans",sans-serif' fill="#fff">09:05</text>
<text x="916" y="515" text-anchor="end" font-size="13" font-family='"Liberation Sans",sans-serif' fill="#00f000">1.3877</text>
<text x="1000" y="515" text-anchor="end" font-size="13" font-family='"Liberation Sans",sans-serif' fill="#ffffff">0</text>
<text x="794" y="537" font-size="13" font-family='"Liberation Sans",sans-serif' fill="#fff">09:05</text>
<text x="916" y="537" text-anchor="end" font-size="13" font-family='"Liberation Sans",sans-serif' fill="#00f000">1.3878</text>
<text x="1000" y="537" text-anchor="end" font-size="13" font-family='"Liberation Sans",sans-serif' fill="#ffffff">0</text>
<text x="794" y="559" font-size="13" font-family='"Liberation Sans",sans-serif' fill="#fff">09:05</text>
<text x="916" y="559" text-anchor="end" font-size="13" font-family='"Liberation Sans",sans-serif' fill="#00f000">1.3877</text>
<text x="1000" y="559" text-anchor="end" font-size="13" font-family='"Liberation Sans",sans-serif' fill="#00f000">0</text>
<text x="794" y="581" font-size="13" font-family='"Liberation Sans",sans-serif' fill="#fff">09:05</text>
<text x="916" y="581" text-anchor="end" font-size="13" font-family='"Liberation Sans",sans-serif' fill="#00f000">1.3879</text>
<text x="1000" y="581" text-anchor="end" font-size="13" font-family='"Liberation Sans",sans-serif' fill="#ffffff">0</text>
<text x="794" y="603" font-size="13" font-family='"Liberation Sans",sans-serif' fill="#fff">09:05</text>
<text x="916" y="603" text-anchor="end" font-size="13" font-family='"Liberation Sans",sans-serif' fill="#00f000">1.3880</text>
<text x="1000" y="603" text-anchor="end" font-size="13" font-family='"Liberation Sans",sans-serif' fill="#ffffff">0</text>
<text x="794" y="625" font-size="13" font-family='"Liberation Sans",sans-serif' fill="#fff">09:06</text>
<text x="916" y="625" text-anchor="end" font-size="13" font-family='"Liberation Sans",sans-serif' fill="#00f000">1.3879</text>
<text x="1000" y="625" text-anchor="end" font-size="13" font-family='"Liberation Sans",sans-serif' fill="#00f000">0</text>
<text x="794" y="647" font-size="13" font-family='"Liberation Sans",sans-serif' fill="#fff">09:06</text>
<text x="916" y="647" text-anchor="end" font-size="13" font-family='"Liberation Sans",sans-serif' fill="#00f000">1.3878</text>
<text x="1000" y="647" text-anchor="end" font-size="13" font-family='"Liberation Sans",sans-serif' fill="#00f000">0</text>
<text x="794" y="669" font-size="13" font-family='"Liberation Sans",sans-serif' fill="#fff">09:07</text>
<text x="916" y="669" text-anchor="end" font-size="13" font-family='"Liberation Sans",sans-serif' fill="#00f000">1.3877</text>
<text x="1000" y="669" text-anchor="end" font-size="13" font-family='"Liberation Sans",sans-serif' fill="#00f000">0</text>
<text x="794" y="691" font-size="13" font-family='"Liberation Sans",sans-serif' fill="#fff">09:07</text>
<text x="916" y="691" text-anchor="end" font-size="13" font-family='"Liberation Sans",sans-serif' fill="#00f000">1.3878</text>
<text x="1000" y="691" text-anchor="end" font-size="13" font-family='"Liberation Sans",sans-serif' fill="#ffffff">0</text>
<text x="794" y="713" font-size="13" font-family='"Liberation Sans",sans-serif' fill="#fff">09:07</text>
<text x="916" y="713" text-anchor="end" font-size="13" font-family='"Liberation Sans",sans-serif' fill="#00f000">1.3877</text>
<text x="1000" y="713" text-anchor="end" font-size="13" font-family='"Liberation Sans",sans-serif' fill="#00f000">0</text>
<text x="794" y="735" font-size="13" font-family='"Liberation Sans",sans-serif' fill="#fff">10:08</text>
<text x="916" y="735" text-anchor="end" font-size="13" font-family='"Liberation Sans",sans-serif' fill="#00f000">1.3878</text>
<text x="1000" y="735" text-anchor="end" font-size="13" font-family='"Liberation Sans",sans-serif' fill="#ff3030">0</text>
<defs><pattern id="d3" width="2" height="2" patternUnits="userSpaceOnUse"><rect width="2" height="2" fill="#ffffff"/><rect width="1" height="1" fill="#e0e0ec"/><rect x="1" y="1" width="1" height="1" fill="#ececf4"/></pattern><linearGradient id="sbg" x1="0" y1="0" x2="1" y2="0"><stop offset="0" stop-color="#d8e0ff"/><stop offset="1" stop-color="#b0c0f0"/></linearGradient></defs>
<rect x="1004" y="257" width="17" height="484" fill="url(#d3)"/>
<rect x="1004.5" y="257.5" width="16" height="16" rx="2" fill="url(#sbg)" stroke="#90a0d8"/><path d="M1008,268 L1012,263.5 L1016,268" fill="none" stroke="#405090" stroke-width="2"/>
<rect x="1004.5" y="708.5" width="16" height="14" rx="2" fill="url(#sbg)" stroke="#90a0d8"/><path d="M1008.5,713 H1015.5 M1008.5,715.5 H1015.5 M1008.5,718 H1015.5" stroke="#e8f0ff" stroke-width="1"/>
<rect x="1004.5" y="724.5" width="16" height="15.5" rx="2" fill="url(#sbg)" stroke="#90a0d8"/><path d="M1008,730 L1012,734.5 L1016,730" fill="none" stroke="#405090" stroke-width="2"/>
</svg>
<svg id="pal" width="84" height="284" viewBox="828 419 84 284" style="position:absolute;left:828px;top:419px">
<defs><linearGradient id="pt" x1="0" y1="0" x2="1" y2="0"><stop offset="0" stop-color="#6c86d8"/><stop offset="0.7" stop-color="#7c90dc"/><stop offset="1" stop-color="#98a4e4"/></linearGradient><pattern id="d4" width="2" height="2" patternUnits="userSpaceOnUse"><rect width="2" height="2" fill="#f8f6d4"/><rect width="1" height="1" fill="#ffffea"/><rect x="1" y="1" width="1" height="1" fill="#d4d0c8"/></pattern></defs>
<rect x="828" y="419" width="83" height="283" fill="#7884dc"/>
<rect x="829" y="420" width="81" height="19" fill="url(#pt)"/>
<rect x="831" y="439" width="77" height="260" fill="url(#d4)"/>
<text x="832" y="434" font-size="12" font-family='"Liberation Sans","Noto Sans CJK SC",sans-serif' font-weight="bold" fill="#ffffff">画线</text>
<rect x="894.5" y="425.5" width="11" height="11" rx="1.5" fill="#c05070" stroke="#e8e0f0"/><path d="M897.5,428.5 L902.5,433.5 M902.5,428.5 L897.5,433.5" stroke="#fff" stroke-width="1.6"/>
<g transform="translate(844,453)"><path d="M-6,-6 L6,6" stroke="#101010" stroke-width="1" fill="none"/></g>
<g transform="translate(870,453)"><path d="M-5,-5 L5,5" stroke="#101010" stroke-width="1" fill="none"/><circle cx="-5" cy="-5" r="1.2" fill="#101010"/><circle cx="5" cy="5" r="1.2" fill="#101010"/></g>
<g transform="translate(896,453)"><path d="M-6,-3 L3,6 M-2,-6 L6,2" stroke="#101010" stroke-width="1" fill="none"/></g>
<g transform="translate(844,478.7)"><path d="M-6,0 H6 M-6,-2 V2" stroke="#101010" stroke-width="1" fill="none"/></g>
<g transform="translate(870,478.7)"><path d="M0,-7 V7 M-2,-7 H2" stroke="#101010" stroke-width="1" fill="none"/></g>
<g transform="translate(896,478.7)"><rect x="-5" y="-4" width="10" height="8" stroke="#101010" stroke-width="1" fill="none"/></g>
<g transform="translate(844,504.5)"><path d="M-6,6 L6,-6" stroke="#101010" stroke-width="1" fill="none"/><circle cx="-6" cy="6" r="1.2" fill="#101010"/></g>
<g transform="translate(870,504.5)"><path d="M-5,-5 L6,6" stroke="#101010" stroke-width="1" fill="none"/><circle cx="-5" cy="-5" r="1.2" fill="#101010"/></g>
<g transform="translate(896,504.5)"><path d="M-5,-4 Q-2,-9 0,0 Q2,9 5,3 Q6,0 4,-1" stroke="#101010" stroke-width="1" fill="none"/></g>
<g transform="translate(844,531)"><path d="M-5,-4 H1 A4,4 0 0 1 1,4 H-5" stroke="#101010" stroke-width="1" fill="none"/></g>
<g transform="translate(870,531)"><path d="M-6,5 H6 M-6,5 L6,-6" stroke="#101010" stroke-width="1" fill="none"/><path d="M-6,5 L6,0" stroke="#1050c0" stroke-width="1" fill="none"/></g>
<g transform="translate(896,531)"><path d="M-6,-6 V6 M-6,6 L6,-6" stroke="#101010" stroke-width="1" fill="none"/><path d="M-6,6 L0,-6 M-6,6 L6,-1 M-6,6 L6,3 M-6,6 L3,-6" stroke="#1050c0" stroke-width="1" fill="none"/></g>
<g transform="translate(844,557.2)"><path d="M-7,-6 H7 M-7,6.5 H7" stroke="#101010" stroke-width="1" fill="none"/><path d="M-1,-3.5 H7 M-1,-1.5 H7 M-1,0.5 H7 M-7,2.5 H7 M-7,4.5 H7" stroke="#1050c0" stroke-width="1" fill="none"/><text x="-7" y="2" font-size="7" font-weight="bold" font-family='"Liberation Sans",sans-serif' fill="#1050c0">G</text></g>
<g transform="translate(870,557.2)"><path d="M-7,-6 H7 M-7,6.5 H7" stroke="#101010" stroke-width="1" fill="none"/><path d="M-1,-3.5 H7 M-1,-1.5 H7 M-1,0.5 H7 M-7,2.5 H7 M-7,4.5 H7" stroke="#1050c0" stroke-width="1" fill="none"/><text x="-7" y="2" font-size="7" font-weight="bold" font-family='"Liberation Sans",sans-serif' fill="#1050c0">%</text></g>
<g transform="translate(896,557.2)"><path d="M-7,-6 H7 M-7,6.5 H7" stroke="#101010" stroke-width="1" fill="none"/><path d="M-1,-3.5 H7 M-1,-1.5 H7 M-1,0.5 H7 M-7,2.5 H7 M-7,4.5 H7" stroke="#1050c0" stroke-width="1" fill="none"/><text x="-7" y="2" font-size="7" font-weight="bold" font-family='"Liberation Sans",sans-serif' fill="#1050c0">%</text></g>
<g transform="translate(844,582.8)"><path d="M-5.5,-6 V6 M-2,-6 V6 M1.5,-6 V6 M5,-6 V6" stroke="#1050c0" stroke-width="1" fill="none"/></g>
<g transform="translate(870,582.8)"><path d="M-7,-6 V6 M-4.5,-6 V6 M-1.5,-6 V6 M2,-6 V6 M6,-6 V6" stroke="#1050c0" stroke-width="1" fill="none"/></g>
<g transform="translate(896,582.8)"><path d="M-5,-6 V6 M5,-6 V6" stroke="#101010" stroke-width="1" fill="none"/><path d="M-5,-1 L5,-5 M-5,2.5 L5,-1.5 M-5,6 L5,2" stroke="#1050c0" stroke-width="1" fill="none"/></g>
<g transform="translate(844,608.5)"><path d="M-5,-6 V6 M0,-6 V6" stroke="#101010" stroke-width="1" fill="none"/><path d="M-5,-1 L5,-5 M-5,2.5 L5,-1.5 M-5,6 L5,2" stroke="#1050c0" stroke-width="1" fill="none"/></g>
<g transform="translate(870,608.5)"><text x="0" y="6" text-anchor="middle" font-size="17" font-family='"Liberation Sans",sans-serif' fill="#101010">A</text></g>
<g transform="translate(896,608.5)"><circle r="7.5" fill="#c8c8d0" stroke="#4060c0" stroke-width="1"/><circle r="5.5" fill="none" stroke="#e03030" stroke-width="2.2" stroke-dasharray="1.5 1.2"/><circle r="2.5" fill="#e8e8f0"/></g>
<g transform="translate(844,634.5)"><g transform="translate(0,0.6) rotate(0) scale(0.78)"><path d="M0,-7 L6,-0.5 H2.8 V6 H-2.8 V-0.5 H-6 Z" fill="#ff3010" stroke="#600000" stroke-width="1"/></g></g>
<g transform="translate(870,634.5)"><g transform="translate(0,0.6) rotate(45) scale(0.9)"><path d="M0,-7 L6,-0.5 H2.8 V6 H-2.8 V-0.5 H-6 Z" fill="#ff1010" stroke="#600000" stroke-width="1"/></g></g>
<g transform="translate(896,634.5)"><g transform="translate(0,0.6) rotate(-45) scale(0.9)"><path d="M0,-7 L6,-0.5 H2.8 V6 H-2.8 V-0.5 H-6 Z" fill="#ff1010" stroke="#600000" stroke-width="1"/></g></g>
<g transform="translate(844,660.5)"><g transform="translate(0,0.6) rotate(180) scale(0.78)"><path d="M0,-7 L6,-0.5 H2.8 V6 H-2.8 V-0.5 H-6 Z" fill="#50b020" stroke="#204000" stroke-width="1"/></g></g>
<g transform="translate(870,660.5)"><g transform="translate(0,0.6) rotate(135) scale(0.9)"><path d="M0,-7 L6,-0.5 H2.8 V6 H-2.8 V-0.5 H-6 Z" fill="#50b020" stroke="#204000" stroke-width="1"/></g></g>
<g transform="translate(896,660.5)"><g transform="translate(0,0.6) rotate(-135) scale(0.9)"><path d="M0,-7 L6,-0.5 H2.8 V6 H-2.8 V-0.5 H-6 Z" fill="#50b020" stroke="#204000" stroke-width="1"/></g></g>
<g transform="translate(844,687)"><path d="M-7,4 L0,-4 H7 L1,4 Z" fill="#f8d820" stroke="#605000" stroke-width="0.8"/><path d="M-7,4 V6 H1 L7,-2 V-4" fill="#c0a000" stroke="#605000" stroke-width="0.6"/></g>
<g transform="translate(883,687)"><path d="M-7,-2 H0" stroke="#1050c0" stroke-width="2"/><path d="M-9,-2 L-5,-6 V2 Z" fill="#1050c0"/><path d="M-8,3 H0" stroke="#e02020" stroke-width="3"/><path d="M2,-6 H6 M2,-3.5 H6 M2,-1 H6 M2,1.5 H6 M2,4 H6" stroke="#101010" stroke-width="1.4"/></g>
</svg>
<svg id="hdr" width="1024" height="49" viewBox="0 0 1024 49" style="position:absolute;left:0;top:0">
<defs>
<linearGradient id="tg" x1="0" y1="0" x2="1024" y2="0" gradientUnits="userSpaceOnUse">
<stop offset="0" stop-color="#cbcce2"/><stop offset="0.24" stop-color="#c6c8e4"/>
<stop offset="0.5" stop-color="#a2a4d8"/><stop offset="0.625" stop-color="#8890ce"/>
<stop offset="0.75" stop-color="#6c7acb"/><stop offset="0.92" stop-color="#5c74cc"/><stop offset="1" stop-color="#5c74cc"/>
</linearGradient>
<pattern id="d1" width="2" height="2" patternUnits="userSpaceOnUse"><rect width="1" height="1" fill="#ffffff" fill-opacity="0.22"/><rect x="1" y="1" width="1" height="1" fill="#5050a0" fill-opacity="0.14"/></pattern>
<pattern id="d2" width="2" height="2" patternUnits="userSpaceOnUse"><rect width="1" height="1" fill="#e8ffff" fill-opacity="0.7"/><rect x="1" y="1" width="1" height="1" fill="#c8c0c8" fill-opacity="0.6"/></pattern>
<linearGradient id="bb" x1="0" y1="0" x2="0" y2="1"><stop offset="0" stop-color="#6aa0e0"/><stop offset="1" stop-color="#a8d0f8"/></linearGradient>
<radialGradient id="wb" cx="0.4" cy="0.35" r="0.7"><stop offset="0" stop-color="#ffffff"/><stop offset="1" stop-color="#c8d0e8"/></radialGradient>
</defs>
<rect width="1024" height="49" fill="#d0d2f4"/>
<polygon points="0,0 964,0 941.5,25 0,25" fill="url(#tg)"/>
<rect width="1024" height="25" fill="url(#d1)" shape-rendering="crispEdges"/>
<rect y="25" width="1024" height="22" fill="url(#d2)" shape-rendering="crispEdges"/>
<polygon points="964,0 1024,0 1024,25 941.5,25" fill="#d0d2f4"/>
<polygon points="964,0 1024,0 1024,25 941.5,25" fill="url(#d2)"/>
<rect y="47" width="1024" height="1" fill="#9a9aa8"/><rect y="48" width="1024" height="1" fill="#d0d0d0"/>
<rect x="0" y="25" width="1" height="22" fill="#8888b8"/>
<circle cx="9.5" cy="11.5" r="6.5" fill="url(#wb)" stroke="#7a86a8" stroke-width="1"/>
<path d="M6.8,10.5 L9.5,7.8 L12.2,10.5 M6.8,12.5 L9.5,15.2 L12.2,12.5" stroke="#202060" stroke-width="1.6" fill="none"/>
<circle cx="971.5" cy="11.5" r="8" fill="url(#wb)" stroke="#6878a0" stroke-width="1.3"/>
<rect x="968.5" y="14" width="6" height="2" fill="#303860"/>
<circle cx="991.5" cy="11.5" r="8" fill="url(#wb)" stroke="#6878a0" stroke-width="1.3"/>
<rect x="987.5" y="10.5" width="6" height="5" fill="none" stroke="#303860" stroke-width="1.2"/><path d="M989.5,10 V8 H995.5 V13 H994.0" fill="none" stroke="#303860" stroke-width="1.2"/>
<circle cx="1011.5" cy="11.5" r="8" fill="url(#wb)" stroke="#6878a0" stroke-width="1.3"/>
<path d="M1008.0,8 L1015.0,15 M1015.0,8 L1008.0,15" stroke="#303860" stroke-width="2"/>
<text x="28" y="17" font-size="12" font-family='"Liberation Sans","Noto Sans CJK SC",sans-serif' font-weight="500" fill="#000" textLength="24.5">系统</text>
<text x="68" y="17" font-size="12" font-family='"Liberation Sans","Noto Sans CJK SC",sans-serif' font-weight="500" fill="#000" textLength="24.5">页面</text>
<text x="108" y="17" font-size="12" font-family='"Liberation Sans","Noto Sans CJK SC",sans-serif' font-weight="500" fill="#000" textLength="24.5">图表</text>
<text x="147" y="17" font-size="12" font-family='"Liberation Sans","Noto Sans CJK SC",sans-serif' font-weight="500" fill="#000" textLength="24.5">分析</text>
<text x="187" y="17" font-size="12" font-family='"Liberation Sans","Noto Sans CJK SC",sans-serif' font-weight="500" fill="#000" textLength="24.5">新闻</text>
<text x="228" y="17" font-size="12" font-family='"Liberation Sans","Noto Sans CJK SC",sans-serif' font-weight="500" fill="#000" textLength="72.5">中信建投专栏</text>
<text x="316" y="17" font-size="12" font-family='"Liberation Sans","Noto Sans CJK SC",sans-serif' font-weight="500" fill="#000" textLength="48.5">手机行情</text>
<text x="380" y="17" font-size="12" font-family='"Liberation Sans","Noto Sans CJK SC",sans-serif' font-weight="500" fill="#000" textLength="24.5">交易</text>
<text x="420" y="17" font-size="12" font-family='"Liberation Sans","Noto Sans CJK SC",sans-serif' font-weight="500" fill="#000" textLength="24.5">工具</text>
<text x="459" y="17" font-size="12" font-family='"Liberation Sans","Noto Sans CJK SC",sans-serif' font-weight="500" fill="#000" textLength="24.5">帮助</text>
<text x="632" y="19" font-size="18" font-family='"Liberation Serif","Noto Serif CJK SC",serif' font-weight="500" fill="#ff1010" stroke="#ff1010" stroke-width="0.25" letter-spacing="2.2">中信建投</text>
<text x="709.5" y="18.5" font-size="18" font-family='"Liberation Serif","Noto Serif CJK SC",serif' font-weight="bold" fill="#ff1010" textLength="10" lengthAdjust="spacingAndGlyphs">-</text>
<text x="722" y="19" font-size="18" font-family='"Liberation Serif","Noto Serif CJK SC",serif' font-weight="500" fill="#ff1010" stroke="#ff1010" stroke-width="0.25" letter-spacing="2.6">博易大师</text>
<g transform="translate(4.5,28.5)"><rect x="0" y="0" width="15" height="15" rx="3.5" fill="url(#bb)" stroke="#6088c0" stroke-width="0.8"/><path d="M3,7 L7.5,3 V5.5 H11.5 V9 H7.5 V11 Z" fill="#d0dcfa"/><path d="M7.5,11.4 V9.4 H11.9 V6" fill="none" stroke="#203868" stroke-width="1"/></g>
<g transform="translate(29,29)"><rect x="0.5" y="0.5" width="14.5" height="14" fill="#eef0ff" fill-opacity="0.45" stroke="#1060d8" stroke-width="1.1"/><rect x="0" y="0" width="15.5" height="1.8" fill="#1060d8"/><polyline points="1.2,10 4.5,6.5 8,9 13.8,3.5" fill="none" stroke="#ff1010" stroke-width="1.6"/></g>
<g transform="translate(54,29)"><rect x="0.5" y="0.5" width="14.5" height="14" fill="#eef0ff" fill-opacity="0.45" stroke="#1060d8" stroke-width="1.1"/><rect x="0" y="0" width="15.5" height="1.8" fill="#1060d8"/><path d="M3.5,4.5 V12.5 M12,4.5 V12.5" stroke="#2060e0" stroke-width="1"/><path d="M3.5,6.5 V10.5 M12,6.5 V10.5" stroke="#2060e0" stroke-width="2"/><path d="M8,2 V10.5" stroke="#ff1010" stroke-width="1.2"/><path d="M8,3.5 V8" stroke="#ff1010" stroke-width="2.6"/><path d="M1.2,9.5 Q3.5,6 7,6.5 Q11.5,6.5 14.5,10.5" fill="none" stroke="#ffe800" stroke-width="1.2"/></g>
<g transform="translate(79,29)"><rect x="0.5" y="0.5" width="14.5" height="14" fill="#eef0ff" fill-opacity="0.45" stroke="#1060d8" stroke-width="1.1"/><rect x="0" y="0" width="15.5" height="1.8" fill="#1060d8"/><path d="M2,3.5 H5.8 M9,3.5 H12.8" stroke="#30b030" stroke-width="1.2"/><path d="M2,6.7 H5.8 M9,6.7 H12.8" stroke="#2060d0" stroke-width="1.2"/><path d="M2,9.7 H5.8 M9,9.7 H12.8" stroke="#ff6020" stroke-width="1.2"/><path d="M2,12.3 H5.8 M9,12.3 H12.8" stroke="#90a8e0" stroke-width="1"/></g>
<g transform="translate(104.5,29)"><rect x="0.5" y="0.5" width="14.5" height="14" fill="#eef0ff" fill-opacity="0.45" stroke="#1060d8" stroke-width="1.1"/><rect x="0" y="0" width="15.5" height="1.8" fill="#1060d8"/><path d="M1.8,4.5 H8.5 M1.8,7.5 H7 M1.8,10.5 H6.5" stroke="#2060d0" stroke-width="1.7"/><circle cx="11.3" cy="10.5" r="3.8" fill="#1858b8"/><path d="M8.5,9.5 Q10,6.5 12.5,8 Q12,10.5 10,12 Q9,11 8.5,9.5" fill="#40c040"/></g>
<g transform="translate(129,29)"><rect x="0.5" y="0.5" width="14.5" height="14" fill="#eef0ff" fill-opacity="0.45" stroke="#1060d8" stroke-width="1.1"/><rect x="0" y="0" width="15.5" height="1.8" fill="#1060d8"/><text x="1.8" y="12" font-size="10.5" font-family='"Liberation Sans",sans-serif' font-weight="bold" fill="#103080" textLength="12" lengthAdjust="spacingAndGlyphs">F10</text></g>
<rect x="153" y="27" width="1" height="18" fill="#a0a0b8"/><rect x="154" y="27" width="1" height="18" fill="#f4f4ff"/>
<defs><linearGradient id="dg" x1="0" y1="0" x2="1" y2="1"><stop offset="0" stop-color="#ffffff"/><stop offset="1" stop-color="#f8e880"/></linearGradient></defs>
<g transform="translate(164,28)"><path d="M0.5,0.5 H9.5 L12.5,3.5 V14.5 H0.5 Z" fill="url(#dg)" stroke="#6080c0" stroke-width="0.9"/><path d="M4,8 C3.5,5 5.5,4 7,4" fill="none" stroke="#20a8a0" stroke-width="1.5"/><path d="M6.5,1.8 L9.5,4 L6.5,6.2 Z" fill="#18a018"/><path d="M9.5,7 C10,10 8,11 6.5,11" fill="none" stroke="#18a018" stroke-width="1.5"/><path d="M7,8.8 L4,11 L7,13.2 Z" fill="#18a018"/></g>
<g transform="translate(187,28)"><path d="M1,14.5 L5.5,10.3" stroke="#a06020" stroke-width="3" stroke-linecap="round"/><path d="M1,14.5 L5.5,10.3" stroke="#f8b040" stroke-width="1.8" stroke-linecap="round"/><circle cx="8.8" cy="7.3" r="4.4" fill="#d8ecff" stroke="#909090" stroke-width="1.1"/><path d="M6.5,6 Q8,4 10,4.5" stroke="#fff" stroke-width="1.4" fill="none"/><circle cx="12.6" cy="4.2" r="3.3" fill="#f4f4ff" stroke="#101010" stroke-width="1.2"/><path d="M10.9,4.2 H14.3" stroke="#101010" stroke-width="1.3"/><path d="M12.6,2.5 V5.9" stroke="#101010" stroke-width="1.3"/></g>
<g transform="translate(212,28)"><path d="M1,14.5 L5.5,10.3" stroke="#a06020" stroke-width="3" stroke-linecap="round"/><path d="M1,14.5 L5.5,10.3" stroke="#f8b040" stroke-width="1.8" stroke-linecap="round"/><circle cx="8.8" cy="7.3" r="4.4" fill="#d8ecff" stroke="#909090" stroke-width="1.1"/><path d="M6.5,6 Q8,4 10,4.5" stroke="#fff" stroke-width="1.4" fill="none"/><circle cx="12.6" cy="4.2" r="3.3" fill="#f4f4ff" stroke="#101010" stroke-width="1.2"/><path d="M10.9,4.2 H14.3" stroke="#101010" stroke-width="1.3"/></g>
<g transform="translate(237,28)"><rect x="0" y="0.5" width="15.5" height="5.5" fill="#808088"/><rect x="1" y="1.5" width="4" height="3.5" fill="#ffc820"/><rect x="6" y="1.5" width="4" height="3.5" fill="#1850b0"/><rect x="11" y="1.5" width="3.8" height="3.5" fill="#ff1010"/><path d="M6.5,4.5 Q7.5,3.5 8.5,4.5 V8 H10 V8.5 H11.5 V9 H13 Q13.8,9.2 13.8,10.5 V12 L12.5,15 H7 L4,11 L5,9.8 L6.5,10.8 Z" fill="#ffffff" stroke="#181818" stroke-width="1.1"/></g>
<g transform="translate(262,28)"><rect x="3.5" y="4.5" width="11.5" height="10.5" fill="#dce8ff" stroke="#2060d0"/><rect x="3" y="4" width="12.5" height="1.6" fill="#2060d0"/><rect x="0.5" y="0.5" width="11" height="10" fill="#e4e8ff" stroke="#2060d0"/><rect x="0" y="0" width="12" height="1.8" fill="#2060d0"/><path d="M6,5.5 L12,11.5" stroke="#ff1010" stroke-width="2"/><path d="M14,7.5 V13.5 H8 Z" fill="#ff1010"/></g>
<g transform="translate(287,28)"><rect x="0.5" y="0.5" width="14.5" height="14.5" fill="#e8ecff" fill-opacity="0.5" stroke="#2060d0"/><rect x="0" y="0" width="15.5" height="1.8" fill="#2060d0"/><rect x="10.5" y="2" width="4" height="12.5" fill="#fff"/><path d="M10.5,3.5 H13.5 M10.5,5.5 H13.5 M10.5,7.5 H13.5 M10.5,9.5 H13.5 M10.5,11.5 H13.5 M10.5,13.5 H13.5" stroke="#ff1010" stroke-width="1.1"/><path d="M14.5,2 V14.5" stroke="#1040d0" stroke-width="1.2"/><path d="M2,8 H7" stroke="#1060d0" stroke-width="2"/><path d="M5.5,4.8 L9,8 L5.5,11.2 Z" fill="#1060d0"/></g>
<rect x="311" y="27" width="1" height="18" fill="#a0a0b8"/><rect x="312" y="27" width="1" height="18" fill="#f4f4ff"/>
<rect x="316.5" y="25.5" width="23.5" height="20.5" rx="3" fill="#d8f4d0" stroke="#101010" stroke-width="1.2"/>
<g transform="translate(320,29)"><rect x="0.5" y="0.5" width="14.5" height="13.5" fill="none" stroke="#1060d8" stroke-width="1.1"/><rect x="0" y="0" width="15.5" height="1.8" fill="#1060d8"/><path d="M2.5,11.5 H6" fill="none" stroke="#102080" stroke-width="1.3"/><path d="M6,11.5 L7,9 L12,4 L13.5,5.5 L8.5,10.5 Z" fill="#a0b8ff" stroke="#1838a0" stroke-width="1"/></g>
<g transform="translate(345,28)"><path d="M7.5,1 C5,1 4.5,4 4,7 C3.6,9.5 2,10.5 0.5,11.5 V12.5 H14.5 V11.5 C13,10.5 11.4,9.5 11,7 C10.5,4 10,1 7.5,1 Z" fill="#f01818" stroke="#901010" stroke-width="0.6"/><path d="M0.5,12 H14.5" stroke="#101010" stroke-width="1.4"/><circle cx="7.5" cy="14.5" r="1.6" fill="#d01010"/><path d="M6,3.5 Q7,2.2 8,2.5" stroke="#ffb0b0" stroke-width="1" fill="none"/></g>
<g transform="translate(370,28)"><circle cx="11.5" cy="4.5" r="3.2" fill="#f0c080"/><path d="M8,3.5 Q11.5,-1 15,3.5 Q11.5,2 8,3.5" fill="#c09030"/><path d="M6.5,15.5 V11 Q11.5,6 16.5,11 V15.5 Z" fill="#40a840"/><circle cx="5" cy="6" r="3.3" fill="#f0b070"/><path d="M1.2,6.5 Q1,1.5 5,1.5 Q9,1.5 8.8,6.5 Q5,2.5 1.2,6.5" fill="#202020"/><path d="M0,16 V12 Q5,7 10,12 V16 Z" fill="#2858b8"/><path d="M4,10 L5,13.5 L6,10 Z" fill="#fff"/></g>
<g transform="translate(396,28)"><path d="M8,0.5 L2,8 H6 L1,15.5 L11.5,6.5 H7 L11,0.5 Z" fill="#ffb010" stroke="#e07000" stroke-width="0.7"/><path d="M8,1.5 L4,7" stroke="#fff080" stroke-width="1"/></g>
<rect x="419" y="27" width="1" height="18" fill="#a0a0b8"/><rect x="420" y="27" width="1" height="18" fill="#f4f4ff"/>
<text x="436" y="41" text-anchor="middle" font-size="12" font-family='"Liberation Sans","Noto Sans CJK SC",sans-serif' fill="#000">日</text>
<text x="460.5" y="41" text-anchor="middle" font-size="12" font-family='"Liberation Sans","Noto Sans CJK SC",sans-serif' fill="#000">周</text>
<text x="486" y="41" text-anchor="middle" font-size="12" font-family='"Liberation Sans","Noto Sans CJK SC",sans-serif' fill="#000">月</text>
<text x="511" y="41" text-anchor="middle" font-size="12" font-family='"Liberation Sans","Noto Sans CJK SC",sans-serif' fill="#000">季</text>
<rect x="624.5" y="25.5" width="24" height="20.5" rx="3" fill="#d8f4d0" stroke="#101010" stroke-width="1.2"/>
<text x="535.5" y="40.5" text-anchor="middle" font-size="12" font-family='"Liberation Sans",sans-serif' fill="#000">×</text>
<text x="560.5" y="40.5" text-anchor="middle" font-size="12" font-family='"Liberation Sans",sans-serif' fill="#000">1</text>
<text x="585" y="40.5" text-anchor="middle" font-size="12" font-family='"Liberation Sans",sans-serif' fill="#000">3</text>
<text x="610" y="40.5" text-anchor="middle" font-size="12" font-family='"Liberation Sans",sans-serif' fill="#000">5</text>
<text x="636.5" y="40.5" text-anchor="middle" font-size="12" font-family='"Liberation Sans",sans-serif' fill="#000">15</text>
<text x="660" y="40.5" text-anchor="middle" font-size="12" font-family='"Liberation Sans",sans-serif' fill="#000">30</text>
<text x="685" y="40.5" text-anchor="middle" font-size="12" font-family='"Liberation Sans",sans-serif' fill="#000">60</text>
<text x="710.5" y="40.5" text-anchor="middle" font-size="12" font-family='"Liberation Sans",sans-serif' fill="#000">2hr</text>
<text x="735" y="40.5" text-anchor="middle" font-size="12" font-family='"Liberation Sans",sans-serif' fill="#000">4hr</text>
<text x="760" y="40.5" text-anchor="middle" font-size="12" font-family='"Liberation Sans",sans-serif' fill="#000">Y</text>
</svg>
<svg id="sb" width="1024" height="18" viewBox="0 750 1024 18" style="position:absolute;left:0;top:750px">
<defs><pattern id="d5" width="2" height="2" patternUnits="userSpaceOnUse"><rect width="2" height="2" fill="#c8c8f4"/><rect width="1" height="1" fill="#e0f8f0"/><rect x="1" y="1" width="1" height="1" fill="#c8c8d8"/></pattern></defs>
<rect x="0" y="750" width="1024" height="18" fill="url(#d5)" shape-rendering="crispEdges"/>
<rect x="0" y="750" width="1024" height="1" fill="#d8d8d8"/><rect x="0" y="751" width="1024" height="1" fill="#f4f4f4"/><rect x="0" y="752" width="1024" height="1" fill="#dcdce8"/><rect x="0" y="767" width="1024" height="1" fill="#a8a8d0"/>
<text x="2" y="764.5" font-family='"Liberation Sans","Noto Sans CJK SC",sans-serif' font-weight="bold" font-size="12" fill="#0000f0">沪</text>
<text x="25" y="764" font-family='"Liberation Sans",sans-serif' font-weight="bold" font-size="12" fill="#108818" textLength="44" lengthAdjust="spacingAndGlyphs">3146.50</text>
<text x="86" y="764" font-family='"Liberation Sans",sans-serif' font-weight="bold" font-size="12" fill="#108818" textLength="35" lengthAdjust="spacingAndGlyphs">-13.01</text>
<text x="131" y="764" font-family='"Liberation Sans",sans-serif' font-weight="bold" font-size="12" fill="#101010" textLength="31" lengthAdjust="spacingAndGlyphs">620.8</text>
<text x="163" y="764.5" font-family='"Liberation Sans","Noto Sans CJK SC",sans-serif' font-weight="bold" font-size="12" fill="#101010">亿</text>
<text x="189" y="764.5" font-family='"Liberation Sans","Noto Sans CJK SC",sans-serif' font-weight="bold" font-size="12" fill="#0000f0">深</text>
<text x="207" y="764" font-family='"Liberation Sans",sans-serif' font-weight="bold" font-size="12" fill="#108818" textLength="50" lengthAdjust="spacingAndGlyphs">13786.44</text>
<text x="276" y="764" font-family='"Liberation Sans",sans-serif' font-weight="bold" font-size="12" fill="#108818" textLength="35" lengthAdjust="spacingAndGlyphs">-20.86</text>
<text x="319" y="764" font-family='"Liberation Sans",sans-serif' font-weight="bold" font-size="12" fill="#101010" textLength="31" lengthAdjust="spacingAndGlyphs">485.5</text>
<text x="351" y="764.5" font-family='"Liberation Sans","Noto Sans CJK SC",sans-serif' font-weight="bold" font-size="12" fill="#101010">亿</text>
<rect x="368" y="752" width="1" height="16" fill="#9090a8"/><rect x="369" y="752" width="1" height="16" fill="#f8f8ff"/>
<text y="764" font-size="12" font-family='"Liberation Sans","Noto Sans CJK SC",sans-serif' fill="#101010"><tspan x="414" textLength="180">〖金融财经〗市场快讯：澳博控股</tspan><tspan x="594" textLength="55" lengthAdjust="spacingAndGlyphs">(0880.HK)</tspan><tspan x="650" textLength="36">盘前升</tspan><tspan x="686" textLength="25" lengthAdjust="spacingAndGlyphs">1.6%</tspan><tspan x="711" textLength="120">；瑞士信贷上调目标价</tspan></text>
<rect x="833" y="752" width="83" height="16" fill="#0000ff"/>
<path d="M836,765 L842.5,754 L849,765 Z" fill="#ffff00"/>
<text x="850" y="765" font-size="13" font-weight="bold" font-family='"Liberation Sans",sans-serif' fill="#ffff00">1</text>
<rect x="916" y="752" width="1" height="16" fill="#f8f8ff"/>
<text x="919" y="763" font-size="14" font-weight="bold" font-family='"Liberation Sans",sans-serif' fill="#0000ff" textLength="31" lengthAdjust="spacingAndGlyphs">p<tspan fill="#ff0000">o</tspan>bo</text>
<rect x="955" y="752" width="1" height="16" fill="#9090a8"/><rect x="956" y="752" width="1" height="16" fill="#f8f8ff"/>
<path d="M961,755 H971 L966,761 Z M965.3,760 H966.7 V767 H965.3 Z" fill="#0000ff"/><path d="M972,767 V764 M975.5,767 V761 M979,767 V757" stroke="#0000ff" stroke-width="2"/>
<rect x="986" y="752" width="1" height="16" fill="#9090a8"/><rect x="987" y="752" width="1" height="16" fill="#f8f8ff"/>
<text x="990" y="764" font-size="13" font-family='"Liberation Sans",sans-serif' fill="#0000ff" textLength="30" lengthAdjust="spacingAndGlyphs">10:08</text>
</svg>
</body></html>
